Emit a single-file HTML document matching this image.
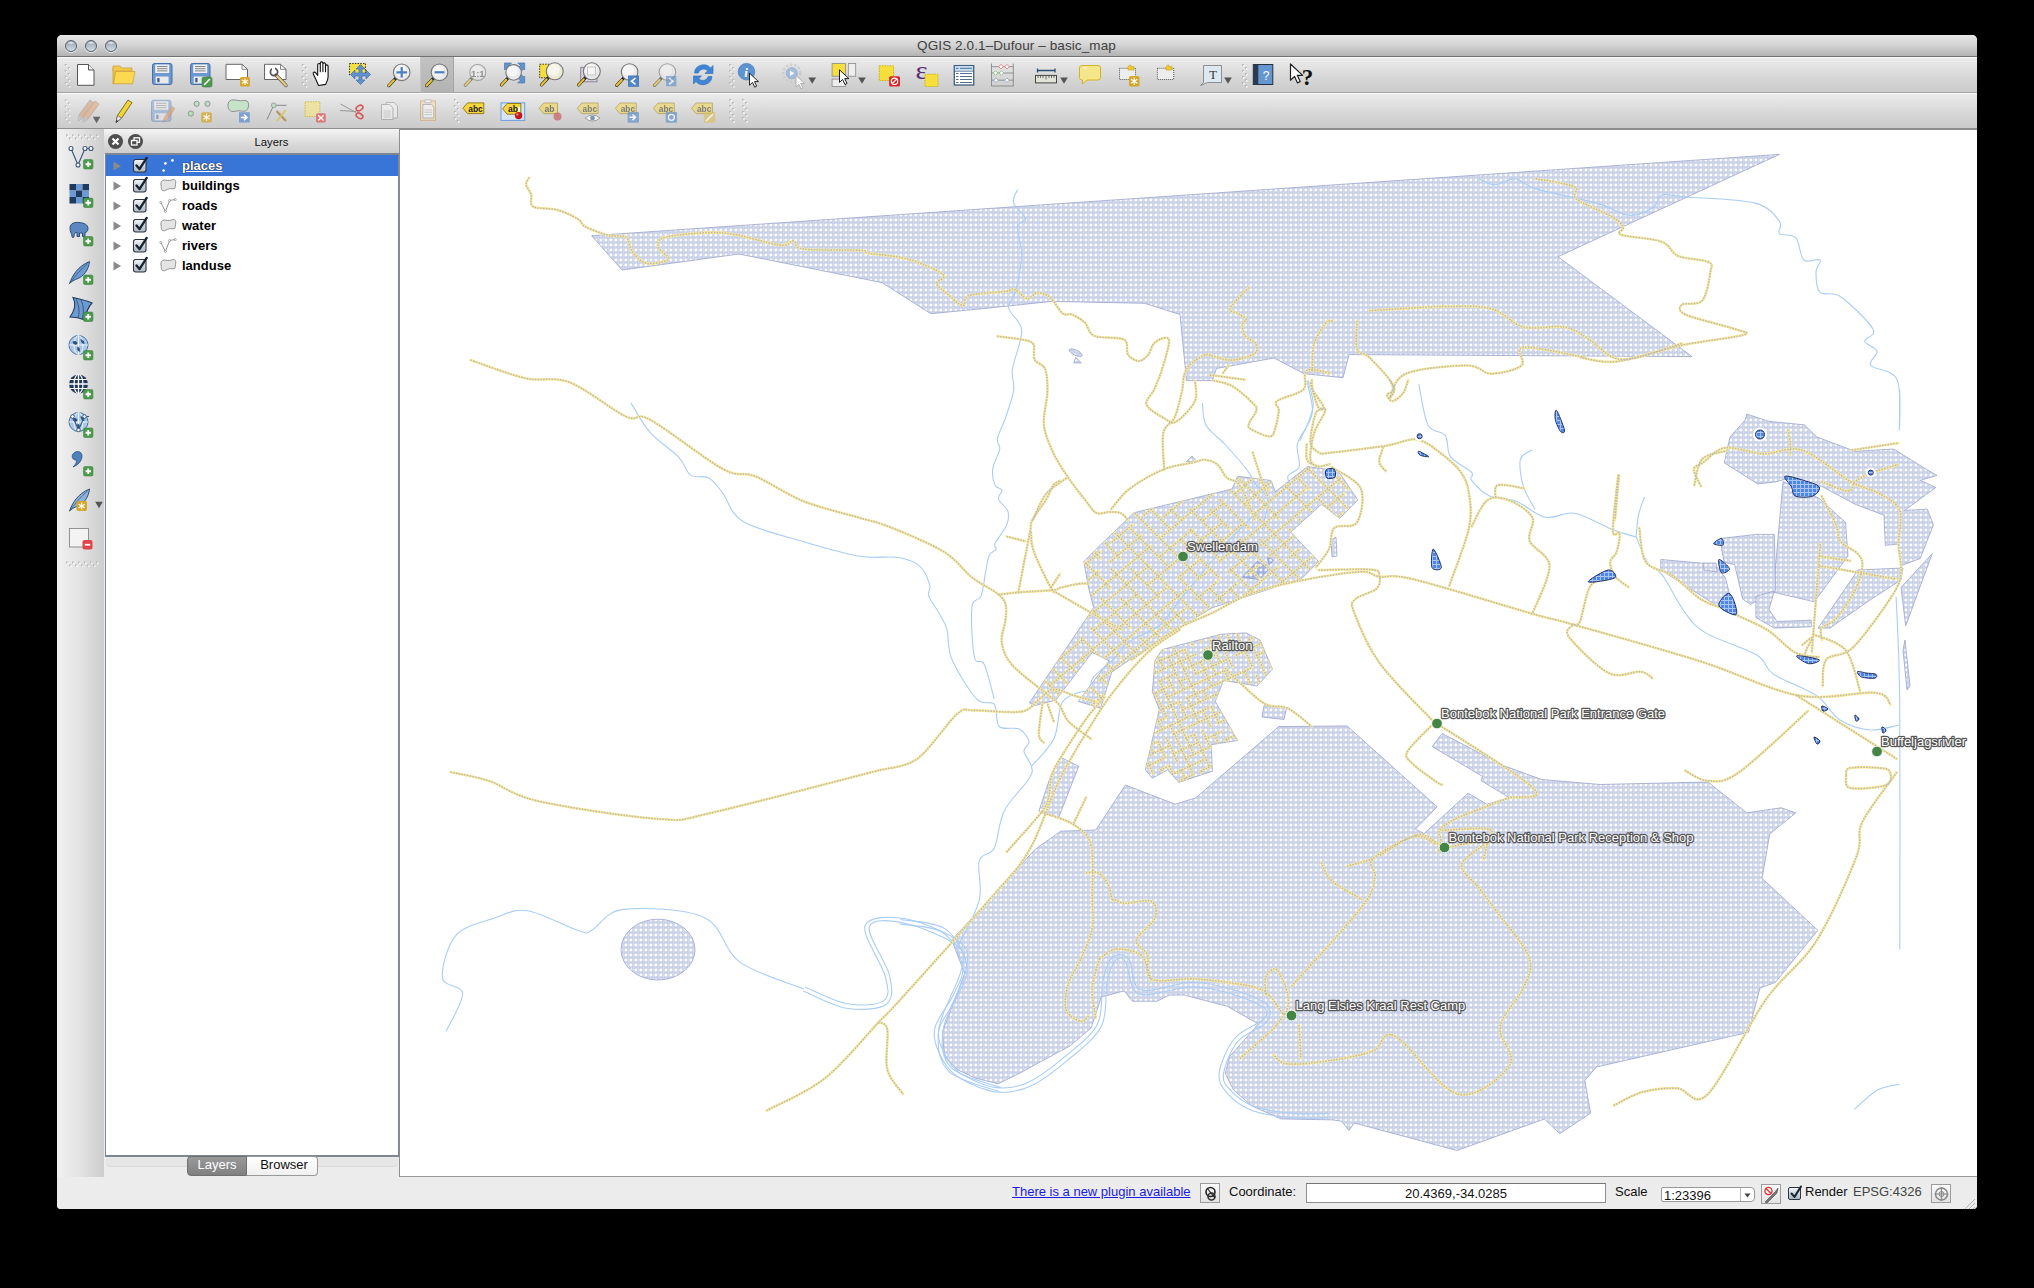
<!DOCTYPE html>
<html><head><meta charset="utf-8">
<style>
*{margin:0;padding:0;box-sizing:border-box}
html,body{width:2034px;height:1288px;background:#000;overflow:hidden;font-family:"Liberation Sans",sans-serif}
.a{position:absolute}
#win{left:57px;top:35px;width:1920px;height:1174px;background:#ececec;border-radius:5px 5px 4px 4px;overflow:hidden}
#title{left:0;top:0;width:1920px;height:22px;background:linear-gradient(#e7e7e7,#d2d2d2 50%,#b3b3b3);border-bottom:1px solid #727272}
#title .t{left:0;width:1919px;top:3px;text-align:center;font-size:13.5px;color:#404040;letter-spacing:0.1px}
.tl{width:12px;height:12px;border-radius:50%;top:5px;background:radial-gradient(ellipse 40% 18% at 50% 18%,#f2f5f8,rgba(255,255,255,0) 100%),linear-gradient(#8f9ba8,#b9c4cf 55%,#d5dde4);border:1.2px solid #56606b;box-shadow:0 1px 1px rgba(255,255,255,0.7)}
#tb1{left:0;top:22px;width:1920px;height:36px;background:linear-gradient(#ececec,#d6d6d6 60%,#cbcbcb);border-top:1px solid #fafafa;border-bottom:1px solid #a3a3a3}
#tb2{left:0;top:58px;width:1920px;height:36px;background:linear-gradient(#ebebeb,#d6d6d6 60%,#cbcbcb);border-top:1px solid #fafafa;border-bottom:1px solid #8f8f8f}
#ltb{left:0;top:94px;width:47px;height:1048px;background:linear-gradient(90deg,#f1f1f1,#e2e2e2 50%,#cdcdcd)}
#dock{left:47px;top:94px;width:296px;height:1048px;background:#ececec}
#dockhdr{left:0;top:0;width:295px;height:25px;background:linear-gradient(#f4f4f4,#d9d9d9 60%,#cccccc)}
#dockhdr .t{left:0;width:335px;top:7px;text-align:center;font-size:11.3px;color:#111}
.cb{width:15px;height:15px;border-radius:50%;background:#4e4e4e;top:4px}
#list{left:1px;top:24px;width:295px;height:1004px;background:#fff;border-left:1.5px solid #7c8793;border-top:2px solid #7c8793;border-right:2px solid #7c8793;border-bottom:2px solid #7c8793}
.row{left:0;width:292px;height:20px}
.row .nm{left:76px;top:1.5px;font-size:13px;font-weight:bold;color:#000}
#map{left:342px;top:94px;width:1578px;height:1048px;background:#fff;border-left:1px solid #8e8e8e;border-top:1px solid #8e8e8e;border-bottom:1px solid #9a9a9a;overflow:hidden}
#status{left:0;top:1142px;width:1920px;height:32px;background:#ececec}
.st{font-size:13px;color:#111;top:7px}
#tabs .tab{top:1121px;height:20px;font-size:13px;text-align:center;padding-top:0px;line-height:15px}
</style></head><body>
<div id="win" class="a">
  <div id="title" class="a">
    <div class="a tl" style="left:8px"></div>
    <div class="a tl" style="left:28px"></div>
    <div class="a tl" style="left:48px"></div>
    <div class="a t">QGIS 2.0.1–Dufour – basic_map</div>
  </div>
  <div id="tb1" class="a"></div>
  <div id="tb2" class="a"></div>
  <div id="ltb" class="a"></div>
  <div id="dock" class="a">
    <div id="dockhdr" class="a"><div class="a t">Layers</div>
      <div class="a cb" style="left:4px;top:5px"><svg width="15" height="15" style="position:absolute;left:0;top:0"><path d="M4.5,4.5l6,6M10.5,4.5l-6,6" stroke="#fff" stroke-width="2.2"/></svg></div>
      <div class="a cb" style="left:24px;top:5px"><svg width="15" height="15" style="position:absolute;left:0;top:0"><rect x="6" y="3.8" width="5.5" height="4.5" fill="none" stroke="#fff" stroke-width="1.3"/><rect x="3.5" y="6.5" width="5.5" height="4.5" fill="#4e4e4e" stroke="#fff" stroke-width="1.3"/></svg></div>
    </div>
    <div id="list" class="a"><div class="a" style="left:0;top:0;width:292px;height:1px;background:#3875d7"></div><div class="a row" style="top:1px;background:#3875d7"><svg class="a" style="left:0;top:0" width="292" height="20"><path d="M7.5,5.5 v9 l7.6,-4.5z" fill="#8a8a8a"/><defs><linearGradient id="cbg0" x1="0" y1="0" x2="0" y2="1"><stop offset="0" stop-color="#f4f6f9"/><stop offset="1" stop-color="#aab6c2"/></linearGradient></defs><rect x="27.5" y="3.5" width="12.5" height="12.5" rx="2.2" fill="url(#cbg0)" stroke="#2d3540" stroke-width="1.1"/><path d="M30.5,9.5 l3,3.6 l7.2,-11.2" fill="none" stroke="#1b2633" stroke-width="2.4" stroke-linecap="round" stroke-linejoin="round"/><circle cx="59.4" cy="7.4" r="1.3" fill="#fff"/><circle cx="66.4" cy="4.4" r="1.3" fill="#fff"/><circle cx="57.6" cy="14.5" r="1.3" fill="#fff"/></svg><div class="a nm" style="color:#fff;text-decoration:underline;text-shadow:0 0 1px #222,0 0 1px #222">places</div></div><div class="a row" style="top:21px;background:transparent"><svg class="a" style="left:0;top:0" width="292" height="20"><path d="M7.5,5.5 v9 l7.6,-4.5z" fill="#8a8a8a"/><defs><linearGradient id="cbg1" x1="0" y1="0" x2="0" y2="1"><stop offset="0" stop-color="#f4f6f9"/><stop offset="1" stop-color="#aab6c2"/></linearGradient></defs><rect x="27.5" y="3.5" width="12.5" height="12.5" rx="2.2" fill="url(#cbg1)" stroke="#2d3540" stroke-width="1.1"/><path d="M30.5,9.5 l3,3.6 l7.2,-11.2" fill="none" stroke="#1b2633" stroke-width="2.4" stroke-linecap="round" stroke-linejoin="round"/><path d="M55.5,5.5 c1.5,-2 4,-1.5 6,-1 c2.5,0.6 4.5,-1.5 7,-0.8 c1.5,0.5 1.5,3 1,4.5 c-0.5,1.5 0,3 -0.5,4 c-1,1.5 -3.5,0.2 -5.5,0.5 c-2.5,0.5 -4.5,2.5 -6.8,2 c-1.5,-0.5 -1.5,-3 -1.5,-4.5 c0,-1.5 -0.8,-3.2 0.3,-4.7z" fill="#e4e4e4" stroke="#8a8a8a" stroke-width="0.9"/></svg><div class="a nm">buildings</div></div><div class="a row" style="top:41px;background:transparent"><svg class="a" style="left:0;top:0" width="292" height="20"><path d="M7.5,5.5 v9 l7.6,-4.5z" fill="#8a8a8a"/><defs><linearGradient id="cbg2" x1="0" y1="0" x2="0" y2="1"><stop offset="0" stop-color="#f4f6f9"/><stop offset="1" stop-color="#aab6c2"/></linearGradient></defs><rect x="27.5" y="3.5" width="12.5" height="12.5" rx="2.2" fill="url(#cbg2)" stroke="#2d3540" stroke-width="1.1"/><path d="M30.5,9.5 l3,3.6 l7.2,-11.2" fill="none" stroke="#1b2633" stroke-width="2.4" stroke-linecap="round" stroke-linejoin="round"/><path d="M54.8,6.5 L59.4,15.5 L63.6,4.5 L69.2,3.5" fill="none" stroke="#777" stroke-width="0.8"/><circle cx="54.8" cy="6.5" r="1" fill="#fff" stroke="#777" stroke-width="0.6"/><circle cx="59.4" cy="15.5" r="1" fill="#fff" stroke="#777" stroke-width="0.6"/><circle cx="63.6" cy="4.5" r="1" fill="#fff" stroke="#777" stroke-width="0.6"/><circle cx="69.2" cy="3.5" r="1" fill="#fff" stroke="#777" stroke-width="0.6"/></svg><div class="a nm">roads</div></div><div class="a row" style="top:61px;background:transparent"><svg class="a" style="left:0;top:0" width="292" height="20"><path d="M7.5,5.5 v9 l7.6,-4.5z" fill="#8a8a8a"/><defs><linearGradient id="cbg3" x1="0" y1="0" x2="0" y2="1"><stop offset="0" stop-color="#f4f6f9"/><stop offset="1" stop-color="#aab6c2"/></linearGradient></defs><rect x="27.5" y="3.5" width="12.5" height="12.5" rx="2.2" fill="url(#cbg3)" stroke="#2d3540" stroke-width="1.1"/><path d="M30.5,9.5 l3,3.6 l7.2,-11.2" fill="none" stroke="#1b2633" stroke-width="2.4" stroke-linecap="round" stroke-linejoin="round"/><path d="M55.5,5.5 c1.5,-2 4,-1.5 6,-1 c2.5,0.6 4.5,-1.5 7,-0.8 c1.5,0.5 1.5,3 1,4.5 c-0.5,1.5 0,3 -0.5,4 c-1,1.5 -3.5,0.2 -5.5,0.5 c-2.5,0.5 -4.5,2.5 -6.8,2 c-1.5,-0.5 -1.5,-3 -1.5,-4.5 c0,-1.5 -0.8,-3.2 0.3,-4.7z" fill="#e4e4e4" stroke="#8a8a8a" stroke-width="0.9"/></svg><div class="a nm">water</div></div><div class="a row" style="top:81px;background:transparent"><svg class="a" style="left:0;top:0" width="292" height="20"><path d="M7.5,5.5 v9 l7.6,-4.5z" fill="#8a8a8a"/><defs><linearGradient id="cbg4" x1="0" y1="0" x2="0" y2="1"><stop offset="0" stop-color="#f4f6f9"/><stop offset="1" stop-color="#aab6c2"/></linearGradient></defs><rect x="27.5" y="3.5" width="12.5" height="12.5" rx="2.2" fill="url(#cbg4)" stroke="#2d3540" stroke-width="1.1"/><path d="M30.5,9.5 l3,3.6 l7.2,-11.2" fill="none" stroke="#1b2633" stroke-width="2.4" stroke-linecap="round" stroke-linejoin="round"/><path d="M54.8,6.5 L59.4,15.5 L63.6,4.5 L69.2,3.5" fill="none" stroke="#777" stroke-width="0.8"/><circle cx="54.8" cy="6.5" r="1" fill="#fff" stroke="#777" stroke-width="0.6"/><circle cx="59.4" cy="15.5" r="1" fill="#fff" stroke="#777" stroke-width="0.6"/><circle cx="63.6" cy="4.5" r="1" fill="#fff" stroke="#777" stroke-width="0.6"/><circle cx="69.2" cy="3.5" r="1" fill="#fff" stroke="#777" stroke-width="0.6"/></svg><div class="a nm">rivers</div></div><div class="a row" style="top:101px;background:transparent"><svg class="a" style="left:0;top:0" width="292" height="20"><path d="M7.5,5.5 v9 l7.6,-4.5z" fill="#8a8a8a"/><defs><linearGradient id="cbg5" x1="0" y1="0" x2="0" y2="1"><stop offset="0" stop-color="#f4f6f9"/><stop offset="1" stop-color="#aab6c2"/></linearGradient></defs><rect x="27.5" y="3.5" width="12.5" height="12.5" rx="2.2" fill="url(#cbg5)" stroke="#2d3540" stroke-width="1.1"/><path d="M30.5,9.5 l3,3.6 l7.2,-11.2" fill="none" stroke="#1b2633" stroke-width="2.4" stroke-linecap="round" stroke-linejoin="round"/><path d="M55.5,5.5 c1.5,-2 4,-1.5 6,-1 c2.5,0.6 4.5,-1.5 7,-0.8 c1.5,0.5 1.5,3 1,4.5 c-0.5,1.5 0,3 -0.5,4 c-1,1.5 -3.5,0.2 -5.5,0.5 c-2.5,0.5 -4.5,2.5 -6.8,2 c-1.5,-0.5 -1.5,-3 -1.5,-4.5 c0,-1.5 -0.8,-3.2 0.3,-4.7z" fill="#e4e4e4" stroke="#8a8a8a" stroke-width="0.9"/></svg><div class="a nm">landuse</div></div></div>
    <div class="a" style="left:2px;top:1029px;width:292px;height:9px;border-bottom:1px solid #dadada;background:#e6e6e6;border-radius:0 0 4px 4px"></div>
  </div>
  <div id="map" class="a"><svg class="a" style="left:0;top:0" width="1576" height="1046" viewBox="400 130 1576 1046">
<defs><pattern id="dp" width="5" height="5" patternUnits="userSpaceOnUse"><rect width="5" height="5" fill="#c7cfe7"/><rect x="2.9" y="0" width="1.2" height="5" fill="#d2d9ec"/><circle cx="0.9" cy="0" r="1.45" fill="#fff"/><circle cx="0.9" cy="5" r="1.45" fill="#fff"/><circle cx="5.9" cy="0" r="1.45" fill="#fff"/><circle cx="5.9" cy="5" r="1.45" fill="#fff"/></pattern><pattern id="dp2" width="5" height="5" patternUnits="userSpaceOnUse"><rect width="5" height="5" fill="#a3b3de"/><circle cx="0.9" cy="0" r="1.45" fill="#fff"/><circle cx="0.9" cy="5" r="1.45" fill="#fff"/><circle cx="5.9" cy="0" r="1.45" fill="#fff"/><circle cx="5.9" cy="5" r="1.45" fill="#fff"/></pattern><pattern id="wp" width="4" height="4" patternUnits="userSpaceOnUse"><rect width="4" height="4" fill="#4f86ee"/><rect x="0" y="0" width="4" height="1" fill="#a9c6f7"/><rect x="0" y="0" width="1" height="4" fill="#a9c6f7"/></pattern>
<clipPath id="cs"><polygon points="1029.4,702.8 1093.6,607.7 1088.0,585.4 1083.9,561.6 1097.8,547.6 1134.0,512.7 1232.0,489.0 1237.6,476.3 1271.0,480.5 1275.3,491.7 1307.5,466.6 1338.0,470.7 1357.8,500.0 1339.6,518.3 1321.5,504.3 1290.7,532.2 1318.7,561.6 1301.9,578.4 1212.4,607.7 1156.5,641.3 1111.8,672.0 1100.6,708.3 1078.3,701.4 1109.0,660.8 1092.2,652.4 1055.9,700.0 1035.0,705.5"/></clipPath>
<clipPath id="cr"><polygon points="1145.4,769.8 1152.3,778.2 1167.7,769.8 1178.9,782.4 1212.4,771.2 1211.0,744.7 1237.6,740.5 1232.0,730.7 1215.2,701.4 1223.6,680.4 1257.0,686.0 1272.5,669.2 1260.0,640.0 1246.0,632.9 1220.8,634.3 1162.0,649.6 1155.0,660.8 1152.3,691.6 1159.3,709.7"/></clipPath>
</defs>
<g fill="url(#dp)" stroke="#9aa3cc" stroke-width="0.8">
<polygon points="591.7,235.7 1779.4,154.4 1558.0,256.7 1692.0,356.6 1349.0,354.6 1343.0,377.7 1304.0,373.7 1274.0,358.0 1216.3,368.5 1212.6,380.6 1186.5,380.6 1180.0,314.5 1144.6,303.3 1051.5,301.4 990.0,307.9 930.8,313.7 882.0,282.6 739.0,254.0 622.0,270.0"/>
<polygon points="1029.4,702.8 1093.6,607.7 1088.0,585.4 1083.9,561.6 1097.8,547.6 1134.0,512.7 1232.0,489.0 1237.6,476.3 1271.0,480.5 1275.3,491.7 1307.5,466.6 1338.0,470.7 1357.8,500.0 1339.6,518.3 1321.5,504.3 1290.7,532.2 1318.7,561.6 1301.9,578.4 1212.4,607.7 1156.5,641.3 1111.8,672.0 1100.6,708.3 1078.3,701.4 1109.0,660.8 1092.2,652.4 1055.9,700.0 1035.0,705.5"/>
<polygon points="1145.4,769.8 1152.3,778.2 1167.7,769.8 1178.9,782.4 1212.4,771.2 1211.0,744.7 1237.6,740.5 1232.0,730.7 1215.2,701.4 1223.6,680.4 1257.0,686.0 1272.5,669.2 1260.0,640.0 1246.0,632.9 1220.8,634.3 1162.0,649.6 1155.0,660.8 1152.3,691.6 1159.3,709.7"/>
<polygon points="1038.9,811.0 1051.4,773.7 1061.3,757.6 1078.7,766.3 1058.8,817.2"/>
<polygon points="1264.0,705.6 1286.5,708.0 1284.0,719.5 1262.0,717.0"/>
<polygon points="1186.5,461.6 1192.1,456.1 1196.8,461.6"/>
<polygon points="1331.0,540.0 1336.0,537.0 1337.0,556.0 1332.0,557.0"/>
<polygon points="1278.7,726.6 1347.0,725.9 1437.1,806.8 1415.4,829.2 1424.1,833.5 1468.2,793.2 1486.8,804.3 1509.2,797.5 1481.2,780.7 1482.5,776.4 1432.2,746.6 1442.1,733.5 1504.2,765.8 1541.5,779.5 1600.0,784.5 1708.0,782.0 1746.6,812.8 1781.2,807.8 1795.8,812.8 1769.7,834.0 1762.0,878.3 1817.8,930.3 1775.4,982.3 1760.0,988.0 1748.5,1032.3 1596.4,1067.0 1584.8,1080.5 1590.6,1113.2 1559.8,1133.6 1544.4,1119.0 1457.0,1150.5 1354.4,1123.0 1348.9,1130.4 1341.5,1121.2 1332.6,1119.9 1281.0,1118.9 1252.0,1106.0 1233.5,1090.0 1225.3,1073.4 1229.4,1056.9 1258.3,1023.9 1227.3,1006.3 1184.0,995.0 1169.5,995.0 1157.1,1001.2 1132.4,1001.2 1124.1,990.9 1101.4,997.0 1091.0,1028.0 1070.0,1046.0 1045.6,1059.0 1020.0,1073.0 998.1,1083.8 975.0,1078.0 956.8,1069.3 944.5,1056.9 942.4,1032.1 964.7,973.4 951.7,940.1 1034.9,849.6 1060.7,831.2 1095.8,830.0 1125.4,785.0 1175.2,804.2 1195.6,797.9"/>
<polygon points="1746.9,414.1 1768.5,421.3 1804.6,424.9 1816.7,436.9 1855.2,451.4 1893.7,449.0 1922.6,467.0 1937.0,475.5 1920.2,480.3 1935.8,487.5 1904.5,510.4 1927.4,509.2 1933.4,524.8 1920.2,558.5 1901.0,565.7 1898.5,544.0 1885.3,545.3 1884.0,515.2 1855.2,504.3 1821.5,486.3 1790.0,478.0 1775.0,482.0 1757.7,483.9 1724.2,462.8 1730.0,437.0 1745.2,420.0"/>
<polygon points="1783.0,481.5 1819.0,498.3 1845.5,522.4 1848.0,556.1 1814.3,601.8 1773.3,592.2"/>
<polygon points="1660.8,559.5 1704.4,563.4 1715.0,564.7 1725.5,577.9 1732.1,604.3 1718.9,607.0 1660.8,570.0"/>
<polygon points="1721.5,538.4 1755.9,534.4 1774.3,534.4 1775.7,591.1 1750.6,604.3 1742.7,599.1 1734.7,564.7 1724.2,562.1 1721.5,548.9"/>
<polygon points="1755.9,596.4 1774.3,591.1 1769.0,609.6 1777.0,621.5 1811.3,620.2 1811.3,626.8 1774.3,628.1 1755.9,617.5"/>
<polygon points="1703.0,563.0 1716.0,563.0 1717.0,572.0 1704.0,570.0"/>
<polygon points="1817.9,628.3 1858.0,570.0 1903.0,568.0 1901.0,580.0 1870.0,600.0 1830.0,628.0"/>
<polygon points="1932.2,553.7 1905.7,625.9 1901.0,587.4"/>
<polygon points="1905.0,640.0 1910.0,686.0 1907.0,690.0 1903.0,650.0"/>
<polygon points="1073.8,362.9 1075.7,357.3 1081.3,362.9"/>
<polygon points="1242.6,577.2 1257.3,561.4 1268.8,568.8 1259.4,579.6" fill="url(#dp2)" stroke="#8d9ccc" stroke-width="0.8"/><polygon points="1267.4,557.9 1269.2,557.2 1273.4,560.4 1269.2,564.6" fill="url(#dp2)" stroke="#8d9ccc" stroke-width="0.8"/>
<ellipse cx="658" cy="949.6" rx="37" ry="30.4" transform="rotate(0 658 949.6)"/>
<ellipse cx="1075.7" cy="352.7" rx="7" ry="2.6" transform="rotate(25 1075.7 352.7)"/>
</g>
<g fill="none" stroke="#a9cdf5" stroke-width="1.1">
<path d="M1017.6,189.7 C1016.9,191.9 1012.2,197.8 1013.5,202.7 C1014.8,207.5 1024.9,214.8 1025.6,218.8 C1026.3,222.8 1018.3,220.9 1017.6,226.9 C1016.9,232.9 1022.0,244.3 1021.6,255.1 C1021.2,265.9 1017.7,282.7 1015.5,291.5 C1013.3,300.3 1007.6,301.5 1008.6,308.0 C1009.6,314.5 1021.1,320.1 1021.7,330.3 C1022.3,340.5 1013.7,359.5 1012.4,369.4 C1011.1,379.3 1014.9,381.7 1013.7,389.8 C1012.6,397.9 1008.2,409.7 1005.5,417.8 C1002.8,425.9 998.4,433.5 997.4,438.7 C996.4,443.9 1000.5,444.1 999.7,449.2 C998.9,454.2 993.5,463.0 992.7,469.0 C991.9,475.0 993.5,481.8 995.0,485.3 C996.5,488.8 1001.4,487.7 1002.0,490.0 C1002.6,492.3 997.5,495.8 998.5,499.3 C999.5,502.8 1006.4,506.6 1007.8,510.9 C1009.2,515.2 1008.8,519.5 1006.7,524.9 C1004.6,530.3 996.8,539.4 995.0,543.5 C993.2,547.6 997.2,547.3 996.2,549.3 C995.2,551.2 991.0,551.5 989.2,555.2 C987.5,558.9 987.1,564.7 985.7,571.5 C984.4,578.3 983.4,589.9 981.1,595.9 C978.8,601.9 973.0,597.1 971.9,607.3 C970.8,617.5 972.3,647.5 974.4,657.0 C976.5,666.5 981.0,657.4 984.3,664.4 C987.6,671.4 992.6,693.4 994.2,699.2"/>
<path d="M630.9,402.9 C634.1,407.9 642.4,423.7 650.3,432.7 C658.2,441.7 671.8,449.8 678.5,456.9 C685.2,464.0 685.6,471.6 690.6,475.1 C695.6,478.6 703.4,474.9 708.8,477.9 C714.2,480.9 717.2,486.0 722.9,493.3 C728.6,500.6 729.6,513.4 743.1,521.5 C756.6,529.6 784.1,535.9 803.6,541.7 C823.1,547.5 844.2,553.7 860.0,556.3 C875.8,558.9 888.3,555.8 898.4,557.5 C908.5,559.2 915.3,562.1 920.5,566.8 C925.7,571.4 928.4,580.5 929.8,585.4 C931.2,590.2 927.1,591.2 928.7,595.9 C930.3,600.6 936.2,607.8 939.2,613.4 C942.2,619.0 944.9,622.0 947.0,629.7 C949.1,637.4 947.0,647.9 952.0,659.5 C957.0,671.1 969.9,691.8 976.9,699.2 C983.9,706.7 990.5,699.7 994.2,704.2 C997.9,708.8 995.1,722.4 999.2,726.5 C1003.4,730.6 1014.1,726.5 1019.1,729.0 C1024.1,731.5 1028.2,737.7 1029.0,741.4 C1029.8,745.1 1023.6,747.2 1024.0,751.4 C1024.4,755.5 1030.7,761.8 1031.5,766.3 C1032.3,770.8 1033.5,771.2 1029.0,778.7 C1024.5,786.2 1010.0,799.4 1004.2,811.0 C998.4,822.6 998.4,839.9 994.2,848.2 C990.1,856.5 981.8,852.0 979.3,860.6 C976.8,869.2 982.7,886.0 979.3,899.9 C975.9,913.8 962.3,936.9 958.9,944.3"/>
<path d="M1478.9,178.7 C1481.6,179.7 1489.1,184.8 1495.2,184.8 C1501.3,184.8 1508.7,178.0 1515.5,178.7 C1522.3,179.4 1522.3,184.8 1535.8,188.9 C1549.3,193.0 1581.1,198.7 1596.7,203.1 C1612.3,207.5 1619.7,214.6 1629.2,215.3 C1638.7,216.0 1648.2,210.6 1653.6,207.2 C1659.0,203.8 1656.3,196.7 1661.7,195.0 C1667.1,193.3 1670.4,195.7 1686.0,197.0 C1701.6,198.3 1739.5,199.0 1755.1,203.1 C1770.7,207.2 1775.4,216.3 1779.4,221.4 C1783.5,226.5 1776.7,230.9 1779.4,233.6 C1782.1,236.3 1791.6,233.2 1795.7,237.6 C1799.8,242.0 1799.8,256.3 1803.8,260.0 C1807.8,263.7 1818.0,258.0 1820.0,260.0 C1822.0,262.0 1816.0,266.7 1816.0,272.1 C1816.0,277.5 1815.9,288.3 1820.0,292.4 C1824.1,296.5 1831.6,290.4 1840.4,296.5 C1849.2,302.6 1868.9,321.6 1872.9,329.0 C1877.0,336.4 1864.0,337.5 1864.7,341.2 C1865.4,344.9 1876.0,347.2 1877.0,351.3 C1878.0,355.4 1867.4,360.8 1870.8,365.5 C1874.2,370.2 1892.5,368.9 1897.2,379.7 C1902.0,390.5 1899.0,422.0 1899.3,430.5"/>
<path d="M446.0,1031.4 C448.8,1025.1 463.2,1002.3 462.6,993.4 C462.0,984.5 443.6,987.5 442.5,977.8 C441.4,968.1 447.3,945.2 455.9,935.3 C464.5,925.4 482.0,922.4 493.9,918.3 C505.8,914.2 513.2,908.6 527.4,910.7 C541.5,912.8 568.0,927.6 578.8,930.8 C589.6,934.0 584.8,933.6 592.2,930.0 C599.7,926.4 604.9,911.5 623.5,909.4 C642.1,907.3 684.6,908.6 704.0,917.4 C723.4,926.2 723.1,950.2 739.8,962.1 C756.5,974.0 793.3,984.5 804.0,989.0"/>
<path d="M803.2,991.0 C810.4,993.9 832.8,1006.0 846.6,1008.2 C860.5,1010.4 879.3,1009.7 886.4,1004.2 C893.6,998.6 892.3,987.9 889.4,975.1 C886.6,962.3 866.7,935.7 869.3,927.1 C871.8,918.4 890.1,920.0 904.8,923.2 C919.5,926.3 948.1,938.1 957.5,946.0 C966.9,953.9 964.3,956.8 961.1,970.6 C958.0,984.5 941.0,1012.2 938.8,1028.9 C936.7,1045.6 938.3,1060.5 948.3,1070.9 C958.4,1081.4 990.7,1088.2 999.2,1091.6"/>
<path d="M804.8,987.0 C811.9,989.8 834.2,1001.5 847.4,1003.8 C860.5,1006.1 877.5,1005.3 883.8,1000.6 C890.1,996.0 888.3,988.6 885.2,976.1 C882.0,963.6 861.7,935.3 865.1,925.7 C868.5,916.2 889.8,916.0 905.6,918.8 C921.5,921.7 950.4,933.8 960.3,942.6 C970.3,951.4 968.3,957.1 965.5,971.6 C962.6,986.0 945.5,1013.4 943.2,1029.5 C940.9,1045.5 941.9,1058.2 951.5,1067.9 C961.1,1077.5 992.6,1084.3 1000.8,1087.6"/>
<path d="M1418.8,384.0 C1420.3,390.8 1423.6,416.3 1428.0,424.9 C1432.4,433.5 1441.5,430.1 1445.2,435.4 C1449.0,440.7 1446.1,450.4 1450.5,456.6 C1454.9,462.8 1468.1,468.4 1471.6,472.4 C1475.1,476.3 1468.5,476.3 1471.6,480.3 C1474.7,484.3 1482.6,492.7 1490.1,496.2 C1497.6,499.7 1507.3,498.0 1516.5,501.5 C1525.7,505.0 1535.8,515.3 1545.5,517.3 C1555.2,519.3 1563.6,511.3 1574.6,513.3 C1585.6,515.3 1601.2,525.2 1611.5,529.2 C1621.8,533.2 1632.4,535.8 1636.6,537.1"/>
<path d="M1532.3,450.0 C1530.3,451.5 1522.0,453.3 1520.5,459.2 C1519.0,465.1 1520.7,477.2 1523.1,485.6 C1525.5,494.0 1533.0,505.4 1535.0,509.4"/>
<path d="M1307.9,380.0 C1308.8,384.0 1313.0,397.2 1313.2,403.8 C1313.4,410.4 1311.4,413.5 1309.2,419.6 C1307.0,425.8 1301.5,437.2 1300.0,440.7"/>
<path d="M1636.1,536.8 C1638.1,541.2 1643.7,556.9 1648.1,563.3 C1652.5,569.7 1656.6,567.4 1662.6,575.4 C1668.6,583.4 1677.1,601.9 1684.3,611.5 C1691.5,621.1 1693.9,625.9 1705.9,633.1 C1717.9,640.3 1745.3,648.0 1756.5,654.8 C1767.7,661.6 1763.3,667.3 1773.3,674.1 C1783.3,680.9 1805.6,688.1 1816.7,695.7 C1827.8,703.4 1831.1,714.3 1840.0,720.0 C1848.9,725.7 1860.2,729.2 1870.0,730.0 C1879.8,730.8 1894.2,725.8 1899.0,725.0"/>
<path d="M1644.5,497.1 C1643.5,500.1 1639.9,508.6 1638.5,515.2 C1637.1,521.8 1636.5,533.2 1636.1,536.8"/>
<path d="M1899.7,390.0 L1899.7,426.1"/>
<path d="M1896.1,597.0 C1896.7,614.2 1899.1,641.2 1899.7,700.0 C1900.3,758.8 1899.8,907.9 1899.8,949.5"/>
<path d="M1854.4,1109.3 C1858.2,1106.1 1869.9,1094.2 1877.5,1090.0 C1885.1,1085.8 1896.1,1085.2 1899.8,1084.3"/>
<path d="M1031.5,766.3 C1035.2,761.7 1048.8,749.2 1053.8,738.9 C1058.8,728.5 1058.0,711.7 1061.3,704.2 C1064.6,696.8 1069.2,696.7 1073.7,694.2 C1078.2,691.7 1085.3,692.2 1088.6,689.3 C1091.9,686.4 1089.5,681.9 1093.6,676.9 C1097.7,671.9 1107.6,665.3 1113.4,659.5 C1119.2,653.7 1120.4,647.9 1128.3,642.1 C1136.2,636.3 1152.0,631.7 1160.6,624.7 C1169.2,617.7 1168.4,614.0 1180.0,599.9 C1191.6,585.8 1215.0,556.6 1230.0,540.0 C1245.0,523.4 1260.3,508.9 1270.0,500.0 C1279.7,491.1 1285.1,490.9 1288.1,486.8 C1291.1,482.7 1286.2,479.0 1288.1,475.6 C1290.0,472.2 1297.8,471.6 1299.3,466.3 C1300.8,461.0 1295.7,451.4 1297.4,444.0 C1299.1,436.6 1307.0,427.8 1309.5,421.6 C1312.0,415.4 1312.8,413.5 1312.3,406.7 C1311.8,399.9 1307.6,385.0 1306.7,380.6"/>
<path d="M1202.4,403.0 C1203.0,406.7 1202.4,418.5 1206.1,425.3 C1209.8,432.1 1217.9,436.6 1224.7,444.0 C1231.5,451.4 1242.1,463.5 1247.1,470.0 C1252.1,476.5 1251.2,478.1 1254.6,483.1 C1258.0,488.1 1266.4,492.0 1267.6,499.8 C1268.8,507.6 1262.9,525.0 1262.0,530.0"/>
<path d="M899.6,923.9 C906.8,925.3 932.6,925.6 943.1,932.7 C953.6,939.8 960.8,956.0 962.5,966.4 C964.3,976.7 958.0,984.4 953.4,994.7 C948.8,1005.0 936.9,1018.2 934.8,1028.3 C932.6,1038.5 936.7,1047.6 940.5,1055.7 C944.4,1063.7 948.7,1070.8 957.9,1076.8 C967.1,1082.9 983.8,1090.4 995.8,1092.0 C1007.9,1093.5 1018.2,1091.5 1030.2,1086.2 C1042.2,1080.9 1055.8,1070.1 1067.7,1060.1 C1079.6,1050.1 1094.9,1039.2 1101.5,1026.1 C1108.0,1012.9 1104.8,992.3 1107.1,981.3 C1109.5,970.3 1112.7,963.5 1115.8,960.2 C1118.8,957.0 1121.5,956.2 1125.5,961.8 C1129.4,967.5 1128.3,989.8 1139.3,994.0 C1150.4,998.1 1176.5,986.7 1191.9,986.7 C1207.3,986.7 1219.8,990.4 1231.9,994.0 C1243.9,997.6 1259.2,1003.9 1264.3,1008.2 C1269.4,1012.5 1267.2,1014.9 1262.3,1019.9 C1257.3,1025.0 1241.7,1029.7 1234.5,1038.5 C1227.3,1047.3 1220.4,1063.8 1219.2,1072.9 C1218.0,1082.0 1221.7,1086.8 1227.2,1093.1 C1232.6,1099.3 1241.3,1106.2 1252.0,1110.4 C1262.7,1114.5 1278.6,1116.5 1291.4,1117.8 C1304.2,1119.0 1322.4,1117.8 1328.6,1117.8"/>
<path d="M900.4,919.5 C908.0,921.1 934.5,921.4 945.5,929.1 C956.6,936.8 964.9,954.4 966.9,965.6 C968.8,976.9 962.0,985.9 957.4,996.5 C952.8,1007.1 941.2,1019.7 939.0,1029.3 C936.9,1038.8 940.9,1046.4 944.5,1053.7 C948.0,1061.1 951.7,1067.5 960.3,1073.2 C969.0,1078.8 985.0,1086.1 996.4,1087.6 C1007.7,1089.1 1017.0,1087.3 1028.4,1082.2 C1039.8,1077.0 1053.4,1066.4 1064.9,1056.7 C1076.4,1047.0 1091.2,1036.9 1097.5,1024.1 C1103.9,1011.4 1100.3,991.5 1102.9,980.3 C1105.4,969.1 1108.5,960.5 1112.8,957.0 C1117.2,953.4 1124.3,953.7 1128.9,959.2 C1133.6,964.6 1130.4,986.0 1140.9,989.8 C1151.4,993.7 1176.5,982.3 1191.9,982.3 C1207.3,982.3 1220.6,986.0 1233.1,989.8 C1245.7,993.6 1261.9,999.5 1267.3,1005.0 C1272.7,1010.5 1270.4,1016.8 1265.5,1022.9 C1260.6,1028.9 1244.9,1032.9 1237.9,1041.3 C1230.9,1049.7 1224.8,1065.4 1223.6,1073.5 C1222.3,1081.7 1225.4,1084.7 1230.4,1090.1 C1235.4,1095.6 1243.4,1102.4 1253.6,1106.2 C1263.8,1110.1 1279.3,1112.2 1291.8,1113.4 C1304.3,1114.6 1322.5,1113.4 1328.6,1113.4"/>
</g>
<g fill="none" stroke-linejoin="round" stroke-linecap="round" stroke="#fae995" stroke-width="2.6" clip-path="url(#cs)">
<path d="M932.3,546.6 L943.0,537.6 L953.8,528.6 L964.5,519.6 L975.2,510.6 L985.9,501.6"/>
<path d="M1007.4,483.6 L1018.1,474.6 L1028.8,465.6 L1039.6,456.6 L1050.3,447.6 L1061.0,438.6 L1071.7,429.6 L1082.5,420.6 L1093.2,411.6"/>
<path d="M1103.9,402.6 L1114.6,393.6 L1125.4,384.6 L1136.1,375.6 L1146.8,366.6 L1157.5,357.6"/>
<path d="M1168.3,348.6 L1179.0,339.6 L1189.7,330.6 L1200.4,321.6"/>
<path d="M1211.2,312.6 L1221.9,303.6 L1232.6,294.6"/>
<path d="M941.3,557.3 L952.0,548.3 L962.8,539.3 L973.5,530.3 L984.2,521.3 L994.9,512.3 L1005.7,503.3 L1016.4,494.3 L1027.1,485.3 L1037.8,476.3"/>
<path d="M1059.3,458.3 L1070.0,449.3 L1080.7,440.3 L1091.5,431.3 L1102.2,422.3 L1112.9,413.3 L1123.6,404.3 L1134.4,395.3 L1145.1,386.3 L1155.8,377.3 L1166.5,368.3 L1177.3,359.3 L1188.0,350.3 L1198.7,341.3 L1209.4,332.3 L1220.2,323.3 L1230.9,314.3"/>
<path d="M950.3,568.0 L961.0,559.0 L971.8,550.0 L982.5,541.0 L993.2,532.0 L1003.9,523.0 L1014.7,514.0 L1025.4,505.0 L1036.1,496.0 L1046.8,487.0"/>
<path d="M1057.6,478.0 L1068.3,469.0 L1079.0,460.0"/>
<path d="M1089.7,451.0 L1100.5,442.0 L1111.2,433.0"/>
<path d="M1121.9,424.0 L1132.6,415.0 L1143.4,406.0 L1154.1,397.0"/>
<path d="M1164.8,388.0 L1175.5,379.1"/>
<path d="M1186.3,370.1 L1197.0,361.1 L1207.7,352.1 L1218.4,343.1 L1229.2,334.1 L1239.9,325.1 L1250.6,316.1"/>
<path d="M959.3,578.8 L970.0,569.8"/>
<path d="M980.8,560.8 L991.5,551.8"/>
<path d="M1012.9,533.8 L1023.7,524.8 L1034.4,515.8"/>
<path d="M1055.8,497.8 L1066.6,488.8 L1077.3,479.8 L1088.0,470.8 L1098.7,461.8 L1109.5,452.8 L1120.2,443.8 L1130.9,434.8 L1141.6,425.8 L1152.4,416.8 L1163.1,407.8 L1173.8,398.8 L1184.5,389.8 L1195.3,380.8 L1206.0,371.8 L1216.7,362.8 L1227.4,353.8 L1238.2,344.8 L1248.9,335.8 L1259.6,326.8"/>
<path d="M968.3,589.5 L979.0,580.5"/>
<path d="M989.8,571.5 L1000.5,562.5 L1011.2,553.5"/>
<path d="M1021.9,544.5 L1032.7,535.5 L1043.4,526.5"/>
<path d="M1054.1,517.5 L1064.8,508.5 L1075.6,499.5 L1086.3,490.5 L1097.0,481.5 L1107.7,472.5 L1118.5,463.5"/>
<path d="M1139.9,445.5 L1150.6,436.5 L1161.4,427.5 L1172.1,418.5 L1182.8,409.5 L1193.5,400.5 L1204.3,391.5 L1215.0,382.5 L1225.7,373.5 L1236.4,364.5 L1247.2,355.5 L1257.9,346.5 L1268.6,337.5"/>
<path d="M977.3,600.2 L988.0,591.2"/>
<path d="M998.8,582.2 L1009.5,573.2 L1020.2,564.2 L1030.9,555.2 L1041.7,546.2 L1052.4,537.2 L1063.1,528.2"/>
<path d="M1073.8,519.2 L1084.6,510.2 L1095.3,501.2"/>
<path d="M1106.0,492.2 L1116.7,483.2 L1127.5,474.2 L1138.2,465.2 L1148.9,456.2 L1159.6,447.2"/>
<path d="M1170.4,438.2 L1181.1,429.2 L1191.8,420.2 L1202.5,411.2 L1213.3,402.2 L1224.0,393.2"/>
<path d="M1234.7,384.2 L1245.4,375.2"/>
<path d="M1256.2,366.2 L1266.9,357.2 L1277.6,348.2"/>
<path d="M997.0,601.9 L1007.8,592.9 L1018.5,583.9 L1029.2,574.9 L1039.9,565.9 L1050.7,556.9"/>
<path d="M1061.4,547.9 L1072.1,538.9 L1082.8,529.9 L1093.6,520.9 L1104.3,511.9 L1115.0,502.9 L1125.7,493.9 L1136.5,484.9 L1147.2,475.9"/>
<path d="M1168.6,457.9 L1179.4,448.9 L1190.1,439.9 L1200.8,430.9 L1211.5,421.9 L1222.3,413.0 L1233.0,404.0 L1243.7,395.0 L1254.4,386.0 L1265.2,377.0 L1275.9,368.0 L1286.6,359.0"/>
<path d="M995.3,621.7 L1006.0,612.7 L1016.8,603.7 L1027.5,594.7"/>
<path d="M1038.2,585.7 L1048.9,576.7 L1059.7,567.7 L1070.4,558.7"/>
<path d="M1081.1,549.7 L1091.8,540.7 L1102.6,531.7 L1113.3,522.7 L1124.0,513.7 L1134.7,504.7 L1145.5,495.7"/>
<path d="M1156.2,486.7 L1166.9,477.7"/>
<path d="M1177.6,468.7 L1188.4,459.7 L1199.1,450.7 L1209.8,441.7 L1220.5,432.7 L1231.3,423.7 L1242.0,414.7 L1252.7,405.7 L1263.4,396.7 L1274.2,387.7 L1284.9,378.7 L1295.6,369.7"/>
<path d="M1004.3,632.4 L1015.0,623.4"/>
<path d="M1025.8,614.4 L1036.5,605.4 L1047.2,596.4"/>
<path d="M1057.9,587.4 L1068.7,578.4 L1079.4,569.4 L1090.1,560.4 L1100.8,551.4"/>
<path d="M1111.6,542.4 L1122.3,533.4 L1133.0,524.4"/>
<path d="M1143.7,515.4 L1154.5,506.4 L1165.2,497.4 L1175.9,488.4 L1186.6,479.4 L1197.4,470.4 L1208.1,461.4"/>
<path d="M1261.7,416.4 L1272.4,407.4 L1283.2,398.4"/>
<path d="M1293.9,389.4 L1304.6,380.4"/>
<path d="M1013.3,643.1 L1024.0,634.1 L1034.8,625.1 L1045.5,616.1 L1056.2,607.1 L1066.9,598.1 L1077.7,589.1"/>
<path d="M1088.4,580.1 L1099.1,571.1"/>
<path d="M1109.8,562.1 L1120.6,553.1 L1131.3,544.1 L1142.0,535.1"/>
<path d="M1163.5,517.1 L1174.2,508.1 L1184.9,499.1 L1195.6,490.1 L1206.4,481.1 L1217.1,472.1 L1227.8,463.1 L1238.5,454.1 L1249.3,445.1 L1260.0,436.1 L1270.7,427.1 L1281.4,418.1 L1292.2,409.1 L1302.9,400.1 L1313.6,391.1"/>
<path d="M1022.3,653.8 L1033.0,644.8 L1043.8,635.8"/>
<path d="M1054.5,626.8 L1065.2,617.8 L1075.9,608.8 L1086.7,599.8 L1097.4,590.8 L1108.1,581.8 L1118.8,572.8 L1129.6,563.8 L1140.3,554.8 L1151.0,545.8"/>
<path d="M1161.7,536.8 L1172.5,527.8 L1183.2,518.8 L1193.9,509.8 L1204.6,500.8 L1215.4,491.8 L1226.1,482.8 L1236.8,473.8"/>
<path d="M1247.5,464.8 L1258.3,455.8"/>
<path d="M1279.7,437.9 L1290.4,428.9"/>
<path d="M1031.3,664.6 L1042.0,655.6"/>
<path d="M1063.5,637.6 L1074.2,628.6"/>
<path d="M1084.9,619.6 L1095.7,610.6 L1106.4,601.6 L1117.1,592.6 L1127.8,583.6 L1138.6,574.6 L1149.3,565.6"/>
<path d="M1160.0,556.6 L1170.7,547.6 L1181.5,538.6 L1192.2,529.6"/>
<path d="M1202.9,520.6 L1213.6,511.6 L1224.4,502.6"/>
<path d="M1235.1,493.6 L1245.8,484.6 L1256.5,475.6 L1267.3,466.6 L1278.0,457.6"/>
<path d="M1288.7,448.6 L1299.4,439.6 L1310.2,430.6 L1320.9,421.6 L1331.6,412.6"/>
<path d="M1040.3,675.3 L1051.0,666.3 L1061.8,657.3 L1072.5,648.3 L1083.2,639.3"/>
<path d="M1093.9,630.3 L1104.7,621.3 L1115.4,612.3 L1126.1,603.3 L1136.8,594.3"/>
<path d="M1147.6,585.3 L1158.3,576.3 L1169.0,567.3 L1179.7,558.3 L1190.5,549.3 L1201.2,540.3 L1211.9,531.3 L1222.6,522.3"/>
<path d="M1244.1,504.3 L1254.8,495.3 L1265.5,486.3 L1276.3,477.3 L1287.0,468.3 L1297.7,459.3"/>
<path d="M1308.4,450.3 L1319.2,441.3"/>
<path d="M1329.9,432.3 L1340.6,423.3"/>
<path d="M1049.3,686.0 L1060.0,677.0 L1070.8,668.0 L1081.5,659.0 L1092.2,650.0 L1102.9,641.0 L1113.7,632.0 L1124.4,623.0 L1135.1,614.0 L1145.8,605.0 L1156.6,596.0 L1167.3,587.0"/>
<path d="M1178.0,578.0 L1188.7,569.0 L1199.5,560.0"/>
<path d="M1210.2,551.0 L1220.9,542.0 L1231.6,533.0 L1242.4,524.0"/>
<path d="M1253.1,515.0 L1263.8,506.0 L1274.5,497.0 L1285.3,488.0 L1296.0,479.0 L1306.7,470.0 L1317.4,461.0 L1328.1,452.0 L1338.9,443.0 L1349.6,434.0"/>
<path d="M1058.3,696.7 L1069.0,687.7 L1079.8,678.7 L1090.5,669.7 L1101.2,660.7 L1111.9,651.7 L1122.7,642.7 L1133.4,633.7 L1144.1,624.7 L1154.8,615.7 L1165.6,606.7 L1176.3,597.7 L1187.0,588.7"/>
<path d="M1197.7,579.7 L1208.5,570.7"/>
<path d="M1219.2,561.7 L1229.9,552.7 L1240.6,543.7 L1251.4,534.7 L1262.1,525.7 L1272.8,516.7 L1283.5,507.7 L1294.2,498.7 L1305.0,489.7"/>
<path d="M1326.4,471.8 L1337.1,462.8 L1347.9,453.8 L1358.6,444.8"/>
<path d="M1067.3,707.5 L1078.0,698.5 L1088.8,689.5"/>
<path d="M1099.5,680.5 L1110.2,671.5 L1120.9,662.5 L1131.7,653.5 L1142.4,644.5 L1153.1,635.5 L1163.8,626.5 L1174.6,617.5 L1185.3,608.5"/>
<path d="M1196.0,599.5 L1206.7,590.5 L1217.5,581.5"/>
<path d="M1228.2,572.5 L1238.9,563.5 L1249.6,554.5"/>
<path d="M1260.4,545.5 L1271.1,536.5 L1281.8,527.5 L1292.5,518.5 L1303.2,509.5 L1314.0,500.5 L1324.7,491.5 L1335.4,482.5 L1346.1,473.5 L1356.9,464.5 L1367.6,455.5"/>
<path d="M1076.3,718.2 L1087.0,709.2 L1097.8,700.2 L1108.5,691.2"/>
<path d="M1119.2,682.2 L1129.9,673.2 L1140.7,664.2 L1151.4,655.2 L1162.1,646.2 L1172.8,637.2"/>
<path d="M1183.6,628.2 L1194.3,619.2 L1205.0,610.2"/>
<path d="M1215.7,601.2 L1226.5,592.2 L1237.2,583.2"/>
<path d="M1247.9,574.2 L1258.6,565.2"/>
<path d="M1269.3,556.2 L1280.1,547.2 L1290.8,538.2 L1301.5,529.2 L1312.2,520.2 L1323.0,511.2 L1333.7,502.2 L1344.4,493.2"/>
<path d="M1365.9,475.2 L1376.6,466.2"/>
<path d="M1085.3,728.9 L1096.0,719.9 L1106.8,710.9 L1117.5,701.9 L1128.2,692.9 L1138.9,683.9 L1149.7,674.9 L1160.4,665.9"/>
<path d="M1171.1,656.9 L1181.8,647.9 L1192.6,638.9 L1203.3,629.9 L1214.0,620.9 L1224.7,611.9 L1235.5,602.9 L1246.2,593.9 L1256.9,584.9 L1267.6,575.9 L1278.3,566.9"/>
<path d="M1289.1,557.9 L1299.8,548.9"/>
<path d="M1321.2,530.9 L1332.0,521.9 L1342.7,512.9"/>
<path d="M1364.1,494.9 L1374.9,485.9 L1385.6,476.9"/>
<path d="M1094.3,739.6 L1105.0,730.6 L1115.8,721.6 L1126.5,712.6"/>
<path d="M1137.2,703.6 L1147.9,694.6"/>
<path d="M1158.7,685.6 L1169.4,676.6 L1180.1,667.6 L1190.8,658.6 L1201.6,649.6 L1212.3,640.6"/>
<path d="M1223.0,631.6 L1233.7,622.6 L1244.4,613.6 L1255.2,604.6 L1265.9,595.6 L1276.6,586.6 L1287.3,577.6 L1298.1,568.6 L1308.8,559.6 L1319.5,550.6 L1330.2,541.6 L1341.0,532.6 L1351.7,523.6 L1362.4,514.6 L1373.1,505.6"/>
<path d="M1383.9,496.7 L1394.6,487.7"/>
<path d="M1103.3,750.3 L1114.0,741.3 L1124.8,732.4 L1135.5,723.4 L1146.2,714.4"/>
<path d="M1156.9,705.4 L1167.7,696.4"/>
<path d="M1178.4,687.4 L1189.1,678.4 L1199.8,669.4 L1210.5,660.4 L1221.3,651.4 L1232.0,642.4 L1242.7,633.4"/>
<path d="M1253.4,624.4 L1264.2,615.4 L1274.9,606.4"/>
<path d="M1285.6,597.4 L1296.3,588.4 L1307.1,579.4"/>
<path d="M1317.8,570.4 L1328.5,561.4 L1339.2,552.4 L1350.0,543.4 L1360.7,534.4 L1371.4,525.4"/>
<path d="M1382.1,516.4 L1392.9,507.4 L1403.6,498.4"/>
<path d="M1112.3,761.1 L1123.0,752.1 L1133.8,743.1 L1144.5,734.1 L1155.2,725.1 L1165.9,716.1 L1176.7,707.1 L1187.4,698.1 L1198.1,689.1 L1208.8,680.1 L1219.5,671.1"/>
<path d="M1251.7,644.1 L1262.4,635.1"/>
<path d="M1273.2,626.1 L1283.9,617.1 L1294.6,608.1 L1305.3,599.1 L1316.1,590.1 L1326.8,581.1 L1337.5,572.1 L1348.2,563.1 L1359.0,554.1 L1369.7,545.1"/>
<path d="M1380.4,536.1 L1391.1,527.1 L1401.9,518.1 L1412.6,509.1"/>
<path d="M1121.3,771.8 L1132.0,762.8 L1142.8,753.8 L1153.5,744.8 L1164.2,735.8"/>
<path d="M1174.9,726.8 L1185.6,717.8 L1196.4,708.8"/>
<path d="M1207.1,699.8 L1217.8,690.8"/>
<path d="M1228.5,681.8 L1239.3,672.8"/>
<path d="M1250.0,663.8 L1260.7,654.8"/>
<path d="M1303.6,618.8 L1314.3,609.8"/>
<path d="M1335.8,591.8 L1346.5,582.8 L1357.2,573.8 L1368.0,564.8"/>
<path d="M1378.7,555.8 L1389.4,546.8 L1400.1,537.8"/>
<path d="M1410.9,528.8 L1421.6,519.8"/>
<path d="M1130.3,782.5 L1141.0,773.5"/>
<path d="M1151.7,764.5 L1162.5,755.5"/>
<path d="M1173.2,746.5 L1183.9,737.5 L1194.6,728.5"/>
<path d="M1216.1,710.5 L1226.8,701.5 L1237.5,692.5 L1248.3,683.5 L1259.0,674.5 L1269.7,665.5 L1280.4,656.5 L1291.2,647.5 L1301.9,638.5 L1312.6,629.5 L1323.3,620.5 L1334.1,611.5"/>
<path d="M1344.8,602.5 L1355.5,593.5 L1366.2,584.5 L1377.0,575.5"/>
<path d="M1150.0,784.2 L1160.7,775.2 L1171.5,766.3 L1182.2,757.3 L1192.9,748.3 L1203.6,739.3 L1214.4,730.3 L1225.1,721.3 L1235.8,712.3"/>
<path d="M1246.5,703.3 L1257.3,694.3 L1268.0,685.3 L1278.7,676.3"/>
<path d="M1289.4,667.3 L1300.2,658.3 L1310.9,649.3"/>
<path d="M1321.6,640.3 L1332.3,631.3 L1343.1,622.3 L1353.8,613.3 L1364.5,604.3"/>
<path d="M1375.2,595.3 L1386.0,586.3 L1396.7,577.3 L1407.4,568.3 L1418.1,559.3 L1428.9,550.3 L1439.6,541.3"/>
<path d="M1148.3,804.0 L1159.0,795.0 L1169.7,786.0 L1180.5,777.0 L1191.2,768.0 L1201.9,759.0"/>
<path d="M1212.6,750.0 L1223.4,741.0 L1234.1,732.0 L1244.8,723.0 L1255.5,714.0 L1266.3,705.0"/>
<path d="M1277.0,696.0 L1287.7,687.0"/>
<path d="M1298.4,678.0 L1309.2,669.0 L1319.9,660.0 L1330.6,651.0"/>
<path d="M1341.3,642.0 L1352.1,633.0 L1362.8,624.0 L1373.5,615.0 L1384.2,606.0 L1395.0,597.0 L1405.7,588.0 L1416.4,579.0 L1427.1,570.0 L1437.9,561.0 L1448.6,552.0"/>
<path d="M1168.0,805.7 L1178.7,796.7 L1189.5,787.7"/>
<path d="M1200.2,778.7 L1210.9,769.7"/>
<path d="M1232.4,751.7 L1243.1,742.7 L1253.8,733.7"/>
<path d="M1275.3,715.7 L1286.0,706.7 L1296.7,697.7"/>
<path d="M1307.4,688.7 L1318.2,679.7 L1328.9,670.7 L1339.6,661.7 L1350.3,652.7 L1361.1,643.7 L1371.8,634.7 L1382.5,625.7 L1393.2,616.7 L1404.0,607.7"/>
<path d="M1436.1,580.7 L1446.9,571.7"/>
<path d="M1177.0,816.4 L1187.7,807.4"/>
<path d="M1198.5,798.4 L1209.2,789.4"/>
<path d="M1219.9,780.4 L1230.6,771.4 L1241.4,762.4 L1252.1,753.4 L1262.8,744.4 L1273.5,735.4 L1284.3,726.4 L1295.0,717.4 L1305.7,708.4 L1316.4,699.4 L1327.2,690.4"/>
<path d="M1337.9,681.4 L1348.6,672.4 L1359.3,663.4 L1370.1,654.4 L1380.8,645.4 L1391.5,636.4 L1402.2,627.4 L1413.0,618.4"/>
<path d="M1423.7,609.4 L1434.4,600.4 L1445.1,591.4"/>
<path d="M1455.9,582.4 L1466.6,573.4"/>
<path d="M1175.3,836.1 L1186.0,827.1 L1196.7,818.1 L1207.5,809.1 L1218.2,800.1 L1228.9,791.2 L1239.6,782.2 L1250.4,773.2 L1261.1,764.2 L1271.8,755.2"/>
<path d="M1282.5,746.2 L1293.3,737.2"/>
<path d="M1304.0,728.2 L1314.7,719.2 L1325.4,710.2 L1336.2,701.2 L1346.9,692.2 L1357.6,683.2 L1368.3,674.2 L1379.1,665.2 L1389.8,656.2 L1400.5,647.2 L1411.2,638.2 L1422.0,629.2 L1432.7,620.2 L1443.4,611.2 L1454.1,602.2 L1464.9,593.2 L1475.6,584.2"/>
<path d="M1200.0,301.3 L1209.9,311.2 L1219.8,321.1"/>
<path d="M1239.6,340.9 L1249.5,350.8 L1259.4,360.7 L1269.3,370.6 L1279.2,380.5"/>
<path d="M1289.1,390.4 L1299.0,400.3 L1308.9,410.2 L1318.8,420.1 L1328.7,430.0 L1338.6,439.9 L1348.5,449.8 L1358.4,459.7"/>
<path d="M1368.3,469.6 L1378.2,479.5 L1388.1,489.4"/>
<path d="M1407.9,509.2 L1417.8,519.1 L1427.7,529.0 L1437.6,538.9 L1447.5,548.8 L1457.4,558.7 L1467.3,568.6"/>
<path d="M1190.1,311.2 L1200.0,321.1 L1209.9,331.0 L1219.8,340.9 L1229.7,350.8 L1239.6,360.7 L1249.5,370.6 L1259.4,380.5 L1269.3,390.4 L1279.2,400.3 L1289.1,410.2 L1299.0,420.1 L1308.9,430.0 L1318.8,439.9"/>
<path d="M1338.6,459.7 L1348.5,469.6 L1358.4,479.5"/>
<path d="M1378.2,499.3 L1388.1,509.2 L1398.0,519.1 L1407.9,529.0 L1417.8,538.9 L1427.7,548.8 L1437.6,558.7"/>
<path d="M1180.2,321.1 L1190.1,331.0 L1200.0,340.9"/>
<path d="M1209.9,350.8 L1219.8,360.7"/>
<path d="M1229.7,370.6 L1239.6,380.5 L1249.5,390.4 L1259.4,400.3 L1269.3,410.2 L1279.2,420.1"/>
<path d="M1289.1,430.0 L1299.0,439.9 L1308.9,449.8 L1318.8,459.7 L1328.7,469.6 L1338.6,479.5 L1348.5,489.4"/>
<path d="M1358.4,499.3 L1368.3,509.2 L1378.2,519.1 L1388.1,529.0 L1398.0,538.9 L1407.9,548.8 L1417.8,558.7"/>
<path d="M1437.6,578.5 L1447.5,588.4 L1457.4,598.3"/>
<path d="M1170.3,331.0 L1180.2,340.9 L1190.1,350.8 L1200.0,360.7 L1209.9,370.6 L1219.8,380.5 L1229.7,390.4 L1239.6,400.3 L1249.5,410.2"/>
<path d="M1269.3,430.0 L1279.2,439.9 L1289.1,449.8 L1299.0,459.7 L1308.9,469.6 L1318.8,479.5 L1328.7,489.4 L1338.6,499.3 L1348.5,509.2 L1358.4,519.1"/>
<path d="M1368.3,529.0 L1378.2,538.9 L1388.1,548.8 L1398.0,558.7 L1407.9,568.6 L1417.8,578.5 L1427.7,588.4 L1437.6,598.3"/>
<path d="M1160.4,340.9 L1170.3,350.8 L1180.2,360.7 L1190.1,370.6 L1200.0,380.5 L1209.9,390.4 L1219.8,400.3"/>
<path d="M1229.7,410.2 L1239.6,420.1 L1249.5,430.0 L1259.4,439.9 L1269.3,449.8 L1279.2,459.7 L1289.1,469.6"/>
<path d="M1299.0,479.5 L1308.9,489.4"/>
<path d="M1318.8,499.3 L1328.7,509.2 L1338.6,519.1 L1348.5,529.0 L1358.4,538.9 L1368.3,548.8 L1378.2,558.7 L1388.1,568.6 L1398.0,578.5 L1407.9,588.4"/>
<path d="M1417.8,598.3 L1427.7,608.2 L1437.6,618.1"/>
<path d="M1160.4,360.7 L1170.3,370.6"/>
<path d="M1190.1,390.4 L1200.0,400.3 L1209.9,410.2 L1219.8,420.1 L1229.7,430.0 L1239.6,439.9"/>
<path d="M1249.5,449.8 L1259.4,459.7 L1269.3,469.6"/>
<path d="M1279.2,479.5 L1289.1,489.4 L1299.0,499.3 L1308.9,509.2 L1318.8,519.1"/>
<path d="M1328.7,529.0 L1338.6,538.9 L1348.5,548.8"/>
<path d="M1358.4,558.7 L1368.3,568.6"/>
<path d="M1378.2,578.5 L1388.1,588.4 L1398.0,598.3 L1407.9,608.2"/>
<path d="M1140.6,360.7 L1150.5,370.6"/>
<path d="M1170.3,390.4 L1180.2,400.3 L1190.1,410.2"/>
<path d="M1200.0,420.1 L1209.9,430.0 L1219.8,439.9 L1229.7,449.8"/>
<path d="M1239.6,459.7 L1249.5,469.6 L1259.4,479.5 L1269.3,489.4"/>
<path d="M1299.0,519.1 L1308.9,529.0 L1318.8,538.9"/>
<path d="M1338.6,558.7 L1348.5,568.6 L1358.4,578.5 L1368.3,588.4 L1378.2,598.3 L1388.1,608.2 L1398.0,618.1 L1407.9,628.0 L1417.8,637.9"/>
<path d="M1130.7,370.6 L1140.6,380.5"/>
<path d="M1150.5,390.4 L1160.4,400.3 L1170.3,410.2 L1180.2,420.1 L1190.1,430.0 L1200.0,439.9 L1209.9,449.8 L1219.8,459.7 L1229.7,469.6 L1239.6,479.5 L1249.5,489.4 L1259.4,499.3 L1269.3,509.2 L1279.2,519.1"/>
<path d="M1289.1,529.0 L1299.0,538.9 L1308.9,548.8"/>
<path d="M1318.8,558.7 L1328.7,568.6 L1338.6,578.5"/>
<path d="M1348.5,588.4 L1358.4,598.3 L1368.3,608.2 L1378.2,618.1"/>
<path d="M1398.0,637.9 L1407.9,647.8"/>
<path d="M1120.8,380.5 L1130.7,390.4 L1140.6,400.3 L1150.5,410.2 L1160.4,420.1 L1170.3,430.0"/>
<path d="M1180.2,439.9 L1190.1,449.8 L1200.0,459.7"/>
<path d="M1209.9,469.6 L1219.8,479.5 L1229.7,489.4 L1239.6,499.3 L1249.5,509.2 L1259.4,519.1 L1269.3,529.0 L1279.2,538.9 L1289.1,548.8 L1299.0,558.7 L1308.9,568.6 L1318.8,578.5 L1328.7,588.4 L1338.6,598.3 L1348.5,608.2"/>
<path d="M1358.4,618.1 L1368.3,628.0 L1378.2,637.9 L1388.1,647.8 L1398.0,657.7"/>
<path d="M1110.9,390.4 L1120.8,400.3 L1130.7,410.2 L1140.6,420.1 L1150.5,430.0 L1160.4,439.9 L1170.3,449.8 L1180.2,459.7 L1190.1,469.6 L1200.0,479.5 L1209.9,489.4"/>
<path d="M1219.8,499.3 L1229.7,509.2 L1239.6,519.1 L1249.5,529.0"/>
<path d="M1259.4,538.9 L1269.3,548.8 L1279.2,558.7 L1289.1,568.6 L1299.0,578.5 L1308.9,588.4 L1318.8,598.3 L1328.7,608.2 L1338.6,618.1 L1348.5,628.0 L1358.4,637.9 L1368.3,647.8 L1378.2,657.7 L1388.1,667.6"/>
<path d="M1101.0,400.3 L1110.9,410.2 L1120.8,420.1 L1130.7,430.0 L1140.6,439.9 L1150.5,449.8"/>
<path d="M1160.4,459.7 L1170.3,469.6 L1180.2,479.5 L1190.1,489.4"/>
<path d="M1209.9,509.2 L1219.8,519.1 L1229.7,529.0"/>
<path d="M1239.6,538.9 L1249.5,548.8 L1259.4,558.7 L1269.3,568.6 L1279.2,578.5 L1289.1,588.4 L1299.0,598.3 L1308.9,608.2 L1318.8,618.1 L1328.7,628.0"/>
<path d="M1338.6,637.9 L1348.5,647.8 L1358.4,657.7 L1368.3,667.6 L1378.2,677.5"/>
<path d="M1091.1,410.2 L1101.0,420.1"/>
<path d="M1110.9,430.0 L1120.8,439.9 L1130.7,449.8"/>
<path d="M1150.5,469.6 L1160.4,479.5"/>
<path d="M1170.3,489.4 L1180.2,499.3"/>
<path d="M1190.1,509.2 L1200.0,519.1 L1209.9,529.0 L1219.8,538.9 L1229.7,548.8 L1239.6,558.7 L1249.5,568.6 L1259.4,578.5"/>
<path d="M1269.3,588.4 L1279.2,598.3 L1289.1,608.2"/>
<path d="M1299.0,618.1 L1308.9,628.0 L1318.8,637.9 L1328.7,647.8"/>
<path d="M1348.5,667.6 L1358.4,677.5 L1368.3,687.4"/>
<path d="M1081.2,420.1 L1091.1,430.0 L1101.0,439.9 L1110.9,449.8 L1120.8,459.7 L1130.7,469.6 L1140.6,479.5 L1150.5,489.4 L1160.4,499.3"/>
<path d="M1170.3,509.2 L1180.2,519.1"/>
<path d="M1190.1,529.0 L1200.0,538.9 L1209.9,548.8 L1219.8,558.7"/>
<path d="M1229.7,568.6 L1239.6,578.5 L1249.5,588.4 L1259.4,598.3 L1269.3,608.2 L1279.2,618.1 L1289.1,628.0 L1299.0,637.9 L1308.9,647.8 L1318.8,657.7 L1328.7,667.6 L1338.6,677.5"/>
<path d="M1348.5,687.4 L1358.4,697.3"/>
<path d="M1071.3,430.0 L1081.2,439.9 L1091.1,449.8 L1101.0,459.7 L1110.9,469.6 L1120.8,479.5 L1130.7,489.4 L1140.6,499.3"/>
<path d="M1150.5,509.2 L1160.4,519.1 L1170.3,529.0"/>
<path d="M1180.2,538.9 L1190.1,548.8 L1200.0,558.7 L1209.9,568.6 L1219.8,578.5"/>
<path d="M1229.7,588.4 L1239.6,598.3 L1249.5,608.2 L1259.4,618.1"/>
<path d="M1279.2,637.9 L1289.1,647.8 L1299.0,657.7 L1308.9,667.6 L1318.8,677.5"/>
<path d="M1328.7,687.4 L1338.6,697.3 L1348.5,707.2"/>
<path d="M1071.3,449.8 L1081.2,459.7 L1091.1,469.6 L1101.0,479.5 L1110.9,489.4"/>
<path d="M1120.8,499.3 L1130.7,509.2 L1140.6,519.1 L1150.5,529.0 L1160.4,538.9 L1170.3,548.8 L1180.2,558.7 L1190.1,568.6 L1200.0,578.5"/>
<path d="M1209.9,588.4 L1219.8,598.3 L1229.7,608.2 L1239.6,618.1 L1249.5,628.0 L1259.4,637.9 L1269.3,647.8"/>
<path d="M1279.2,657.7 L1289.1,667.6 L1299.0,677.5 L1308.9,687.4 L1318.8,697.3 L1328.7,707.2 L1338.6,717.1"/>
<path d="M1051.5,449.8 L1061.4,459.7 L1071.3,469.6 L1081.2,479.5 L1091.1,489.4 L1101.0,499.3 L1110.9,509.2 L1120.8,519.1"/>
<path d="M1130.7,529.0 L1140.6,538.9 L1150.5,548.8 L1160.4,558.7 L1170.3,568.6"/>
<path d="M1180.2,578.5 L1190.1,588.4 L1200.0,598.3 L1209.9,608.2 L1219.8,618.1 L1229.7,628.0 L1239.6,637.9 L1249.5,647.8 L1259.4,657.7 L1269.3,667.6 L1279.2,677.5"/>
<path d="M1289.1,687.4 L1299.0,697.3 L1308.9,707.2 L1318.8,717.1 L1328.7,727.0"/>
<path d="M1041.6,459.7 L1051.5,469.6 L1061.4,479.5 L1071.3,489.4 L1081.2,499.3 L1091.1,509.2 L1101.0,519.1"/>
<path d="M1110.9,529.0 L1120.8,538.9 L1130.7,548.8 L1140.6,558.7 L1150.5,568.6 L1160.4,578.5 L1170.3,588.4 L1180.2,598.3 L1190.1,608.2 L1200.0,618.1"/>
<path d="M1209.9,628.0 L1219.8,637.9 L1229.7,647.8 L1239.6,657.7"/>
<path d="M1249.5,667.6 L1259.4,677.5"/>
<path d="M1269.3,687.4 L1279.2,697.3 L1289.1,707.2"/>
<path d="M1308.9,727.0 L1318.8,736.9"/>
<path d="M1031.7,469.6 L1041.6,479.5 L1051.5,489.4"/>
<path d="M1071.3,509.2 L1081.2,519.1 L1091.1,529.0 L1101.0,538.9 L1110.9,548.8 L1120.8,558.7"/>
<path d="M1130.7,568.6 L1140.6,578.5 L1150.5,588.4 L1160.4,598.3"/>
<path d="M1170.3,608.2 L1180.2,618.1 L1190.1,628.0 L1200.0,637.9 L1209.9,647.8 L1219.8,657.7"/>
<path d="M1229.7,667.6 L1239.6,677.5 L1249.5,687.4"/>
<path d="M1259.4,697.3 L1269.3,707.2 L1279.2,717.1 L1289.1,727.0 L1299.0,736.9 L1308.9,746.8"/>
<path d="M1031.7,489.4 L1041.6,499.3 L1051.5,509.2 L1061.4,519.1 L1071.3,529.0 L1081.2,538.9 L1091.1,548.8 L1101.0,558.7"/>
<path d="M1110.9,568.6 L1120.8,578.5 L1130.7,588.4 L1140.6,598.3 L1150.5,608.2 L1160.4,618.1 L1170.3,628.0 L1180.2,637.9 L1190.1,647.8 L1200.0,657.7 L1209.9,667.6 L1219.8,677.5 L1229.7,687.4 L1239.6,697.3 L1249.5,707.2"/>
<path d="M1269.3,727.0 L1279.2,736.9 L1289.1,746.8 L1299.0,756.7"/>
<path d="M1011.9,489.4 L1021.8,499.3 L1031.7,509.2 L1041.6,519.1 L1051.5,529.0 L1061.4,538.9"/>
<path d="M1071.3,548.8 L1081.2,558.7 L1091.1,568.6 L1101.0,578.5 L1110.9,588.4"/>
<path d="M1120.8,598.3 L1130.7,608.2 L1140.6,618.1 L1150.5,628.0 L1160.4,637.9"/>
<path d="M1170.3,647.8 L1180.2,657.7 L1190.1,667.6 L1200.0,677.5"/>
<path d="M1219.8,697.3 L1229.7,707.2 L1239.6,717.1"/>
<path d="M1269.3,746.8 L1279.2,756.7 L1289.1,766.6"/>
<path d="M1002.0,499.3 L1011.9,509.2 L1021.8,519.1 L1031.7,529.0 L1041.6,538.9 L1051.5,548.8"/>
<path d="M1061.4,558.7 L1071.3,568.6 L1081.2,578.5"/>
<path d="M1101.0,598.3 L1110.9,608.2 L1120.8,618.1 L1130.7,628.0"/>
<path d="M1140.6,637.9 L1150.5,647.8 L1160.4,657.7 L1170.3,667.6 L1180.2,677.5 L1190.1,687.4 L1200.0,697.3 L1209.9,707.2 L1219.8,717.1 L1229.7,727.0 L1239.6,736.9 L1249.5,746.8 L1259.4,756.7"/>
<path d="M1269.3,766.6 L1279.2,776.5"/>
<path d="M992.1,509.2 L1002.0,519.1 L1011.9,529.0 L1021.8,538.9 L1031.7,548.8"/>
<path d="M1051.5,568.6 L1061.4,578.5"/>
<path d="M1071.3,588.4 L1081.2,598.3 L1091.1,608.2 L1101.0,618.1 L1110.9,628.0 L1120.8,637.9 L1130.7,647.8 L1140.6,657.7 L1150.5,667.6 L1160.4,677.5"/>
<path d="M1170.3,687.4 L1180.2,697.3 L1190.1,707.2"/>
<path d="M1200.0,717.1 L1209.9,727.0 L1219.8,736.9 L1229.7,746.8 L1239.6,756.7"/>
<path d="M1249.5,766.6 L1259.4,776.5"/>
<path d="M982.2,519.1 L992.1,529.0 L1002.0,538.9"/>
<path d="M1011.9,548.8 L1021.8,558.7 L1031.7,568.6 L1041.6,578.5 L1051.5,588.4 L1061.4,598.3"/>
<path d="M1071.3,608.2 L1081.2,618.1"/>
<path d="M1091.1,628.0 L1101.0,637.9 L1110.9,647.8 L1120.8,657.7"/>
<path d="M1130.7,667.6 L1140.6,677.5 L1150.5,687.4 L1160.4,697.3 L1170.3,707.2 L1180.2,717.1"/>
<path d="M1190.1,727.0 L1200.0,736.9"/>
<path d="M1209.9,746.8 L1219.8,756.7"/>
<path d="M1229.7,766.6 L1239.6,776.5"/>
<path d="M972.3,529.0 L982.2,538.9 L992.1,548.8 L1002.0,558.7 L1011.9,568.6 L1021.8,578.5"/>
<path d="M1031.7,588.4 L1041.6,598.3 L1051.5,608.2 L1061.4,618.1"/>
<path d="M1081.2,637.9 L1091.1,647.8 L1101.0,657.7 L1110.9,667.6 L1120.8,677.5 L1130.7,687.4 L1140.6,697.3 L1150.5,707.2 L1160.4,717.1"/>
<path d="M1170.3,727.0 L1180.2,736.9 L1190.1,746.8 L1200.0,756.7 L1209.9,766.6 L1219.8,776.5 L1229.7,786.4 L1239.6,796.3 L1249.5,806.2"/>
<path d="M962.4,538.9 L972.3,548.8 L982.2,558.7 L992.1,568.6 L1002.0,578.5"/>
<path d="M1011.9,588.4 L1021.8,598.3 L1031.7,608.2 L1041.6,618.1 L1051.5,628.0"/>
<path d="M1081.2,657.7 L1091.1,667.6 L1101.0,677.5 L1110.9,687.4 L1120.8,697.3 L1130.7,707.2 L1140.6,717.1"/>
<path d="M1150.5,727.0 L1160.4,736.9 L1170.3,746.8 L1180.2,756.7 L1190.1,766.6 L1200.0,776.5 L1209.9,786.4 L1219.8,796.3"/>
<path d="M1229.7,806.2 L1239.6,816.1"/>
<path d="M952.5,548.8 L962.4,558.7 L972.3,568.6"/>
<path d="M982.2,578.5 L992.1,588.4 L1002.0,598.3 L1011.9,608.2 L1021.8,618.1 L1031.7,628.0 L1041.6,637.9 L1051.5,647.8 L1061.4,657.7 L1071.3,667.6 L1081.2,677.5"/>
<path d="M1091.1,687.4 L1101.0,697.3 L1110.9,707.2 L1120.8,717.1 L1130.7,727.0"/>
<path d="M1140.6,736.9 L1150.5,746.8 L1160.4,756.7"/>
<path d="M1170.3,766.6 L1180.2,776.5 L1190.1,786.4 L1200.0,796.3 L1209.9,806.2 L1219.8,816.1 L1229.7,826.0"/>
<path d="M952.5,568.6 L962.4,578.5 L972.3,588.4 L982.2,598.3 L992.1,608.2 L1002.0,618.1 L1011.9,628.0 L1021.8,637.9"/>
<path d="M1031.7,647.8 L1041.6,657.7 L1051.5,667.6 L1061.4,677.5 L1071.3,687.4 L1081.2,697.3"/>
<path d="M1091.1,707.2 L1101.0,717.1 L1110.9,727.0 L1120.8,736.9 L1130.7,746.8 L1140.6,756.7 L1150.5,766.6 L1160.4,776.5 L1170.3,786.4 L1180.2,796.3 L1190.1,806.2 L1200.0,816.1 L1209.9,826.0 L1219.8,835.9"/>
<path d="M932.7,568.6 L942.6,578.5 L952.5,588.4 L962.4,598.3 L972.3,608.2 L982.2,618.1"/>
<path d="M992.1,628.0 L1002.0,637.9 L1011.9,647.8"/>
<path d="M1021.8,657.7 L1031.7,667.6 L1041.6,677.5 L1051.5,687.4 L1061.4,697.3"/>
<path d="M1071.3,707.2 L1081.2,717.1"/>
<path d="M1091.1,727.0 L1101.0,736.9 L1110.9,746.8 L1120.8,756.7 L1130.7,766.6 L1140.6,776.5 L1150.5,786.4 L1160.4,796.3 L1170.3,806.2"/>
<path d="M1180.2,816.1 L1190.1,826.0 L1200.0,835.9 L1209.9,845.8"/>
</g>
<g fill="none" stroke="#b8b8bc" stroke-width="1.5" stroke-dasharray="1.5 1.3" clip-path="url(#cs)">
<path d="M932.3,546.6 L943.0,537.6 L953.8,528.6 L964.5,519.6 L975.2,510.6 L985.9,501.6"/>
<path d="M1007.4,483.6 L1018.1,474.6 L1028.8,465.6 L1039.6,456.6 L1050.3,447.6 L1061.0,438.6 L1071.7,429.6 L1082.5,420.6 L1093.2,411.6"/>
<path d="M1103.9,402.6 L1114.6,393.6 L1125.4,384.6 L1136.1,375.6 L1146.8,366.6 L1157.5,357.6"/>
<path d="M1168.3,348.6 L1179.0,339.6 L1189.7,330.6 L1200.4,321.6"/>
<path d="M1211.2,312.6 L1221.9,303.6 L1232.6,294.6"/>
<path d="M941.3,557.3 L952.0,548.3 L962.8,539.3 L973.5,530.3 L984.2,521.3 L994.9,512.3 L1005.7,503.3 L1016.4,494.3 L1027.1,485.3 L1037.8,476.3"/>
<path d="M1059.3,458.3 L1070.0,449.3 L1080.7,440.3 L1091.5,431.3 L1102.2,422.3 L1112.9,413.3 L1123.6,404.3 L1134.4,395.3 L1145.1,386.3 L1155.8,377.3 L1166.5,368.3 L1177.3,359.3 L1188.0,350.3 L1198.7,341.3 L1209.4,332.3 L1220.2,323.3 L1230.9,314.3"/>
<path d="M950.3,568.0 L961.0,559.0 L971.8,550.0 L982.5,541.0 L993.2,532.0 L1003.9,523.0 L1014.7,514.0 L1025.4,505.0 L1036.1,496.0 L1046.8,487.0"/>
<path d="M1057.6,478.0 L1068.3,469.0 L1079.0,460.0"/>
<path d="M1089.7,451.0 L1100.5,442.0 L1111.2,433.0"/>
<path d="M1121.9,424.0 L1132.6,415.0 L1143.4,406.0 L1154.1,397.0"/>
<path d="M1164.8,388.0 L1175.5,379.1"/>
<path d="M1186.3,370.1 L1197.0,361.1 L1207.7,352.1 L1218.4,343.1 L1229.2,334.1 L1239.9,325.1 L1250.6,316.1"/>
<path d="M959.3,578.8 L970.0,569.8"/>
<path d="M980.8,560.8 L991.5,551.8"/>
<path d="M1012.9,533.8 L1023.7,524.8 L1034.4,515.8"/>
<path d="M1055.8,497.8 L1066.6,488.8 L1077.3,479.8 L1088.0,470.8 L1098.7,461.8 L1109.5,452.8 L1120.2,443.8 L1130.9,434.8 L1141.6,425.8 L1152.4,416.8 L1163.1,407.8 L1173.8,398.8 L1184.5,389.8 L1195.3,380.8 L1206.0,371.8 L1216.7,362.8 L1227.4,353.8 L1238.2,344.8 L1248.9,335.8 L1259.6,326.8"/>
<path d="M968.3,589.5 L979.0,580.5"/>
<path d="M989.8,571.5 L1000.5,562.5 L1011.2,553.5"/>
<path d="M1021.9,544.5 L1032.7,535.5 L1043.4,526.5"/>
<path d="M1054.1,517.5 L1064.8,508.5 L1075.6,499.5 L1086.3,490.5 L1097.0,481.5 L1107.7,472.5 L1118.5,463.5"/>
<path d="M1139.9,445.5 L1150.6,436.5 L1161.4,427.5 L1172.1,418.5 L1182.8,409.5 L1193.5,400.5 L1204.3,391.5 L1215.0,382.5 L1225.7,373.5 L1236.4,364.5 L1247.2,355.5 L1257.9,346.5 L1268.6,337.5"/>
<path d="M977.3,600.2 L988.0,591.2"/>
<path d="M998.8,582.2 L1009.5,573.2 L1020.2,564.2 L1030.9,555.2 L1041.7,546.2 L1052.4,537.2 L1063.1,528.2"/>
<path d="M1073.8,519.2 L1084.6,510.2 L1095.3,501.2"/>
<path d="M1106.0,492.2 L1116.7,483.2 L1127.5,474.2 L1138.2,465.2 L1148.9,456.2 L1159.6,447.2"/>
<path d="M1170.4,438.2 L1181.1,429.2 L1191.8,420.2 L1202.5,411.2 L1213.3,402.2 L1224.0,393.2"/>
<path d="M1234.7,384.2 L1245.4,375.2"/>
<path d="M1256.2,366.2 L1266.9,357.2 L1277.6,348.2"/>
<path d="M997.0,601.9 L1007.8,592.9 L1018.5,583.9 L1029.2,574.9 L1039.9,565.9 L1050.7,556.9"/>
<path d="M1061.4,547.9 L1072.1,538.9 L1082.8,529.9 L1093.6,520.9 L1104.3,511.9 L1115.0,502.9 L1125.7,493.9 L1136.5,484.9 L1147.2,475.9"/>
<path d="M1168.6,457.9 L1179.4,448.9 L1190.1,439.9 L1200.8,430.9 L1211.5,421.9 L1222.3,413.0 L1233.0,404.0 L1243.7,395.0 L1254.4,386.0 L1265.2,377.0 L1275.9,368.0 L1286.6,359.0"/>
<path d="M995.3,621.7 L1006.0,612.7 L1016.8,603.7 L1027.5,594.7"/>
<path d="M1038.2,585.7 L1048.9,576.7 L1059.7,567.7 L1070.4,558.7"/>
<path d="M1081.1,549.7 L1091.8,540.7 L1102.6,531.7 L1113.3,522.7 L1124.0,513.7 L1134.7,504.7 L1145.5,495.7"/>
<path d="M1156.2,486.7 L1166.9,477.7"/>
<path d="M1177.6,468.7 L1188.4,459.7 L1199.1,450.7 L1209.8,441.7 L1220.5,432.7 L1231.3,423.7 L1242.0,414.7 L1252.7,405.7 L1263.4,396.7 L1274.2,387.7 L1284.9,378.7 L1295.6,369.7"/>
<path d="M1004.3,632.4 L1015.0,623.4"/>
<path d="M1025.8,614.4 L1036.5,605.4 L1047.2,596.4"/>
<path d="M1057.9,587.4 L1068.7,578.4 L1079.4,569.4 L1090.1,560.4 L1100.8,551.4"/>
<path d="M1111.6,542.4 L1122.3,533.4 L1133.0,524.4"/>
<path d="M1143.7,515.4 L1154.5,506.4 L1165.2,497.4 L1175.9,488.4 L1186.6,479.4 L1197.4,470.4 L1208.1,461.4"/>
<path d="M1261.7,416.4 L1272.4,407.4 L1283.2,398.4"/>
<path d="M1293.9,389.4 L1304.6,380.4"/>
<path d="M1013.3,643.1 L1024.0,634.1 L1034.8,625.1 L1045.5,616.1 L1056.2,607.1 L1066.9,598.1 L1077.7,589.1"/>
<path d="M1088.4,580.1 L1099.1,571.1"/>
<path d="M1109.8,562.1 L1120.6,553.1 L1131.3,544.1 L1142.0,535.1"/>
<path d="M1163.5,517.1 L1174.2,508.1 L1184.9,499.1 L1195.6,490.1 L1206.4,481.1 L1217.1,472.1 L1227.8,463.1 L1238.5,454.1 L1249.3,445.1 L1260.0,436.1 L1270.7,427.1 L1281.4,418.1 L1292.2,409.1 L1302.9,400.1 L1313.6,391.1"/>
<path d="M1022.3,653.8 L1033.0,644.8 L1043.8,635.8"/>
<path d="M1054.5,626.8 L1065.2,617.8 L1075.9,608.8 L1086.7,599.8 L1097.4,590.8 L1108.1,581.8 L1118.8,572.8 L1129.6,563.8 L1140.3,554.8 L1151.0,545.8"/>
<path d="M1161.7,536.8 L1172.5,527.8 L1183.2,518.8 L1193.9,509.8 L1204.6,500.8 L1215.4,491.8 L1226.1,482.8 L1236.8,473.8"/>
<path d="M1247.5,464.8 L1258.3,455.8"/>
<path d="M1279.7,437.9 L1290.4,428.9"/>
<path d="M1031.3,664.6 L1042.0,655.6"/>
<path d="M1063.5,637.6 L1074.2,628.6"/>
<path d="M1084.9,619.6 L1095.7,610.6 L1106.4,601.6 L1117.1,592.6 L1127.8,583.6 L1138.6,574.6 L1149.3,565.6"/>
<path d="M1160.0,556.6 L1170.7,547.6 L1181.5,538.6 L1192.2,529.6"/>
<path d="M1202.9,520.6 L1213.6,511.6 L1224.4,502.6"/>
<path d="M1235.1,493.6 L1245.8,484.6 L1256.5,475.6 L1267.3,466.6 L1278.0,457.6"/>
<path d="M1288.7,448.6 L1299.4,439.6 L1310.2,430.6 L1320.9,421.6 L1331.6,412.6"/>
<path d="M1040.3,675.3 L1051.0,666.3 L1061.8,657.3 L1072.5,648.3 L1083.2,639.3"/>
<path d="M1093.9,630.3 L1104.7,621.3 L1115.4,612.3 L1126.1,603.3 L1136.8,594.3"/>
<path d="M1147.6,585.3 L1158.3,576.3 L1169.0,567.3 L1179.7,558.3 L1190.5,549.3 L1201.2,540.3 L1211.9,531.3 L1222.6,522.3"/>
<path d="M1244.1,504.3 L1254.8,495.3 L1265.5,486.3 L1276.3,477.3 L1287.0,468.3 L1297.7,459.3"/>
<path d="M1308.4,450.3 L1319.2,441.3"/>
<path d="M1329.9,432.3 L1340.6,423.3"/>
<path d="M1049.3,686.0 L1060.0,677.0 L1070.8,668.0 L1081.5,659.0 L1092.2,650.0 L1102.9,641.0 L1113.7,632.0 L1124.4,623.0 L1135.1,614.0 L1145.8,605.0 L1156.6,596.0 L1167.3,587.0"/>
<path d="M1178.0,578.0 L1188.7,569.0 L1199.5,560.0"/>
<path d="M1210.2,551.0 L1220.9,542.0 L1231.6,533.0 L1242.4,524.0"/>
<path d="M1253.1,515.0 L1263.8,506.0 L1274.5,497.0 L1285.3,488.0 L1296.0,479.0 L1306.7,470.0 L1317.4,461.0 L1328.1,452.0 L1338.9,443.0 L1349.6,434.0"/>
<path d="M1058.3,696.7 L1069.0,687.7 L1079.8,678.7 L1090.5,669.7 L1101.2,660.7 L1111.9,651.7 L1122.7,642.7 L1133.4,633.7 L1144.1,624.7 L1154.8,615.7 L1165.6,606.7 L1176.3,597.7 L1187.0,588.7"/>
<path d="M1197.7,579.7 L1208.5,570.7"/>
<path d="M1219.2,561.7 L1229.9,552.7 L1240.6,543.7 L1251.4,534.7 L1262.1,525.7 L1272.8,516.7 L1283.5,507.7 L1294.2,498.7 L1305.0,489.7"/>
<path d="M1326.4,471.8 L1337.1,462.8 L1347.9,453.8 L1358.6,444.8"/>
<path d="M1067.3,707.5 L1078.0,698.5 L1088.8,689.5"/>
<path d="M1099.5,680.5 L1110.2,671.5 L1120.9,662.5 L1131.7,653.5 L1142.4,644.5 L1153.1,635.5 L1163.8,626.5 L1174.6,617.5 L1185.3,608.5"/>
<path d="M1196.0,599.5 L1206.7,590.5 L1217.5,581.5"/>
<path d="M1228.2,572.5 L1238.9,563.5 L1249.6,554.5"/>
<path d="M1260.4,545.5 L1271.1,536.5 L1281.8,527.5 L1292.5,518.5 L1303.2,509.5 L1314.0,500.5 L1324.7,491.5 L1335.4,482.5 L1346.1,473.5 L1356.9,464.5 L1367.6,455.5"/>
<path d="M1076.3,718.2 L1087.0,709.2 L1097.8,700.2 L1108.5,691.2"/>
<path d="M1119.2,682.2 L1129.9,673.2 L1140.7,664.2 L1151.4,655.2 L1162.1,646.2 L1172.8,637.2"/>
<path d="M1183.6,628.2 L1194.3,619.2 L1205.0,610.2"/>
<path d="M1215.7,601.2 L1226.5,592.2 L1237.2,583.2"/>
<path d="M1247.9,574.2 L1258.6,565.2"/>
<path d="M1269.3,556.2 L1280.1,547.2 L1290.8,538.2 L1301.5,529.2 L1312.2,520.2 L1323.0,511.2 L1333.7,502.2 L1344.4,493.2"/>
<path d="M1365.9,475.2 L1376.6,466.2"/>
<path d="M1085.3,728.9 L1096.0,719.9 L1106.8,710.9 L1117.5,701.9 L1128.2,692.9 L1138.9,683.9 L1149.7,674.9 L1160.4,665.9"/>
<path d="M1171.1,656.9 L1181.8,647.9 L1192.6,638.9 L1203.3,629.9 L1214.0,620.9 L1224.7,611.9 L1235.5,602.9 L1246.2,593.9 L1256.9,584.9 L1267.6,575.9 L1278.3,566.9"/>
<path d="M1289.1,557.9 L1299.8,548.9"/>
<path d="M1321.2,530.9 L1332.0,521.9 L1342.7,512.9"/>
<path d="M1364.1,494.9 L1374.9,485.9 L1385.6,476.9"/>
<path d="M1094.3,739.6 L1105.0,730.6 L1115.8,721.6 L1126.5,712.6"/>
<path d="M1137.2,703.6 L1147.9,694.6"/>
<path d="M1158.7,685.6 L1169.4,676.6 L1180.1,667.6 L1190.8,658.6 L1201.6,649.6 L1212.3,640.6"/>
<path d="M1223.0,631.6 L1233.7,622.6 L1244.4,613.6 L1255.2,604.6 L1265.9,595.6 L1276.6,586.6 L1287.3,577.6 L1298.1,568.6 L1308.8,559.6 L1319.5,550.6 L1330.2,541.6 L1341.0,532.6 L1351.7,523.6 L1362.4,514.6 L1373.1,505.6"/>
<path d="M1383.9,496.7 L1394.6,487.7"/>
<path d="M1103.3,750.3 L1114.0,741.3 L1124.8,732.4 L1135.5,723.4 L1146.2,714.4"/>
<path d="M1156.9,705.4 L1167.7,696.4"/>
<path d="M1178.4,687.4 L1189.1,678.4 L1199.8,669.4 L1210.5,660.4 L1221.3,651.4 L1232.0,642.4 L1242.7,633.4"/>
<path d="M1253.4,624.4 L1264.2,615.4 L1274.9,606.4"/>
<path d="M1285.6,597.4 L1296.3,588.4 L1307.1,579.4"/>
<path d="M1317.8,570.4 L1328.5,561.4 L1339.2,552.4 L1350.0,543.4 L1360.7,534.4 L1371.4,525.4"/>
<path d="M1382.1,516.4 L1392.9,507.4 L1403.6,498.4"/>
<path d="M1112.3,761.1 L1123.0,752.1 L1133.8,743.1 L1144.5,734.1 L1155.2,725.1 L1165.9,716.1 L1176.7,707.1 L1187.4,698.1 L1198.1,689.1 L1208.8,680.1 L1219.5,671.1"/>
<path d="M1251.7,644.1 L1262.4,635.1"/>
<path d="M1273.2,626.1 L1283.9,617.1 L1294.6,608.1 L1305.3,599.1 L1316.1,590.1 L1326.8,581.1 L1337.5,572.1 L1348.2,563.1 L1359.0,554.1 L1369.7,545.1"/>
<path d="M1380.4,536.1 L1391.1,527.1 L1401.9,518.1 L1412.6,509.1"/>
<path d="M1121.3,771.8 L1132.0,762.8 L1142.8,753.8 L1153.5,744.8 L1164.2,735.8"/>
<path d="M1174.9,726.8 L1185.6,717.8 L1196.4,708.8"/>
<path d="M1207.1,699.8 L1217.8,690.8"/>
<path d="M1228.5,681.8 L1239.3,672.8"/>
<path d="M1250.0,663.8 L1260.7,654.8"/>
<path d="M1303.6,618.8 L1314.3,609.8"/>
<path d="M1335.8,591.8 L1346.5,582.8 L1357.2,573.8 L1368.0,564.8"/>
<path d="M1378.7,555.8 L1389.4,546.8 L1400.1,537.8"/>
<path d="M1410.9,528.8 L1421.6,519.8"/>
<path d="M1130.3,782.5 L1141.0,773.5"/>
<path d="M1151.7,764.5 L1162.5,755.5"/>
<path d="M1173.2,746.5 L1183.9,737.5 L1194.6,728.5"/>
<path d="M1216.1,710.5 L1226.8,701.5 L1237.5,692.5 L1248.3,683.5 L1259.0,674.5 L1269.7,665.5 L1280.4,656.5 L1291.2,647.5 L1301.9,638.5 L1312.6,629.5 L1323.3,620.5 L1334.1,611.5"/>
<path d="M1344.8,602.5 L1355.5,593.5 L1366.2,584.5 L1377.0,575.5"/>
<path d="M1150.0,784.2 L1160.7,775.2 L1171.5,766.3 L1182.2,757.3 L1192.9,748.3 L1203.6,739.3 L1214.4,730.3 L1225.1,721.3 L1235.8,712.3"/>
<path d="M1246.5,703.3 L1257.3,694.3 L1268.0,685.3 L1278.7,676.3"/>
<path d="M1289.4,667.3 L1300.2,658.3 L1310.9,649.3"/>
<path d="M1321.6,640.3 L1332.3,631.3 L1343.1,622.3 L1353.8,613.3 L1364.5,604.3"/>
<path d="M1375.2,595.3 L1386.0,586.3 L1396.7,577.3 L1407.4,568.3 L1418.1,559.3 L1428.9,550.3 L1439.6,541.3"/>
<path d="M1148.3,804.0 L1159.0,795.0 L1169.7,786.0 L1180.5,777.0 L1191.2,768.0 L1201.9,759.0"/>
<path d="M1212.6,750.0 L1223.4,741.0 L1234.1,732.0 L1244.8,723.0 L1255.5,714.0 L1266.3,705.0"/>
<path d="M1277.0,696.0 L1287.7,687.0"/>
<path d="M1298.4,678.0 L1309.2,669.0 L1319.9,660.0 L1330.6,651.0"/>
<path d="M1341.3,642.0 L1352.1,633.0 L1362.8,624.0 L1373.5,615.0 L1384.2,606.0 L1395.0,597.0 L1405.7,588.0 L1416.4,579.0 L1427.1,570.0 L1437.9,561.0 L1448.6,552.0"/>
<path d="M1168.0,805.7 L1178.7,796.7 L1189.5,787.7"/>
<path d="M1200.2,778.7 L1210.9,769.7"/>
<path d="M1232.4,751.7 L1243.1,742.7 L1253.8,733.7"/>
<path d="M1275.3,715.7 L1286.0,706.7 L1296.7,697.7"/>
<path d="M1307.4,688.7 L1318.2,679.7 L1328.9,670.7 L1339.6,661.7 L1350.3,652.7 L1361.1,643.7 L1371.8,634.7 L1382.5,625.7 L1393.2,616.7 L1404.0,607.7"/>
<path d="M1436.1,580.7 L1446.9,571.7"/>
<path d="M1177.0,816.4 L1187.7,807.4"/>
<path d="M1198.5,798.4 L1209.2,789.4"/>
<path d="M1219.9,780.4 L1230.6,771.4 L1241.4,762.4 L1252.1,753.4 L1262.8,744.4 L1273.5,735.4 L1284.3,726.4 L1295.0,717.4 L1305.7,708.4 L1316.4,699.4 L1327.2,690.4"/>
<path d="M1337.9,681.4 L1348.6,672.4 L1359.3,663.4 L1370.1,654.4 L1380.8,645.4 L1391.5,636.4 L1402.2,627.4 L1413.0,618.4"/>
<path d="M1423.7,609.4 L1434.4,600.4 L1445.1,591.4"/>
<path d="M1455.9,582.4 L1466.6,573.4"/>
<path d="M1175.3,836.1 L1186.0,827.1 L1196.7,818.1 L1207.5,809.1 L1218.2,800.1 L1228.9,791.2 L1239.6,782.2 L1250.4,773.2 L1261.1,764.2 L1271.8,755.2"/>
<path d="M1282.5,746.2 L1293.3,737.2"/>
<path d="M1304.0,728.2 L1314.7,719.2 L1325.4,710.2 L1336.2,701.2 L1346.9,692.2 L1357.6,683.2 L1368.3,674.2 L1379.1,665.2 L1389.8,656.2 L1400.5,647.2 L1411.2,638.2 L1422.0,629.2 L1432.7,620.2 L1443.4,611.2 L1454.1,602.2 L1464.9,593.2 L1475.6,584.2"/>
<path d="M1200.0,301.3 L1209.9,311.2 L1219.8,321.1"/>
<path d="M1239.6,340.9 L1249.5,350.8 L1259.4,360.7 L1269.3,370.6 L1279.2,380.5"/>
<path d="M1289.1,390.4 L1299.0,400.3 L1308.9,410.2 L1318.8,420.1 L1328.7,430.0 L1338.6,439.9 L1348.5,449.8 L1358.4,459.7"/>
<path d="M1368.3,469.6 L1378.2,479.5 L1388.1,489.4"/>
<path d="M1407.9,509.2 L1417.8,519.1 L1427.7,529.0 L1437.6,538.9 L1447.5,548.8 L1457.4,558.7 L1467.3,568.6"/>
<path d="M1190.1,311.2 L1200.0,321.1 L1209.9,331.0 L1219.8,340.9 L1229.7,350.8 L1239.6,360.7 L1249.5,370.6 L1259.4,380.5 L1269.3,390.4 L1279.2,400.3 L1289.1,410.2 L1299.0,420.1 L1308.9,430.0 L1318.8,439.9"/>
<path d="M1338.6,459.7 L1348.5,469.6 L1358.4,479.5"/>
<path d="M1378.2,499.3 L1388.1,509.2 L1398.0,519.1 L1407.9,529.0 L1417.8,538.9 L1427.7,548.8 L1437.6,558.7"/>
<path d="M1180.2,321.1 L1190.1,331.0 L1200.0,340.9"/>
<path d="M1209.9,350.8 L1219.8,360.7"/>
<path d="M1229.7,370.6 L1239.6,380.5 L1249.5,390.4 L1259.4,400.3 L1269.3,410.2 L1279.2,420.1"/>
<path d="M1289.1,430.0 L1299.0,439.9 L1308.9,449.8 L1318.8,459.7 L1328.7,469.6 L1338.6,479.5 L1348.5,489.4"/>
<path d="M1358.4,499.3 L1368.3,509.2 L1378.2,519.1 L1388.1,529.0 L1398.0,538.9 L1407.9,548.8 L1417.8,558.7"/>
<path d="M1437.6,578.5 L1447.5,588.4 L1457.4,598.3"/>
<path d="M1170.3,331.0 L1180.2,340.9 L1190.1,350.8 L1200.0,360.7 L1209.9,370.6 L1219.8,380.5 L1229.7,390.4 L1239.6,400.3 L1249.5,410.2"/>
<path d="M1269.3,430.0 L1279.2,439.9 L1289.1,449.8 L1299.0,459.7 L1308.9,469.6 L1318.8,479.5 L1328.7,489.4 L1338.6,499.3 L1348.5,509.2 L1358.4,519.1"/>
<path d="M1368.3,529.0 L1378.2,538.9 L1388.1,548.8 L1398.0,558.7 L1407.9,568.6 L1417.8,578.5 L1427.7,588.4 L1437.6,598.3"/>
<path d="M1160.4,340.9 L1170.3,350.8 L1180.2,360.7 L1190.1,370.6 L1200.0,380.5 L1209.9,390.4 L1219.8,400.3"/>
<path d="M1229.7,410.2 L1239.6,420.1 L1249.5,430.0 L1259.4,439.9 L1269.3,449.8 L1279.2,459.7 L1289.1,469.6"/>
<path d="M1299.0,479.5 L1308.9,489.4"/>
<path d="M1318.8,499.3 L1328.7,509.2 L1338.6,519.1 L1348.5,529.0 L1358.4,538.9 L1368.3,548.8 L1378.2,558.7 L1388.1,568.6 L1398.0,578.5 L1407.9,588.4"/>
<path d="M1417.8,598.3 L1427.7,608.2 L1437.6,618.1"/>
<path d="M1160.4,360.7 L1170.3,370.6"/>
<path d="M1190.1,390.4 L1200.0,400.3 L1209.9,410.2 L1219.8,420.1 L1229.7,430.0 L1239.6,439.9"/>
<path d="M1249.5,449.8 L1259.4,459.7 L1269.3,469.6"/>
<path d="M1279.2,479.5 L1289.1,489.4 L1299.0,499.3 L1308.9,509.2 L1318.8,519.1"/>
<path d="M1328.7,529.0 L1338.6,538.9 L1348.5,548.8"/>
<path d="M1358.4,558.7 L1368.3,568.6"/>
<path d="M1378.2,578.5 L1388.1,588.4 L1398.0,598.3 L1407.9,608.2"/>
<path d="M1140.6,360.7 L1150.5,370.6"/>
<path d="M1170.3,390.4 L1180.2,400.3 L1190.1,410.2"/>
<path d="M1200.0,420.1 L1209.9,430.0 L1219.8,439.9 L1229.7,449.8"/>
<path d="M1239.6,459.7 L1249.5,469.6 L1259.4,479.5 L1269.3,489.4"/>
<path d="M1299.0,519.1 L1308.9,529.0 L1318.8,538.9"/>
<path d="M1338.6,558.7 L1348.5,568.6 L1358.4,578.5 L1368.3,588.4 L1378.2,598.3 L1388.1,608.2 L1398.0,618.1 L1407.9,628.0 L1417.8,637.9"/>
<path d="M1130.7,370.6 L1140.6,380.5"/>
<path d="M1150.5,390.4 L1160.4,400.3 L1170.3,410.2 L1180.2,420.1 L1190.1,430.0 L1200.0,439.9 L1209.9,449.8 L1219.8,459.7 L1229.7,469.6 L1239.6,479.5 L1249.5,489.4 L1259.4,499.3 L1269.3,509.2 L1279.2,519.1"/>
<path d="M1289.1,529.0 L1299.0,538.9 L1308.9,548.8"/>
<path d="M1318.8,558.7 L1328.7,568.6 L1338.6,578.5"/>
<path d="M1348.5,588.4 L1358.4,598.3 L1368.3,608.2 L1378.2,618.1"/>
<path d="M1398.0,637.9 L1407.9,647.8"/>
<path d="M1120.8,380.5 L1130.7,390.4 L1140.6,400.3 L1150.5,410.2 L1160.4,420.1 L1170.3,430.0"/>
<path d="M1180.2,439.9 L1190.1,449.8 L1200.0,459.7"/>
<path d="M1209.9,469.6 L1219.8,479.5 L1229.7,489.4 L1239.6,499.3 L1249.5,509.2 L1259.4,519.1 L1269.3,529.0 L1279.2,538.9 L1289.1,548.8 L1299.0,558.7 L1308.9,568.6 L1318.8,578.5 L1328.7,588.4 L1338.6,598.3 L1348.5,608.2"/>
<path d="M1358.4,618.1 L1368.3,628.0 L1378.2,637.9 L1388.1,647.8 L1398.0,657.7"/>
<path d="M1110.9,390.4 L1120.8,400.3 L1130.7,410.2 L1140.6,420.1 L1150.5,430.0 L1160.4,439.9 L1170.3,449.8 L1180.2,459.7 L1190.1,469.6 L1200.0,479.5 L1209.9,489.4"/>
<path d="M1219.8,499.3 L1229.7,509.2 L1239.6,519.1 L1249.5,529.0"/>
<path d="M1259.4,538.9 L1269.3,548.8 L1279.2,558.7 L1289.1,568.6 L1299.0,578.5 L1308.9,588.4 L1318.8,598.3 L1328.7,608.2 L1338.6,618.1 L1348.5,628.0 L1358.4,637.9 L1368.3,647.8 L1378.2,657.7 L1388.1,667.6"/>
<path d="M1101.0,400.3 L1110.9,410.2 L1120.8,420.1 L1130.7,430.0 L1140.6,439.9 L1150.5,449.8"/>
<path d="M1160.4,459.7 L1170.3,469.6 L1180.2,479.5 L1190.1,489.4"/>
<path d="M1209.9,509.2 L1219.8,519.1 L1229.7,529.0"/>
<path d="M1239.6,538.9 L1249.5,548.8 L1259.4,558.7 L1269.3,568.6 L1279.2,578.5 L1289.1,588.4 L1299.0,598.3 L1308.9,608.2 L1318.8,618.1 L1328.7,628.0"/>
<path d="M1338.6,637.9 L1348.5,647.8 L1358.4,657.7 L1368.3,667.6 L1378.2,677.5"/>
<path d="M1091.1,410.2 L1101.0,420.1"/>
<path d="M1110.9,430.0 L1120.8,439.9 L1130.7,449.8"/>
<path d="M1150.5,469.6 L1160.4,479.5"/>
<path d="M1170.3,489.4 L1180.2,499.3"/>
<path d="M1190.1,509.2 L1200.0,519.1 L1209.9,529.0 L1219.8,538.9 L1229.7,548.8 L1239.6,558.7 L1249.5,568.6 L1259.4,578.5"/>
<path d="M1269.3,588.4 L1279.2,598.3 L1289.1,608.2"/>
<path d="M1299.0,618.1 L1308.9,628.0 L1318.8,637.9 L1328.7,647.8"/>
<path d="M1348.5,667.6 L1358.4,677.5 L1368.3,687.4"/>
<path d="M1081.2,420.1 L1091.1,430.0 L1101.0,439.9 L1110.9,449.8 L1120.8,459.7 L1130.7,469.6 L1140.6,479.5 L1150.5,489.4 L1160.4,499.3"/>
<path d="M1170.3,509.2 L1180.2,519.1"/>
<path d="M1190.1,529.0 L1200.0,538.9 L1209.9,548.8 L1219.8,558.7"/>
<path d="M1229.7,568.6 L1239.6,578.5 L1249.5,588.4 L1259.4,598.3 L1269.3,608.2 L1279.2,618.1 L1289.1,628.0 L1299.0,637.9 L1308.9,647.8 L1318.8,657.7 L1328.7,667.6 L1338.6,677.5"/>
<path d="M1348.5,687.4 L1358.4,697.3"/>
<path d="M1071.3,430.0 L1081.2,439.9 L1091.1,449.8 L1101.0,459.7 L1110.9,469.6 L1120.8,479.5 L1130.7,489.4 L1140.6,499.3"/>
<path d="M1150.5,509.2 L1160.4,519.1 L1170.3,529.0"/>
<path d="M1180.2,538.9 L1190.1,548.8 L1200.0,558.7 L1209.9,568.6 L1219.8,578.5"/>
<path d="M1229.7,588.4 L1239.6,598.3 L1249.5,608.2 L1259.4,618.1"/>
<path d="M1279.2,637.9 L1289.1,647.8 L1299.0,657.7 L1308.9,667.6 L1318.8,677.5"/>
<path d="M1328.7,687.4 L1338.6,697.3 L1348.5,707.2"/>
<path d="M1071.3,449.8 L1081.2,459.7 L1091.1,469.6 L1101.0,479.5 L1110.9,489.4"/>
<path d="M1120.8,499.3 L1130.7,509.2 L1140.6,519.1 L1150.5,529.0 L1160.4,538.9 L1170.3,548.8 L1180.2,558.7 L1190.1,568.6 L1200.0,578.5"/>
<path d="M1209.9,588.4 L1219.8,598.3 L1229.7,608.2 L1239.6,618.1 L1249.5,628.0 L1259.4,637.9 L1269.3,647.8"/>
<path d="M1279.2,657.7 L1289.1,667.6 L1299.0,677.5 L1308.9,687.4 L1318.8,697.3 L1328.7,707.2 L1338.6,717.1"/>
<path d="M1051.5,449.8 L1061.4,459.7 L1071.3,469.6 L1081.2,479.5 L1091.1,489.4 L1101.0,499.3 L1110.9,509.2 L1120.8,519.1"/>
<path d="M1130.7,529.0 L1140.6,538.9 L1150.5,548.8 L1160.4,558.7 L1170.3,568.6"/>
<path d="M1180.2,578.5 L1190.1,588.4 L1200.0,598.3 L1209.9,608.2 L1219.8,618.1 L1229.7,628.0 L1239.6,637.9 L1249.5,647.8 L1259.4,657.7 L1269.3,667.6 L1279.2,677.5"/>
<path d="M1289.1,687.4 L1299.0,697.3 L1308.9,707.2 L1318.8,717.1 L1328.7,727.0"/>
<path d="M1041.6,459.7 L1051.5,469.6 L1061.4,479.5 L1071.3,489.4 L1081.2,499.3 L1091.1,509.2 L1101.0,519.1"/>
<path d="M1110.9,529.0 L1120.8,538.9 L1130.7,548.8 L1140.6,558.7 L1150.5,568.6 L1160.4,578.5 L1170.3,588.4 L1180.2,598.3 L1190.1,608.2 L1200.0,618.1"/>
<path d="M1209.9,628.0 L1219.8,637.9 L1229.7,647.8 L1239.6,657.7"/>
<path d="M1249.5,667.6 L1259.4,677.5"/>
<path d="M1269.3,687.4 L1279.2,697.3 L1289.1,707.2"/>
<path d="M1308.9,727.0 L1318.8,736.9"/>
<path d="M1031.7,469.6 L1041.6,479.5 L1051.5,489.4"/>
<path d="M1071.3,509.2 L1081.2,519.1 L1091.1,529.0 L1101.0,538.9 L1110.9,548.8 L1120.8,558.7"/>
<path d="M1130.7,568.6 L1140.6,578.5 L1150.5,588.4 L1160.4,598.3"/>
<path d="M1170.3,608.2 L1180.2,618.1 L1190.1,628.0 L1200.0,637.9 L1209.9,647.8 L1219.8,657.7"/>
<path d="M1229.7,667.6 L1239.6,677.5 L1249.5,687.4"/>
<path d="M1259.4,697.3 L1269.3,707.2 L1279.2,717.1 L1289.1,727.0 L1299.0,736.9 L1308.9,746.8"/>
<path d="M1031.7,489.4 L1041.6,499.3 L1051.5,509.2 L1061.4,519.1 L1071.3,529.0 L1081.2,538.9 L1091.1,548.8 L1101.0,558.7"/>
<path d="M1110.9,568.6 L1120.8,578.5 L1130.7,588.4 L1140.6,598.3 L1150.5,608.2 L1160.4,618.1 L1170.3,628.0 L1180.2,637.9 L1190.1,647.8 L1200.0,657.7 L1209.9,667.6 L1219.8,677.5 L1229.7,687.4 L1239.6,697.3 L1249.5,707.2"/>
<path d="M1269.3,727.0 L1279.2,736.9 L1289.1,746.8 L1299.0,756.7"/>
<path d="M1011.9,489.4 L1021.8,499.3 L1031.7,509.2 L1041.6,519.1 L1051.5,529.0 L1061.4,538.9"/>
<path d="M1071.3,548.8 L1081.2,558.7 L1091.1,568.6 L1101.0,578.5 L1110.9,588.4"/>
<path d="M1120.8,598.3 L1130.7,608.2 L1140.6,618.1 L1150.5,628.0 L1160.4,637.9"/>
<path d="M1170.3,647.8 L1180.2,657.7 L1190.1,667.6 L1200.0,677.5"/>
<path d="M1219.8,697.3 L1229.7,707.2 L1239.6,717.1"/>
<path d="M1269.3,746.8 L1279.2,756.7 L1289.1,766.6"/>
<path d="M1002.0,499.3 L1011.9,509.2 L1021.8,519.1 L1031.7,529.0 L1041.6,538.9 L1051.5,548.8"/>
<path d="M1061.4,558.7 L1071.3,568.6 L1081.2,578.5"/>
<path d="M1101.0,598.3 L1110.9,608.2 L1120.8,618.1 L1130.7,628.0"/>
<path d="M1140.6,637.9 L1150.5,647.8 L1160.4,657.7 L1170.3,667.6 L1180.2,677.5 L1190.1,687.4 L1200.0,697.3 L1209.9,707.2 L1219.8,717.1 L1229.7,727.0 L1239.6,736.9 L1249.5,746.8 L1259.4,756.7"/>
<path d="M1269.3,766.6 L1279.2,776.5"/>
<path d="M992.1,509.2 L1002.0,519.1 L1011.9,529.0 L1021.8,538.9 L1031.7,548.8"/>
<path d="M1051.5,568.6 L1061.4,578.5"/>
<path d="M1071.3,588.4 L1081.2,598.3 L1091.1,608.2 L1101.0,618.1 L1110.9,628.0 L1120.8,637.9 L1130.7,647.8 L1140.6,657.7 L1150.5,667.6 L1160.4,677.5"/>
<path d="M1170.3,687.4 L1180.2,697.3 L1190.1,707.2"/>
<path d="M1200.0,717.1 L1209.9,727.0 L1219.8,736.9 L1229.7,746.8 L1239.6,756.7"/>
<path d="M1249.5,766.6 L1259.4,776.5"/>
<path d="M982.2,519.1 L992.1,529.0 L1002.0,538.9"/>
<path d="M1011.9,548.8 L1021.8,558.7 L1031.7,568.6 L1041.6,578.5 L1051.5,588.4 L1061.4,598.3"/>
<path d="M1071.3,608.2 L1081.2,618.1"/>
<path d="M1091.1,628.0 L1101.0,637.9 L1110.9,647.8 L1120.8,657.7"/>
<path d="M1130.7,667.6 L1140.6,677.5 L1150.5,687.4 L1160.4,697.3 L1170.3,707.2 L1180.2,717.1"/>
<path d="M1190.1,727.0 L1200.0,736.9"/>
<path d="M1209.9,746.8 L1219.8,756.7"/>
<path d="M1229.7,766.6 L1239.6,776.5"/>
<path d="M972.3,529.0 L982.2,538.9 L992.1,548.8 L1002.0,558.7 L1011.9,568.6 L1021.8,578.5"/>
<path d="M1031.7,588.4 L1041.6,598.3 L1051.5,608.2 L1061.4,618.1"/>
<path d="M1081.2,637.9 L1091.1,647.8 L1101.0,657.7 L1110.9,667.6 L1120.8,677.5 L1130.7,687.4 L1140.6,697.3 L1150.5,707.2 L1160.4,717.1"/>
<path d="M1170.3,727.0 L1180.2,736.9 L1190.1,746.8 L1200.0,756.7 L1209.9,766.6 L1219.8,776.5 L1229.7,786.4 L1239.6,796.3 L1249.5,806.2"/>
<path d="M962.4,538.9 L972.3,548.8 L982.2,558.7 L992.1,568.6 L1002.0,578.5"/>
<path d="M1011.9,588.4 L1021.8,598.3 L1031.7,608.2 L1041.6,618.1 L1051.5,628.0"/>
<path d="M1081.2,657.7 L1091.1,667.6 L1101.0,677.5 L1110.9,687.4 L1120.8,697.3 L1130.7,707.2 L1140.6,717.1"/>
<path d="M1150.5,727.0 L1160.4,736.9 L1170.3,746.8 L1180.2,756.7 L1190.1,766.6 L1200.0,776.5 L1209.9,786.4 L1219.8,796.3"/>
<path d="M1229.7,806.2 L1239.6,816.1"/>
<path d="M952.5,548.8 L962.4,558.7 L972.3,568.6"/>
<path d="M982.2,578.5 L992.1,588.4 L1002.0,598.3 L1011.9,608.2 L1021.8,618.1 L1031.7,628.0 L1041.6,637.9 L1051.5,647.8 L1061.4,657.7 L1071.3,667.6 L1081.2,677.5"/>
<path d="M1091.1,687.4 L1101.0,697.3 L1110.9,707.2 L1120.8,717.1 L1130.7,727.0"/>
<path d="M1140.6,736.9 L1150.5,746.8 L1160.4,756.7"/>
<path d="M1170.3,766.6 L1180.2,776.5 L1190.1,786.4 L1200.0,796.3 L1209.9,806.2 L1219.8,816.1 L1229.7,826.0"/>
<path d="M952.5,568.6 L962.4,578.5 L972.3,588.4 L982.2,598.3 L992.1,608.2 L1002.0,618.1 L1011.9,628.0 L1021.8,637.9"/>
<path d="M1031.7,647.8 L1041.6,657.7 L1051.5,667.6 L1061.4,677.5 L1071.3,687.4 L1081.2,697.3"/>
<path d="M1091.1,707.2 L1101.0,717.1 L1110.9,727.0 L1120.8,736.9 L1130.7,746.8 L1140.6,756.7 L1150.5,766.6 L1160.4,776.5 L1170.3,786.4 L1180.2,796.3 L1190.1,806.2 L1200.0,816.1 L1209.9,826.0 L1219.8,835.9"/>
<path d="M932.7,568.6 L942.6,578.5 L952.5,588.4 L962.4,598.3 L972.3,608.2 L982.2,618.1"/>
<path d="M992.1,628.0 L1002.0,637.9 L1011.9,647.8"/>
<path d="M1021.8,657.7 L1031.7,667.6 L1041.6,677.5 L1051.5,687.4 L1061.4,697.3"/>
<path d="M1071.3,707.2 L1081.2,717.1"/>
<path d="M1091.1,727.0 L1101.0,736.9 L1110.9,746.8 L1120.8,756.7 L1130.7,766.6 L1140.6,776.5 L1150.5,786.4 L1160.4,796.3 L1170.3,806.2"/>
<path d="M1180.2,816.1 L1190.1,826.0 L1200.0,835.9 L1209.9,845.8"/>
</g>
<g fill="none" stroke-linejoin="round" stroke-linecap="round" stroke="#fae995" stroke-width="2.6" clip-path="url(#cr)">
<path d="M1078.8,659.0 L1086.9,655.2"/>
<path d="M1095.1,651.4 L1103.2,647.6"/>
<path d="M1111.4,643.8 L1119.5,640.0 L1127.7,636.2"/>
<path d="M1135.8,632.4 L1144.0,628.6"/>
<path d="M1152.2,624.8 L1160.3,621.0"/>
<path d="M1176.6,613.4 L1184.8,609.6 L1192.9,605.8"/>
<path d="M1209.3,598.2 L1217.4,594.4 L1225.6,590.6 L1233.7,586.8 L1241.9,583.0 L1250.0,579.2"/>
<path d="M1082.6,667.2 L1090.7,663.4"/>
<path d="M1115.2,652.0 L1123.3,648.2 L1131.5,644.4"/>
<path d="M1139.7,640.6 L1147.8,636.8 L1156.0,633.0 L1164.1,629.2 L1172.3,625.4"/>
<path d="M1196.8,614.0 L1204.9,610.2 L1213.1,606.3 L1221.2,602.5 L1229.4,598.7 L1237.5,594.9"/>
<path d="M1245.7,591.1 L1253.8,587.3 L1262.0,583.5"/>
<path d="M1094.5,671.6 L1102.7,667.8 L1110.8,664.0 L1119.0,660.1 L1127.1,656.3"/>
<path d="M1135.3,652.5 L1143.5,648.7"/>
<path d="M1151.6,644.9 L1159.8,641.1 L1167.9,637.3"/>
<path d="M1176.1,633.5 L1184.2,629.7"/>
<path d="M1192.4,625.9 L1200.6,622.1 L1208.7,618.3 L1216.9,614.5 L1225.0,610.7 L1233.2,606.9 L1241.3,603.1 L1249.5,599.3 L1257.7,595.5 L1265.8,591.7"/>
<path d="M1090.2,683.5 L1098.3,679.7 L1106.5,675.9 L1114.6,672.1 L1122.8,668.3"/>
<path d="M1130.9,664.5 L1139.1,660.7 L1147.3,656.9 L1155.4,653.1 L1163.6,649.3"/>
<path d="M1171.7,645.5 L1179.9,641.7 L1188.0,637.9"/>
<path d="M1196.2,634.1 L1204.4,630.3"/>
<path d="M1228.8,618.9 L1237.0,615.1"/>
<path d="M1253.3,607.4 L1261.5,603.6 L1269.6,599.8"/>
<path d="M1102.1,687.9 L1110.3,684.1 L1118.4,680.3 L1126.6,676.5 L1134.8,672.7 L1142.9,668.9"/>
<path d="M1151.1,665.1 L1159.2,661.2 L1167.4,657.4 L1175.5,653.6 L1183.7,649.8"/>
<path d="M1216.3,634.6 L1224.5,630.8 L1232.6,627.0"/>
<path d="M1248.9,619.4 L1257.1,615.6 L1265.3,611.8 L1273.4,608.0"/>
<path d="M1097.8,699.8 L1105.9,696.0 L1114.1,692.2 L1122.2,688.4 L1130.4,684.6 L1138.6,680.8"/>
<path d="M1146.7,677.0 L1154.9,673.2 L1163.0,669.4 L1171.2,665.6 L1179.3,661.8 L1187.5,658.0 L1195.7,654.2"/>
<path d="M1203.8,650.4 L1212.0,646.6"/>
<path d="M1244.6,631.4 L1252.7,627.6"/>
<path d="M1109.7,704.2 L1117.9,700.4"/>
<path d="M1126.0,696.6 L1134.2,692.8 L1142.4,689.0"/>
<path d="M1158.7,681.4 L1166.8,677.6 L1175.0,673.8"/>
<path d="M1183.1,670.0 L1191.3,666.2 L1199.5,662.3 L1207.6,658.5 L1215.8,654.7"/>
<path d="M1232.1,647.1 L1240.2,643.3"/>
<path d="M1248.4,639.5 L1256.6,635.7"/>
<path d="M1272.9,628.1 L1281.0,624.3"/>
<path d="M1105.4,716.1 L1113.5,712.3"/>
<path d="M1121.7,708.5 L1129.8,704.7"/>
<path d="M1138.0,700.9 L1146.2,697.1 L1154.3,693.3 L1162.5,689.5 L1170.6,685.7"/>
<path d="M1178.8,681.9 L1186.9,678.1"/>
<path d="M1195.1,674.3 L1203.3,670.5 L1211.4,666.7 L1219.6,662.9 L1227.7,659.1"/>
<path d="M1235.9,655.3 L1244.0,651.5 L1252.2,647.7 L1260.4,643.9 L1268.5,640.1 L1276.7,636.3 L1284.8,632.5"/>
<path d="M1117.3,720.5 L1125.5,716.7 L1133.7,712.9"/>
<path d="M1166.3,697.7 L1174.4,693.9 L1182.6,690.1 L1190.7,686.3 L1198.9,682.5 L1207.1,678.7 L1215.2,674.9 L1223.4,671.1"/>
<path d="M1256.0,655.8 L1264.2,652.0 L1272.3,648.2 L1280.5,644.4 L1288.6,640.6"/>
<path d="M1113.0,732.5 L1121.1,728.7 L1129.3,724.9"/>
<path d="M1137.5,721.0 L1145.6,717.2 L1153.8,713.4 L1161.9,709.6 L1170.1,705.8 L1178.2,702.0"/>
<path d="M1186.4,698.2 L1194.6,694.4 L1202.7,690.6 L1210.9,686.8 L1219.0,683.0 L1227.2,679.2 L1235.3,675.4 L1243.5,671.6 L1251.6,667.8"/>
<path d="M1276.1,656.4 L1284.3,652.6 L1292.4,648.8"/>
<path d="M1124.9,736.8 L1133.1,733.0 L1141.3,729.2 L1149.4,725.4 L1157.6,721.6 L1165.7,717.8"/>
<path d="M1182.0,710.2 L1190.2,706.4 L1198.4,702.6 L1206.5,698.8 L1214.7,695.0 L1222.8,691.2 L1231.0,687.4 L1239.1,683.6"/>
<path d="M1271.8,668.3 L1279.9,664.5"/>
<path d="M1288.1,660.7 L1296.2,656.9"/>
<path d="M1128.7,745.0 L1136.9,741.2 L1145.1,737.4 L1153.2,733.6 L1161.4,729.8 L1169.5,726.0 L1177.7,722.1 L1185.8,718.3 L1194.0,714.5 L1202.2,710.7 L1210.3,706.9"/>
<path d="M1218.5,703.1 L1226.6,699.3"/>
<path d="M1242.9,691.7 L1251.1,687.9"/>
<path d="M1259.3,684.1 L1267.4,680.3 L1275.6,676.5 L1283.7,672.7 L1291.9,668.9 L1300.0,665.1"/>
<path d="M1124.4,756.9 L1132.6,753.1 L1140.7,749.3"/>
<path d="M1148.9,745.5 L1157.0,741.7"/>
<path d="M1173.3,734.1 L1181.5,730.3 L1189.6,726.5 L1197.8,722.7 L1206.0,718.9 L1214.1,715.1 L1222.3,711.3 L1230.4,707.5 L1238.6,703.7 L1246.7,699.9 L1254.9,696.1 L1263.1,692.3 L1271.2,688.5 L1279.4,684.7 L1287.5,680.9 L1295.7,677.1 L1303.8,673.3"/>
<path d="M1128.2,765.1 L1136.4,761.3"/>
<path d="M1144.5,757.5 L1152.7,753.7 L1160.8,749.9 L1169.0,746.1"/>
<path d="M1185.3,738.5 L1193.5,734.7"/>
<path d="M1217.9,723.2 L1226.1,719.4 L1234.2,715.6 L1242.4,711.8"/>
<path d="M1250.5,708.0 L1258.7,704.2 L1266.9,700.4"/>
<path d="M1275.0,696.6 L1283.2,692.8 L1291.3,689.0"/>
<path d="M1299.5,685.2 L1307.6,681.4"/>
<path d="M1132.0,773.2 L1140.2,769.4 L1148.3,765.6 L1156.5,761.8 L1164.6,758.0"/>
<path d="M1172.8,754.2 L1180.9,750.4 L1189.1,746.6 L1197.3,742.8"/>
<path d="M1205.4,739.0 L1213.6,735.2 L1221.7,731.4"/>
<path d="M1229.9,727.6 L1238.0,723.8 L1246.2,720.0"/>
<path d="M1254.4,716.2 L1262.5,712.4 L1270.7,708.6 L1278.8,704.8"/>
<path d="M1287.0,701.0 L1295.1,697.2 L1303.3,693.4 L1311.5,689.6"/>
<path d="M1160.3,770.0 L1168.4,766.2"/>
<path d="M1184.7,758.6 L1192.9,754.8 L1201.1,751.0 L1209.2,747.2"/>
<path d="M1225.5,739.6 L1233.7,735.8 L1241.8,732.0 L1250.0,728.2"/>
<path d="M1266.3,720.5 L1274.5,716.7 L1282.6,712.9"/>
<path d="M1290.8,709.1 L1298.9,705.3 L1307.1,701.5 L1315.3,697.7"/>
<path d="M1147.8,785.8 L1155.9,782.0"/>
<path d="M1164.1,778.1 L1172.2,774.3 L1180.4,770.5 L1188.5,766.7 L1196.7,762.9 L1204.9,759.1"/>
<path d="M1221.2,751.5 L1229.3,747.7"/>
<path d="M1270.1,728.7 L1278.3,724.9 L1286.4,721.1 L1294.6,717.3"/>
<path d="M1302.7,713.5 L1310.9,709.7"/>
<path d="M1143.4,797.7 L1151.6,793.9"/>
<path d="M1176.0,782.5 L1184.2,778.7 L1192.4,774.9"/>
<path d="M1200.5,771.1 L1208.7,767.3 L1216.8,763.5"/>
<path d="M1225.0,759.7 L1233.1,755.9 L1241.3,752.1 L1249.5,748.3 L1257.6,744.5 L1265.8,740.7 L1273.9,736.9 L1282.1,733.1 L1290.2,729.3 L1298.4,725.4 L1306.5,721.6 L1314.7,717.8 L1322.9,714.0"/>
<path d="M1147.2,805.9 L1155.4,802.1 L1163.5,798.3"/>
<path d="M1188.0,786.9 L1196.2,783.0"/>
<path d="M1220.6,771.6 L1228.8,767.8 L1236.9,764.0 L1245.1,760.2"/>
<path d="M1269.6,748.8 L1277.7,745.0"/>
<path d="M1285.9,741.2 L1294.0,737.4"/>
<path d="M1302.2,733.6 L1310.4,729.8 L1318.5,726.0 L1326.7,722.2"/>
<path d="M1159.2,810.2 L1167.3,806.4 L1175.5,802.6 L1183.6,798.8"/>
<path d="M1191.8,795.0 L1200.0,791.2 L1208.1,787.4 L1216.3,783.6"/>
<path d="M1224.4,779.8 L1232.6,776.0"/>
<path d="M1257.1,764.6 L1265.2,760.8"/>
<path d="M1281.5,753.2 L1289.7,749.4"/>
<path d="M1297.8,745.6 L1306.0,741.8 L1314.2,738.0 L1322.3,734.2 L1330.5,730.3"/>
<path d="M1154.8,822.2 L1163.0,818.4 L1171.1,814.6 L1179.3,810.8 L1187.5,807.0 L1195.6,803.2"/>
<path d="M1203.8,799.4 L1211.9,795.6 L1220.1,791.8"/>
<path d="M1228.2,788.0 L1236.4,784.1 L1244.5,780.3 L1252.7,776.5 L1260.9,772.7 L1269.0,768.9"/>
<path d="M1277.2,765.1 L1285.3,761.3 L1293.5,757.5 L1301.6,753.7 L1309.8,749.9 L1318.0,746.1 L1326.1,742.3 L1334.3,738.5"/>
<path d="M1158.6,830.3 L1166.8,826.5 L1174.9,822.7"/>
<path d="M1199.4,811.3 L1207.6,807.5"/>
<path d="M1215.7,803.7 L1223.9,799.9 L1232.0,796.1 L1240.2,792.3 L1248.4,788.5 L1256.5,784.7 L1264.7,780.9"/>
<path d="M1272.8,777.1 L1281.0,773.3 L1289.1,769.5 L1297.3,765.7 L1305.4,761.9 L1313.6,758.1"/>
<path d="M1321.8,754.3 L1329.9,750.5"/>
<path d="M1258.6,595.1 L1262.4,603.2"/>
<path d="M1266.2,611.4 L1270.0,619.5 L1273.8,627.7 L1277.6,635.8 L1281.4,644.0 L1285.2,652.2 L1289.0,660.3 L1292.8,668.5 L1296.6,676.6 L1300.4,684.8"/>
<path d="M1311.8,709.3 L1315.6,717.4 L1319.4,725.6 L1323.2,733.7"/>
<path d="M1242.8,582.6 L1246.6,590.7 L1250.4,598.9 L1254.2,607.0"/>
<path d="M1258.0,615.2 L1261.8,623.3 L1265.6,631.5 L1269.4,639.7"/>
<path d="M1273.2,647.8 L1277.0,656.0"/>
<path d="M1280.8,664.1 L1284.6,672.3 L1288.4,680.4"/>
<path d="M1292.2,688.6 L1296.0,696.8 L1299.8,704.9 L1303.7,713.1 L1307.5,721.2"/>
<path d="M1315.1,737.5 L1318.9,745.7"/>
<path d="M1322.7,753.8 L1326.5,762.0"/>
<path d="M1238.4,594.5 L1242.2,602.7 L1246.0,610.8"/>
<path d="M1249.9,619.0 L1253.7,627.1 L1257.5,635.3 L1261.3,643.5 L1265.1,651.6"/>
<path d="M1268.9,659.8 L1272.7,667.9 L1276.5,676.1"/>
<path d="M1284.1,692.4 L1287.9,700.6 L1291.7,708.7 L1295.5,716.9"/>
<path d="M1299.3,725.0 L1303.1,733.2 L1306.9,741.3 L1310.7,749.5"/>
<path d="M1314.5,757.7 L1318.3,765.8"/>
<path d="M1226.5,590.2 L1230.3,598.3"/>
<path d="M1234.1,606.5 L1237.9,614.6 L1241.7,622.8 L1245.5,630.9"/>
<path d="M1249.3,639.1 L1253.1,647.3 L1256.9,655.4 L1260.7,663.6 L1264.5,671.7 L1268.3,679.9 L1272.1,688.0"/>
<path d="M1283.5,712.5 L1287.3,720.7"/>
<path d="M1291.1,728.8 L1294.9,737.0"/>
<path d="M1302.6,753.3 L1306.4,761.5"/>
<path d="M1218.3,594.0 L1222.1,602.1 L1225.9,610.3 L1229.7,618.4 L1233.5,626.6 L1237.3,634.8 L1241.1,642.9 L1244.9,651.1 L1248.8,659.2 L1252.6,667.4"/>
<path d="M1256.4,675.5 L1260.2,683.7 L1264.0,691.8 L1267.8,700.0 L1271.6,708.2"/>
<path d="M1279.2,724.5 L1283.0,732.6"/>
<path d="M1286.8,740.8 L1290.6,748.9 L1294.4,757.1"/>
<path d="M1298.2,765.3 L1302.0,773.4"/>
<path d="M1210.2,597.8 L1214.0,605.9"/>
<path d="M1217.8,614.1 L1221.6,622.2 L1225.4,630.4 L1229.2,638.6 L1233.0,646.7"/>
<path d="M1244.4,671.2 L1248.2,679.3 L1252.0,687.5"/>
<path d="M1255.8,695.7 L1259.6,703.8 L1263.4,712.0 L1267.2,720.1"/>
<path d="M1278.6,744.6 L1282.4,752.7"/>
<path d="M1202.0,601.6 L1205.8,609.7 L1209.6,617.9 L1213.4,626.0 L1217.2,634.2 L1221.0,642.4 L1224.8,650.5 L1228.6,658.7 L1232.4,666.8"/>
<path d="M1240.0,683.1 L1243.8,691.3"/>
<path d="M1247.7,699.5 L1251.5,707.6 L1255.3,715.8 L1259.1,723.9"/>
<path d="M1270.5,748.4 L1274.3,756.6 L1278.1,764.7 L1281.9,772.9 L1285.7,781.0"/>
<path d="M1193.9,605.4 L1197.7,613.5"/>
<path d="M1205.3,629.8 L1209.1,638.0 L1212.9,646.2 L1216.7,654.3 L1220.5,662.5"/>
<path d="M1224.3,670.6 L1228.1,678.8 L1231.9,686.9 L1235.7,695.1 L1239.5,703.3 L1243.3,711.4"/>
<path d="M1254.7,735.9 L1258.5,744.0 L1262.3,752.2 L1266.1,760.4 L1269.9,768.5 L1273.7,776.7 L1277.5,784.8"/>
<path d="M1185.7,609.2 L1189.5,617.3 L1193.3,625.5"/>
<path d="M1197.1,633.7 L1200.9,641.8"/>
<path d="M1204.7,650.0 L1208.5,658.1 L1212.3,666.3 L1216.1,674.4"/>
<path d="M1223.7,690.7 L1227.5,698.9 L1231.3,707.1"/>
<path d="M1238.9,723.4 L1242.7,731.5 L1246.6,739.7 L1250.4,747.8"/>
<path d="M1254.2,756.0 L1258.0,764.2"/>
<path d="M1261.8,772.3 L1265.6,780.5 L1269.4,788.6"/>
<path d="M1177.5,613.0 L1181.3,621.1 L1185.1,629.3 L1189.0,637.5 L1192.8,645.6"/>
<path d="M1200.4,661.9 L1204.2,670.1 L1208.0,678.2 L1211.8,686.4"/>
<path d="M1215.6,694.6 L1219.4,702.7 L1223.2,710.9 L1227.0,719.0"/>
<path d="M1230.8,727.2 L1234.6,735.3 L1238.4,743.5"/>
<path d="M1246.0,759.8 L1249.8,768.0 L1253.6,776.1 L1257.4,784.3"/>
<path d="M1169.4,616.8 L1173.2,624.9 L1177.0,633.1 L1180.8,641.3"/>
<path d="M1184.6,649.4 L1188.4,657.6 L1192.2,665.7 L1196.0,673.9"/>
<path d="M1203.6,690.2 L1207.4,698.4"/>
<path d="M1211.2,706.5 L1215.0,714.7 L1218.8,722.8"/>
<path d="M1226.4,739.1 L1230.2,747.3 L1234.0,755.5 L1237.8,763.6"/>
<path d="M1241.7,771.8 L1245.5,779.9"/>
<path d="M1249.3,788.1 L1253.1,796.2"/>
<path d="M1172.6,645.1 L1176.4,653.2 L1180.2,661.4 L1184.0,669.5 L1187.9,677.7 L1191.7,685.8 L1195.5,694.0 L1199.3,702.2"/>
<path d="M1203.1,710.3 L1206.9,718.5 L1210.7,726.6"/>
<path d="M1214.5,734.8 L1218.3,742.9 L1222.1,751.1 L1225.9,759.3 L1229.7,767.4"/>
<path d="M1241.1,791.9 L1244.9,800.0"/>
<path d="M1153.1,624.4 L1156.9,632.6"/>
<path d="M1160.7,640.7 L1164.5,648.9"/>
<path d="M1168.3,657.0 L1172.1,665.2 L1175.9,673.3 L1179.7,681.5 L1183.5,689.6"/>
<path d="M1187.3,697.8 L1191.1,706.0 L1194.9,714.1 L1198.7,722.3"/>
<path d="M1202.5,730.4 L1206.3,738.6 L1210.1,746.7"/>
<path d="M1213.9,754.9 L1217.7,763.1 L1221.5,771.2 L1225.3,779.4"/>
<path d="M1144.9,628.2 L1148.7,636.4"/>
<path d="M1152.5,644.5 L1156.3,652.7 L1160.1,660.8 L1163.9,669.0"/>
<path d="M1167.7,677.1 L1171.5,685.3 L1175.3,693.5"/>
<path d="M1179.1,701.6 L1182.9,709.8 L1186.8,717.9"/>
<path d="M1194.4,734.2 L1198.2,742.4 L1202.0,750.5 L1205.8,758.7 L1209.6,766.9"/>
<path d="M1217.2,783.2 L1221.0,791.3 L1224.8,799.5 L1228.6,807.6"/>
<path d="M1136.8,632.0 L1140.6,640.2"/>
<path d="M1144.4,648.3 L1148.2,656.5 L1152.0,664.6 L1155.8,672.8"/>
<path d="M1159.6,680.9 L1163.4,689.1 L1167.2,697.3 L1171.0,705.4 L1174.8,713.6 L1178.6,721.7 L1182.4,729.9 L1186.2,738.0 L1190.0,746.2 L1193.8,754.4"/>
<path d="M1201.4,770.7 L1205.2,778.8"/>
<path d="M1216.6,803.3 L1220.4,811.5"/>
<path d="M1128.6,635.8 L1132.4,644.0 L1136.2,652.1 L1140.0,660.3 L1143.8,668.4"/>
<path d="M1155.2,692.9 L1159.0,701.1 L1162.8,709.2 L1166.6,717.4"/>
<path d="M1170.4,725.5 L1174.2,733.7 L1178.0,741.8 L1181.8,750.0 L1185.7,758.2 L1189.5,766.3 L1193.3,774.5"/>
<path d="M1197.1,782.6 L1200.9,790.8"/>
<path d="M1204.7,798.9 L1208.5,807.1 L1212.3,815.3"/>
<path d="M1120.4,639.6 L1124.2,647.8"/>
<path d="M1139.5,680.4 L1143.3,688.5 L1147.1,696.7 L1150.9,704.9 L1154.7,713.0 L1158.5,721.2 L1162.3,729.3"/>
<path d="M1166.1,737.5 L1169.9,745.6 L1173.7,753.8 L1177.5,762.0"/>
<path d="M1181.3,770.1 L1185.1,778.3 L1188.9,786.4 L1192.7,794.6 L1196.5,802.7"/>
<path d="M1119.9,659.7 L1123.7,667.9 L1127.5,676.0 L1131.3,684.2 L1135.1,692.4 L1138.9,700.5 L1142.7,708.7"/>
<path d="M1146.5,716.8 L1150.3,725.0 L1154.1,733.1"/>
<path d="M1157.9,741.3 L1161.7,749.5 L1165.5,757.6"/>
<path d="M1169.3,765.8 L1173.1,773.9"/>
<path d="M1184.6,798.4 L1188.4,806.5 L1192.2,814.7"/>
<path d="M1107.9,655.4 L1111.7,663.5 L1115.5,671.7"/>
<path d="M1119.3,679.8 L1123.1,688.0"/>
<path d="M1127.0,696.2 L1130.8,704.3 L1134.6,712.5"/>
<path d="M1142.2,728.8 L1146.0,736.9 L1149.8,745.1 L1153.6,753.3"/>
<path d="M1161.2,769.6 L1165.0,777.7 L1168.8,785.9"/>
<path d="M1172.6,794.0 L1176.4,802.2 L1180.2,810.4 L1184.0,818.5 L1187.8,826.7"/>
<path d="M1096.0,651.0 L1099.8,659.2 L1103.6,667.3 L1107.4,675.5 L1111.2,683.6 L1115.0,691.8"/>
<path d="M1118.8,700.0 L1122.6,708.1"/>
<path d="M1130.2,724.4 L1134.0,732.6 L1137.8,740.7 L1141.6,748.9 L1145.4,757.1 L1149.2,765.2 L1153.0,773.4"/>
<path d="M1160.6,789.7 L1164.4,797.8 L1168.2,806.0 L1172.0,814.2"/>
<path d="M1175.8,822.3 L1179.7,830.5"/>
<path d="M1087.8,654.8 L1091.6,663.0 L1095.4,671.1"/>
<path d="M1103.0,687.5 L1106.8,695.6 L1110.6,703.8"/>
<path d="M1114.4,711.9 L1118.2,720.1 L1122.0,728.2 L1125.9,736.4"/>
<path d="M1133.5,752.7 L1137.3,760.9 L1141.1,769.0 L1144.9,777.2"/>
<path d="M1148.7,785.3 L1152.5,793.5 L1156.3,801.6 L1160.1,809.8 L1163.9,818.0 L1167.7,826.1"/>
<path d="M1079.7,658.6 L1083.5,666.8"/>
<path d="M1087.3,674.9 L1091.1,683.1 L1094.9,691.3 L1098.7,699.4"/>
<path d="M1106.3,715.7 L1110.1,723.9 L1113.9,732.0 L1117.7,740.2"/>
<path d="M1125.3,756.5 L1129.1,764.7 L1132.9,772.8"/>
<path d="M1136.7,781.0 L1140.5,789.1 L1144.3,797.3"/>
<path d="M1148.1,805.4 L1151.9,813.6"/>
<path d="M1155.7,821.8 L1159.5,829.9 L1163.3,838.1"/>
</g>
<g fill="none" stroke="#b8b8bc" stroke-width="1.5" stroke-dasharray="1.5 1.3" clip-path="url(#cr)">
<path d="M1078.8,659.0 L1086.9,655.2"/>
<path d="M1095.1,651.4 L1103.2,647.6"/>
<path d="M1111.4,643.8 L1119.5,640.0 L1127.7,636.2"/>
<path d="M1135.8,632.4 L1144.0,628.6"/>
<path d="M1152.2,624.8 L1160.3,621.0"/>
<path d="M1176.6,613.4 L1184.8,609.6 L1192.9,605.8"/>
<path d="M1209.3,598.2 L1217.4,594.4 L1225.6,590.6 L1233.7,586.8 L1241.9,583.0 L1250.0,579.2"/>
<path d="M1082.6,667.2 L1090.7,663.4"/>
<path d="M1115.2,652.0 L1123.3,648.2 L1131.5,644.4"/>
<path d="M1139.7,640.6 L1147.8,636.8 L1156.0,633.0 L1164.1,629.2 L1172.3,625.4"/>
<path d="M1196.8,614.0 L1204.9,610.2 L1213.1,606.3 L1221.2,602.5 L1229.4,598.7 L1237.5,594.9"/>
<path d="M1245.7,591.1 L1253.8,587.3 L1262.0,583.5"/>
<path d="M1094.5,671.6 L1102.7,667.8 L1110.8,664.0 L1119.0,660.1 L1127.1,656.3"/>
<path d="M1135.3,652.5 L1143.5,648.7"/>
<path d="M1151.6,644.9 L1159.8,641.1 L1167.9,637.3"/>
<path d="M1176.1,633.5 L1184.2,629.7"/>
<path d="M1192.4,625.9 L1200.6,622.1 L1208.7,618.3 L1216.9,614.5 L1225.0,610.7 L1233.2,606.9 L1241.3,603.1 L1249.5,599.3 L1257.7,595.5 L1265.8,591.7"/>
<path d="M1090.2,683.5 L1098.3,679.7 L1106.5,675.9 L1114.6,672.1 L1122.8,668.3"/>
<path d="M1130.9,664.5 L1139.1,660.7 L1147.3,656.9 L1155.4,653.1 L1163.6,649.3"/>
<path d="M1171.7,645.5 L1179.9,641.7 L1188.0,637.9"/>
<path d="M1196.2,634.1 L1204.4,630.3"/>
<path d="M1228.8,618.9 L1237.0,615.1"/>
<path d="M1253.3,607.4 L1261.5,603.6 L1269.6,599.8"/>
<path d="M1102.1,687.9 L1110.3,684.1 L1118.4,680.3 L1126.6,676.5 L1134.8,672.7 L1142.9,668.9"/>
<path d="M1151.1,665.1 L1159.2,661.2 L1167.4,657.4 L1175.5,653.6 L1183.7,649.8"/>
<path d="M1216.3,634.6 L1224.5,630.8 L1232.6,627.0"/>
<path d="M1248.9,619.4 L1257.1,615.6 L1265.3,611.8 L1273.4,608.0"/>
<path d="M1097.8,699.8 L1105.9,696.0 L1114.1,692.2 L1122.2,688.4 L1130.4,684.6 L1138.6,680.8"/>
<path d="M1146.7,677.0 L1154.9,673.2 L1163.0,669.4 L1171.2,665.6 L1179.3,661.8 L1187.5,658.0 L1195.7,654.2"/>
<path d="M1203.8,650.4 L1212.0,646.6"/>
<path d="M1244.6,631.4 L1252.7,627.6"/>
<path d="M1109.7,704.2 L1117.9,700.4"/>
<path d="M1126.0,696.6 L1134.2,692.8 L1142.4,689.0"/>
<path d="M1158.7,681.4 L1166.8,677.6 L1175.0,673.8"/>
<path d="M1183.1,670.0 L1191.3,666.2 L1199.5,662.3 L1207.6,658.5 L1215.8,654.7"/>
<path d="M1232.1,647.1 L1240.2,643.3"/>
<path d="M1248.4,639.5 L1256.6,635.7"/>
<path d="M1272.9,628.1 L1281.0,624.3"/>
<path d="M1105.4,716.1 L1113.5,712.3"/>
<path d="M1121.7,708.5 L1129.8,704.7"/>
<path d="M1138.0,700.9 L1146.2,697.1 L1154.3,693.3 L1162.5,689.5 L1170.6,685.7"/>
<path d="M1178.8,681.9 L1186.9,678.1"/>
<path d="M1195.1,674.3 L1203.3,670.5 L1211.4,666.7 L1219.6,662.9 L1227.7,659.1"/>
<path d="M1235.9,655.3 L1244.0,651.5 L1252.2,647.7 L1260.4,643.9 L1268.5,640.1 L1276.7,636.3 L1284.8,632.5"/>
<path d="M1117.3,720.5 L1125.5,716.7 L1133.7,712.9"/>
<path d="M1166.3,697.7 L1174.4,693.9 L1182.6,690.1 L1190.7,686.3 L1198.9,682.5 L1207.1,678.7 L1215.2,674.9 L1223.4,671.1"/>
<path d="M1256.0,655.8 L1264.2,652.0 L1272.3,648.2 L1280.5,644.4 L1288.6,640.6"/>
<path d="M1113.0,732.5 L1121.1,728.7 L1129.3,724.9"/>
<path d="M1137.5,721.0 L1145.6,717.2 L1153.8,713.4 L1161.9,709.6 L1170.1,705.8 L1178.2,702.0"/>
<path d="M1186.4,698.2 L1194.6,694.4 L1202.7,690.6 L1210.9,686.8 L1219.0,683.0 L1227.2,679.2 L1235.3,675.4 L1243.5,671.6 L1251.6,667.8"/>
<path d="M1276.1,656.4 L1284.3,652.6 L1292.4,648.8"/>
<path d="M1124.9,736.8 L1133.1,733.0 L1141.3,729.2 L1149.4,725.4 L1157.6,721.6 L1165.7,717.8"/>
<path d="M1182.0,710.2 L1190.2,706.4 L1198.4,702.6 L1206.5,698.8 L1214.7,695.0 L1222.8,691.2 L1231.0,687.4 L1239.1,683.6"/>
<path d="M1271.8,668.3 L1279.9,664.5"/>
<path d="M1288.1,660.7 L1296.2,656.9"/>
<path d="M1128.7,745.0 L1136.9,741.2 L1145.1,737.4 L1153.2,733.6 L1161.4,729.8 L1169.5,726.0 L1177.7,722.1 L1185.8,718.3 L1194.0,714.5 L1202.2,710.7 L1210.3,706.9"/>
<path d="M1218.5,703.1 L1226.6,699.3"/>
<path d="M1242.9,691.7 L1251.1,687.9"/>
<path d="M1259.3,684.1 L1267.4,680.3 L1275.6,676.5 L1283.7,672.7 L1291.9,668.9 L1300.0,665.1"/>
<path d="M1124.4,756.9 L1132.6,753.1 L1140.7,749.3"/>
<path d="M1148.9,745.5 L1157.0,741.7"/>
<path d="M1173.3,734.1 L1181.5,730.3 L1189.6,726.5 L1197.8,722.7 L1206.0,718.9 L1214.1,715.1 L1222.3,711.3 L1230.4,707.5 L1238.6,703.7 L1246.7,699.9 L1254.9,696.1 L1263.1,692.3 L1271.2,688.5 L1279.4,684.7 L1287.5,680.9 L1295.7,677.1 L1303.8,673.3"/>
<path d="M1128.2,765.1 L1136.4,761.3"/>
<path d="M1144.5,757.5 L1152.7,753.7 L1160.8,749.9 L1169.0,746.1"/>
<path d="M1185.3,738.5 L1193.5,734.7"/>
<path d="M1217.9,723.2 L1226.1,719.4 L1234.2,715.6 L1242.4,711.8"/>
<path d="M1250.5,708.0 L1258.7,704.2 L1266.9,700.4"/>
<path d="M1275.0,696.6 L1283.2,692.8 L1291.3,689.0"/>
<path d="M1299.5,685.2 L1307.6,681.4"/>
<path d="M1132.0,773.2 L1140.2,769.4 L1148.3,765.6 L1156.5,761.8 L1164.6,758.0"/>
<path d="M1172.8,754.2 L1180.9,750.4 L1189.1,746.6 L1197.3,742.8"/>
<path d="M1205.4,739.0 L1213.6,735.2 L1221.7,731.4"/>
<path d="M1229.9,727.6 L1238.0,723.8 L1246.2,720.0"/>
<path d="M1254.4,716.2 L1262.5,712.4 L1270.7,708.6 L1278.8,704.8"/>
<path d="M1287.0,701.0 L1295.1,697.2 L1303.3,693.4 L1311.5,689.6"/>
<path d="M1160.3,770.0 L1168.4,766.2"/>
<path d="M1184.7,758.6 L1192.9,754.8 L1201.1,751.0 L1209.2,747.2"/>
<path d="M1225.5,739.6 L1233.7,735.8 L1241.8,732.0 L1250.0,728.2"/>
<path d="M1266.3,720.5 L1274.5,716.7 L1282.6,712.9"/>
<path d="M1290.8,709.1 L1298.9,705.3 L1307.1,701.5 L1315.3,697.7"/>
<path d="M1147.8,785.8 L1155.9,782.0"/>
<path d="M1164.1,778.1 L1172.2,774.3 L1180.4,770.5 L1188.5,766.7 L1196.7,762.9 L1204.9,759.1"/>
<path d="M1221.2,751.5 L1229.3,747.7"/>
<path d="M1270.1,728.7 L1278.3,724.9 L1286.4,721.1 L1294.6,717.3"/>
<path d="M1302.7,713.5 L1310.9,709.7"/>
<path d="M1143.4,797.7 L1151.6,793.9"/>
<path d="M1176.0,782.5 L1184.2,778.7 L1192.4,774.9"/>
<path d="M1200.5,771.1 L1208.7,767.3 L1216.8,763.5"/>
<path d="M1225.0,759.7 L1233.1,755.9 L1241.3,752.1 L1249.5,748.3 L1257.6,744.5 L1265.8,740.7 L1273.9,736.9 L1282.1,733.1 L1290.2,729.3 L1298.4,725.4 L1306.5,721.6 L1314.7,717.8 L1322.9,714.0"/>
<path d="M1147.2,805.9 L1155.4,802.1 L1163.5,798.3"/>
<path d="M1188.0,786.9 L1196.2,783.0"/>
<path d="M1220.6,771.6 L1228.8,767.8 L1236.9,764.0 L1245.1,760.2"/>
<path d="M1269.6,748.8 L1277.7,745.0"/>
<path d="M1285.9,741.2 L1294.0,737.4"/>
<path d="M1302.2,733.6 L1310.4,729.8 L1318.5,726.0 L1326.7,722.2"/>
<path d="M1159.2,810.2 L1167.3,806.4 L1175.5,802.6 L1183.6,798.8"/>
<path d="M1191.8,795.0 L1200.0,791.2 L1208.1,787.4 L1216.3,783.6"/>
<path d="M1224.4,779.8 L1232.6,776.0"/>
<path d="M1257.1,764.6 L1265.2,760.8"/>
<path d="M1281.5,753.2 L1289.7,749.4"/>
<path d="M1297.8,745.6 L1306.0,741.8 L1314.2,738.0 L1322.3,734.2 L1330.5,730.3"/>
<path d="M1154.8,822.2 L1163.0,818.4 L1171.1,814.6 L1179.3,810.8 L1187.5,807.0 L1195.6,803.2"/>
<path d="M1203.8,799.4 L1211.9,795.6 L1220.1,791.8"/>
<path d="M1228.2,788.0 L1236.4,784.1 L1244.5,780.3 L1252.7,776.5 L1260.9,772.7 L1269.0,768.9"/>
<path d="M1277.2,765.1 L1285.3,761.3 L1293.5,757.5 L1301.6,753.7 L1309.8,749.9 L1318.0,746.1 L1326.1,742.3 L1334.3,738.5"/>
<path d="M1158.6,830.3 L1166.8,826.5 L1174.9,822.7"/>
<path d="M1199.4,811.3 L1207.6,807.5"/>
<path d="M1215.7,803.7 L1223.9,799.9 L1232.0,796.1 L1240.2,792.3 L1248.4,788.5 L1256.5,784.7 L1264.7,780.9"/>
<path d="M1272.8,777.1 L1281.0,773.3 L1289.1,769.5 L1297.3,765.7 L1305.4,761.9 L1313.6,758.1"/>
<path d="M1321.8,754.3 L1329.9,750.5"/>
<path d="M1258.6,595.1 L1262.4,603.2"/>
<path d="M1266.2,611.4 L1270.0,619.5 L1273.8,627.7 L1277.6,635.8 L1281.4,644.0 L1285.2,652.2 L1289.0,660.3 L1292.8,668.5 L1296.6,676.6 L1300.4,684.8"/>
<path d="M1311.8,709.3 L1315.6,717.4 L1319.4,725.6 L1323.2,733.7"/>
<path d="M1242.8,582.6 L1246.6,590.7 L1250.4,598.9 L1254.2,607.0"/>
<path d="M1258.0,615.2 L1261.8,623.3 L1265.6,631.5 L1269.4,639.7"/>
<path d="M1273.2,647.8 L1277.0,656.0"/>
<path d="M1280.8,664.1 L1284.6,672.3 L1288.4,680.4"/>
<path d="M1292.2,688.6 L1296.0,696.8 L1299.8,704.9 L1303.7,713.1 L1307.5,721.2"/>
<path d="M1315.1,737.5 L1318.9,745.7"/>
<path d="M1322.7,753.8 L1326.5,762.0"/>
<path d="M1238.4,594.5 L1242.2,602.7 L1246.0,610.8"/>
<path d="M1249.9,619.0 L1253.7,627.1 L1257.5,635.3 L1261.3,643.5 L1265.1,651.6"/>
<path d="M1268.9,659.8 L1272.7,667.9 L1276.5,676.1"/>
<path d="M1284.1,692.4 L1287.9,700.6 L1291.7,708.7 L1295.5,716.9"/>
<path d="M1299.3,725.0 L1303.1,733.2 L1306.9,741.3 L1310.7,749.5"/>
<path d="M1314.5,757.7 L1318.3,765.8"/>
<path d="M1226.5,590.2 L1230.3,598.3"/>
<path d="M1234.1,606.5 L1237.9,614.6 L1241.7,622.8 L1245.5,630.9"/>
<path d="M1249.3,639.1 L1253.1,647.3 L1256.9,655.4 L1260.7,663.6 L1264.5,671.7 L1268.3,679.9 L1272.1,688.0"/>
<path d="M1283.5,712.5 L1287.3,720.7"/>
<path d="M1291.1,728.8 L1294.9,737.0"/>
<path d="M1302.6,753.3 L1306.4,761.5"/>
<path d="M1218.3,594.0 L1222.1,602.1 L1225.9,610.3 L1229.7,618.4 L1233.5,626.6 L1237.3,634.8 L1241.1,642.9 L1244.9,651.1 L1248.8,659.2 L1252.6,667.4"/>
<path d="M1256.4,675.5 L1260.2,683.7 L1264.0,691.8 L1267.8,700.0 L1271.6,708.2"/>
<path d="M1279.2,724.5 L1283.0,732.6"/>
<path d="M1286.8,740.8 L1290.6,748.9 L1294.4,757.1"/>
<path d="M1298.2,765.3 L1302.0,773.4"/>
<path d="M1210.2,597.8 L1214.0,605.9"/>
<path d="M1217.8,614.1 L1221.6,622.2 L1225.4,630.4 L1229.2,638.6 L1233.0,646.7"/>
<path d="M1244.4,671.2 L1248.2,679.3 L1252.0,687.5"/>
<path d="M1255.8,695.7 L1259.6,703.8 L1263.4,712.0 L1267.2,720.1"/>
<path d="M1278.6,744.6 L1282.4,752.7"/>
<path d="M1202.0,601.6 L1205.8,609.7 L1209.6,617.9 L1213.4,626.0 L1217.2,634.2 L1221.0,642.4 L1224.8,650.5 L1228.6,658.7 L1232.4,666.8"/>
<path d="M1240.0,683.1 L1243.8,691.3"/>
<path d="M1247.7,699.5 L1251.5,707.6 L1255.3,715.8 L1259.1,723.9"/>
<path d="M1270.5,748.4 L1274.3,756.6 L1278.1,764.7 L1281.9,772.9 L1285.7,781.0"/>
<path d="M1193.9,605.4 L1197.7,613.5"/>
<path d="M1205.3,629.8 L1209.1,638.0 L1212.9,646.2 L1216.7,654.3 L1220.5,662.5"/>
<path d="M1224.3,670.6 L1228.1,678.8 L1231.9,686.9 L1235.7,695.1 L1239.5,703.3 L1243.3,711.4"/>
<path d="M1254.7,735.9 L1258.5,744.0 L1262.3,752.2 L1266.1,760.4 L1269.9,768.5 L1273.7,776.7 L1277.5,784.8"/>
<path d="M1185.7,609.2 L1189.5,617.3 L1193.3,625.5"/>
<path d="M1197.1,633.7 L1200.9,641.8"/>
<path d="M1204.7,650.0 L1208.5,658.1 L1212.3,666.3 L1216.1,674.4"/>
<path d="M1223.7,690.7 L1227.5,698.9 L1231.3,707.1"/>
<path d="M1238.9,723.4 L1242.7,731.5 L1246.6,739.7 L1250.4,747.8"/>
<path d="M1254.2,756.0 L1258.0,764.2"/>
<path d="M1261.8,772.3 L1265.6,780.5 L1269.4,788.6"/>
<path d="M1177.5,613.0 L1181.3,621.1 L1185.1,629.3 L1189.0,637.5 L1192.8,645.6"/>
<path d="M1200.4,661.9 L1204.2,670.1 L1208.0,678.2 L1211.8,686.4"/>
<path d="M1215.6,694.6 L1219.4,702.7 L1223.2,710.9 L1227.0,719.0"/>
<path d="M1230.8,727.2 L1234.6,735.3 L1238.4,743.5"/>
<path d="M1246.0,759.8 L1249.8,768.0 L1253.6,776.1 L1257.4,784.3"/>
<path d="M1169.4,616.8 L1173.2,624.9 L1177.0,633.1 L1180.8,641.3"/>
<path d="M1184.6,649.4 L1188.4,657.6 L1192.2,665.7 L1196.0,673.9"/>
<path d="M1203.6,690.2 L1207.4,698.4"/>
<path d="M1211.2,706.5 L1215.0,714.7 L1218.8,722.8"/>
<path d="M1226.4,739.1 L1230.2,747.3 L1234.0,755.5 L1237.8,763.6"/>
<path d="M1241.7,771.8 L1245.5,779.9"/>
<path d="M1249.3,788.1 L1253.1,796.2"/>
<path d="M1172.6,645.1 L1176.4,653.2 L1180.2,661.4 L1184.0,669.5 L1187.9,677.7 L1191.7,685.8 L1195.5,694.0 L1199.3,702.2"/>
<path d="M1203.1,710.3 L1206.9,718.5 L1210.7,726.6"/>
<path d="M1214.5,734.8 L1218.3,742.9 L1222.1,751.1 L1225.9,759.3 L1229.7,767.4"/>
<path d="M1241.1,791.9 L1244.9,800.0"/>
<path d="M1153.1,624.4 L1156.9,632.6"/>
<path d="M1160.7,640.7 L1164.5,648.9"/>
<path d="M1168.3,657.0 L1172.1,665.2 L1175.9,673.3 L1179.7,681.5 L1183.5,689.6"/>
<path d="M1187.3,697.8 L1191.1,706.0 L1194.9,714.1 L1198.7,722.3"/>
<path d="M1202.5,730.4 L1206.3,738.6 L1210.1,746.7"/>
<path d="M1213.9,754.9 L1217.7,763.1 L1221.5,771.2 L1225.3,779.4"/>
<path d="M1144.9,628.2 L1148.7,636.4"/>
<path d="M1152.5,644.5 L1156.3,652.7 L1160.1,660.8 L1163.9,669.0"/>
<path d="M1167.7,677.1 L1171.5,685.3 L1175.3,693.5"/>
<path d="M1179.1,701.6 L1182.9,709.8 L1186.8,717.9"/>
<path d="M1194.4,734.2 L1198.2,742.4 L1202.0,750.5 L1205.8,758.7 L1209.6,766.9"/>
<path d="M1217.2,783.2 L1221.0,791.3 L1224.8,799.5 L1228.6,807.6"/>
<path d="M1136.8,632.0 L1140.6,640.2"/>
<path d="M1144.4,648.3 L1148.2,656.5 L1152.0,664.6 L1155.8,672.8"/>
<path d="M1159.6,680.9 L1163.4,689.1 L1167.2,697.3 L1171.0,705.4 L1174.8,713.6 L1178.6,721.7 L1182.4,729.9 L1186.2,738.0 L1190.0,746.2 L1193.8,754.4"/>
<path d="M1201.4,770.7 L1205.2,778.8"/>
<path d="M1216.6,803.3 L1220.4,811.5"/>
<path d="M1128.6,635.8 L1132.4,644.0 L1136.2,652.1 L1140.0,660.3 L1143.8,668.4"/>
<path d="M1155.2,692.9 L1159.0,701.1 L1162.8,709.2 L1166.6,717.4"/>
<path d="M1170.4,725.5 L1174.2,733.7 L1178.0,741.8 L1181.8,750.0 L1185.7,758.2 L1189.5,766.3 L1193.3,774.5"/>
<path d="M1197.1,782.6 L1200.9,790.8"/>
<path d="M1204.7,798.9 L1208.5,807.1 L1212.3,815.3"/>
<path d="M1120.4,639.6 L1124.2,647.8"/>
<path d="M1139.5,680.4 L1143.3,688.5 L1147.1,696.7 L1150.9,704.9 L1154.7,713.0 L1158.5,721.2 L1162.3,729.3"/>
<path d="M1166.1,737.5 L1169.9,745.6 L1173.7,753.8 L1177.5,762.0"/>
<path d="M1181.3,770.1 L1185.1,778.3 L1188.9,786.4 L1192.7,794.6 L1196.5,802.7"/>
<path d="M1119.9,659.7 L1123.7,667.9 L1127.5,676.0 L1131.3,684.2 L1135.1,692.4 L1138.9,700.5 L1142.7,708.7"/>
<path d="M1146.5,716.8 L1150.3,725.0 L1154.1,733.1"/>
<path d="M1157.9,741.3 L1161.7,749.5 L1165.5,757.6"/>
<path d="M1169.3,765.8 L1173.1,773.9"/>
<path d="M1184.6,798.4 L1188.4,806.5 L1192.2,814.7"/>
<path d="M1107.9,655.4 L1111.7,663.5 L1115.5,671.7"/>
<path d="M1119.3,679.8 L1123.1,688.0"/>
<path d="M1127.0,696.2 L1130.8,704.3 L1134.6,712.5"/>
<path d="M1142.2,728.8 L1146.0,736.9 L1149.8,745.1 L1153.6,753.3"/>
<path d="M1161.2,769.6 L1165.0,777.7 L1168.8,785.9"/>
<path d="M1172.6,794.0 L1176.4,802.2 L1180.2,810.4 L1184.0,818.5 L1187.8,826.7"/>
<path d="M1096.0,651.0 L1099.8,659.2 L1103.6,667.3 L1107.4,675.5 L1111.2,683.6 L1115.0,691.8"/>
<path d="M1118.8,700.0 L1122.6,708.1"/>
<path d="M1130.2,724.4 L1134.0,732.6 L1137.8,740.7 L1141.6,748.9 L1145.4,757.1 L1149.2,765.2 L1153.0,773.4"/>
<path d="M1160.6,789.7 L1164.4,797.8 L1168.2,806.0 L1172.0,814.2"/>
<path d="M1175.8,822.3 L1179.7,830.5"/>
<path d="M1087.8,654.8 L1091.6,663.0 L1095.4,671.1"/>
<path d="M1103.0,687.5 L1106.8,695.6 L1110.6,703.8"/>
<path d="M1114.4,711.9 L1118.2,720.1 L1122.0,728.2 L1125.9,736.4"/>
<path d="M1133.5,752.7 L1137.3,760.9 L1141.1,769.0 L1144.9,777.2"/>
<path d="M1148.7,785.3 L1152.5,793.5 L1156.3,801.6 L1160.1,809.8 L1163.9,818.0 L1167.7,826.1"/>
<path d="M1079.7,658.6 L1083.5,666.8"/>
<path d="M1087.3,674.9 L1091.1,683.1 L1094.9,691.3 L1098.7,699.4"/>
<path d="M1106.3,715.7 L1110.1,723.9 L1113.9,732.0 L1117.7,740.2"/>
<path d="M1125.3,756.5 L1129.1,764.7 L1132.9,772.8"/>
<path d="M1136.7,781.0 L1140.5,789.1 L1144.3,797.3"/>
<path d="M1148.1,805.4 L1151.9,813.6"/>
<path d="M1155.7,821.8 L1159.5,829.9 L1163.3,838.1"/>
</g>
<g fill="none" stroke-linejoin="round" stroke-linecap="round" stroke="#fae995" stroke-width="2.6">
<path d="M529.2,177.6 C528.7,178.8 525.7,181.7 526.0,184.5 C526.3,187.3 530.0,190.9 531.2,194.6 C532.4,198.3 528.8,204.1 533.2,206.7 C537.6,209.2 550.0,207.9 557.4,209.9 C564.8,211.9 572.9,216.0 577.6,218.8 C582.3,221.6 580.3,224.1 585.7,226.9 C591.1,229.7 603.3,234.0 610.0,235.7 C616.7,237.4 622.3,234.4 626.0,237.0 C629.7,239.6 628.6,246.6 632.0,251.0 C635.4,255.4 640.1,261.8 646.2,263.2 C652.3,264.6 666.4,261.9 668.4,259.2 C670.4,256.5 658.6,250.7 658.3,247.0 C658.0,243.3 655.6,239.3 666.4,237.0 C677.2,234.7 704.1,231.6 722.9,232.9 C741.7,234.2 767.6,243.7 779.4,245.0 C791.2,246.3 789.5,240.3 793.5,241.0 C797.5,241.7 792.5,247.4 803.6,249.0 C814.7,250.6 849.3,249.6 860.1,250.3 C870.9,251.0 860.1,251.6 868.2,253.1 C876.3,254.6 896.2,255.6 908.6,259.2 C921.0,262.8 938.2,270.5 942.9,274.5 C947.6,278.5 936.1,280.2 936.8,283.4 C937.5,286.6 942.5,289.8 946.9,293.5 C951.3,297.2 959.3,305.3 963.0,305.6 C966.7,305.9 962.0,297.9 969.1,295.5 C976.2,293.1 997.9,292.5 1005.4,291.5 C1012.9,290.5 1010.6,288.1 1014.2,289.3 C1017.9,290.5 1023.6,298.0 1027.3,298.6 C1031.0,299.2 1032.9,293.3 1036.6,293.0 C1040.3,292.7 1045.2,293.4 1049.6,296.8 C1053.9,300.2 1059.0,310.6 1062.7,313.5 C1066.4,316.4 1068.3,312.9 1072.0,314.5 C1075.7,316.1 1081.3,319.2 1085.0,322.8 C1088.7,326.4 1087.8,333.1 1094.3,335.9 C1100.8,338.7 1118.5,336.5 1124.1,339.6 C1129.7,342.7 1125.4,350.9 1127.9,354.5 C1130.4,358.1 1135.6,361.0 1139.0,361.0 C1142.4,361.0 1145.9,357.4 1148.4,354.5 C1150.9,351.6 1151.2,346.1 1154.0,343.3 C1156.8,340.5 1162.6,337.8 1165.1,337.8 C1167.6,337.8 1169.5,337.7 1168.9,343.3 C1168.3,348.9 1163.9,363.5 1161.4,371.3 C1158.9,379.1 1156.5,384.3 1154.0,389.9 C1151.5,395.5 1144.7,400.0 1146.5,404.8 C1148.3,409.6 1160.1,416.0 1165.1,418.8 C1170.1,421.6 1171.3,424.6 1176.3,421.6 C1181.3,418.7 1191.8,407.9 1194.9,401.1 C1198.0,394.3 1194.9,384.0 1194.9,380.6"/>
<path d="M470.6,360.1 C479.7,363.1 508.6,374.5 525.1,378.2 C541.6,381.9 552.7,375.9 569.5,382.3 C586.3,388.7 612.5,410.4 626.0,416.6 C639.5,422.9 634.1,411.1 650.3,419.8 C666.4,428.5 705.4,459.6 722.9,469.0 C740.4,478.4 741.8,470.9 755.2,476.3 C768.7,481.7 786.1,494.4 803.6,501.3 C821.1,508.2 845.5,513.6 860.0,517.9 C874.5,522.2 876.3,521.6 890.3,527.2 C904.3,532.8 930.2,543.4 943.8,551.7 C957.4,560.1 962.9,570.3 971.8,577.3 C980.7,584.3 991.8,589.1 997.4,593.6 C1003.0,598.1 1004.1,599.6 1005.5,604.0 C1006.9,608.4 1006.1,613.6 1005.5,620.0 C1004.9,626.4 1000.7,634.7 1001.7,642.1 C1002.7,649.5 1004.6,656.1 1011.6,664.4 C1018.6,672.7 1036.0,685.2 1043.9,691.8 C1051.8,698.4 1054.7,699.2 1058.8,704.2 C1062.9,709.2 1063.3,715.8 1068.7,721.6 C1074.1,727.4 1087.4,736.0 1091.1,738.9"/>
<path d="M997.4,336.3 C1001.7,336.9 1017.0,338.5 1023.0,339.8 C1029.0,341.1 1031.6,341.1 1033.5,344.4 C1035.4,347.7 1032.7,355.5 1034.6,359.6 C1036.5,363.7 1043.0,363.5 1045.1,368.9 C1047.2,374.3 1047.6,382.9 1047.4,392.2 C1047.2,401.5 1042.9,414.7 1043.9,424.8 C1044.9,434.9 1049.2,443.9 1053.2,452.7 C1057.2,461.5 1062.9,469.6 1068.2,477.5 C1073.5,485.4 1080.3,493.9 1085.0,499.8 C1089.7,505.7 1092.2,510.9 1096.2,512.9 C1100.2,514.9 1105.2,512.0 1109.2,512.0 C1113.2,512.0 1117.3,511.6 1120.4,512.9 C1123.5,514.2 1126.7,518.8 1127.9,520.0"/>
<path d="M1032.8,520.0 C1035.0,515.7 1040.2,501.3 1045.9,494.2 C1051.7,487.1 1063.7,480.3 1067.3,477.5"/>
<path d="M1111.1,509.2 C1114.2,505.8 1120.8,495.4 1129.7,488.7 C1138.6,482.0 1153.6,473.5 1164.2,469.1 C1174.8,464.8 1186.4,464.2 1193.1,462.6 C1199.8,461.1 1200.2,459.5 1204.2,459.8 C1208.2,460.1 1213.6,461.4 1217.3,464.4 C1221.0,467.3 1223.2,474.4 1226.6,477.5 C1230.0,480.6 1234.4,479.4 1237.8,483.1 C1241.2,486.8 1244.3,493.7 1247.1,499.8 C1249.9,505.9 1253.3,516.6 1254.6,520.0"/>
<path d="M1164.2,470.0 C1164.0,463.8 1161.6,441.5 1163.3,432.8 C1165.0,424.1 1171.3,424.7 1174.4,417.9 C1177.5,411.1 1180.2,399.2 1181.9,391.8 C1183.6,384.4 1182.8,378.2 1184.7,373.2 C1186.6,368.2 1189.5,365.1 1193.1,362.0 C1196.7,358.9 1202.7,355.4 1206.1,354.5 C1209.5,353.6 1209.2,355.5 1213.6,356.4 C1217.9,357.3 1225.4,360.6 1232.2,360.1 C1239.0,359.6 1250.7,356.4 1254.6,353.6 C1258.5,350.8 1257.1,346.2 1255.5,343.3 C1253.9,340.4 1247.4,339.0 1245.2,335.9 C1243.0,332.8 1242.2,327.5 1242.4,324.7 C1242.6,321.9 1247.0,321.0 1246.2,319.1 C1245.4,317.2 1240.5,315.4 1237.8,313.5 C1235.1,311.6 1228.4,312.2 1230.3,307.9 C1232.2,303.6 1245.9,290.9 1249.0,287.5"/>
<path d="M1209.8,375.0 L1245.2,379.7"/>
<path d="M1222.9,373.2 L1228.5,365.7"/>
<path d="M1213.6,380.6 C1216.7,381.5 1225.7,382.5 1232.2,386.2 C1238.7,389.9 1248.7,399.0 1252.7,403.0 C1256.7,407.0 1257.0,407.0 1256.4,410.4 C1255.8,413.8 1249.9,420.4 1249.0,423.5 C1248.1,426.6 1247.4,426.8 1250.8,429.0 C1254.2,431.2 1265.5,436.5 1269.5,436.5 C1273.5,436.5 1273.5,433.4 1275.0,429.0 C1276.5,424.6 1278.5,415.0 1278.8,410.4 C1279.1,405.8 1272.9,404.5 1276.9,401.1 C1280.9,397.7 1298.3,394.2 1303.0,389.9 C1307.7,385.5 1303.7,378.4 1304.9,375.0 C1306.1,371.6 1306.2,369.7 1310.4,369.4 C1314.6,369.1 1326.7,372.6 1330.0,373.2"/>
<path d="M1312.3,371.3 C1312.6,366.6 1311.7,351.7 1314.2,343.3 C1316.7,334.9 1325.0,324.7 1327.2,321.0"/>
<path d="M1252.7,452.3 C1254.2,457.1 1259.5,473.9 1262.0,481.2 C1264.5,488.5 1266.7,493.6 1267.6,496.1"/>
<path d="M1310.4,382.5 C1311.7,386.5 1315.4,402.1 1317.9,406.7 C1320.4,411.3 1325.9,406.0 1325.3,410.4 C1324.7,414.8 1316.7,424.7 1314.2,432.8 C1311.7,440.9 1309.8,453.3 1310.4,458.9 C1311.0,464.5 1314.6,465.4 1317.9,466.3 C1321.2,467.2 1328.0,464.4 1330.0,464.0"/>
<path d="M1306.7,444.0 C1306.7,446.5 1305.8,455.5 1306.7,458.9 C1307.6,462.3 1311.4,463.5 1312.3,464.4"/>
<path d="M998.5,594.7 C1001.8,594.3 1009.2,593.2 1018.3,592.4 C1027.4,591.6 1046.2,590.9 1053.2,590.1 C1060.2,589.3 1055.8,588.9 1060.0,587.8 C1064.2,586.7 1073.9,584.4 1078.7,583.7 C1083.5,583.0 1086.9,583.7 1088.6,583.7"/>
<path d="M1018.3,592.4 C1020.2,582.3 1027.7,543.9 1030.0,531.9 C1032.3,519.9 1029.6,525.6 1032.3,520.2 C1035.0,514.8 1042.8,505.1 1046.3,499.3 C1049.8,493.5 1050.9,488.4 1053.2,485.3 C1055.5,482.2 1058.9,481.5 1060.0,480.7"/>
<path d="M1031.1,531.9 C1031.5,535.0 1030.2,541.2 1033.5,550.5 C1036.8,559.8 1046.5,580.4 1050.9,587.8 C1055.3,595.2 1051.2,589.4 1060.0,594.7 C1068.8,600.0 1093.2,613.9 1103.5,619.7 C1113.8,625.5 1119.0,628.0 1122.1,629.7"/>
<path d="M1050.9,587.8 L1060.0,573.8"/>
<path d="M1006.7,536.5 L1025.3,541.2"/>
<path d="M880.0,770.0 C886.2,768.1 904.5,768.1 917.3,758.8 C930.1,749.5 947.5,722.2 957.0,714.1 C966.5,706.0 963.6,710.8 974.4,710.4 C985.2,710.0 1010.8,713.5 1021.6,711.6 C1032.4,709.7 1033.6,702.9 1039.0,699.2 C1044.4,695.5 1048.0,689.9 1053.8,689.3 C1059.6,688.7 1066.7,693.4 1073.7,695.5 C1080.7,697.6 1092.3,700.7 1096.0,701.7"/>
<path d="M1180.0,629.7 C1174.7,633.4 1159.3,641.6 1148.2,652.0 C1137.1,662.4 1123.3,679.0 1113.4,691.8 C1103.5,704.6 1097.7,714.1 1088.6,729.0 C1079.5,743.9 1068.7,760.9 1058.8,781.2 C1048.9,801.5 1040.6,830.9 1029.0,850.7 C1017.4,870.5 1010.8,875.0 989.3,899.9 C967.8,924.8 918.5,979.6 900.0,1000.0 C881.5,1020.4 890.9,1009.4 878.4,1022.5 C865.9,1035.6 843.3,1063.7 824.7,1078.4 C806.1,1093.1 776.3,1105.2 766.6,1110.6"/>
<path d="M878.4,1022.5 C879.9,1023.6 885.8,1021.4 887.3,1029.2 C888.8,1037.0 884.7,1058.7 887.3,1069.5 C889.9,1080.3 900.4,1089.9 903.0,1094.0"/>
<path d="M1006.7,851.9 C1012.5,845.3 1034.4,821.5 1041.4,812.2 C1048.4,802.9 1047.2,802.0 1048.9,796.0 C1050.6,790.0 1049.6,782.4 1051.4,776.2 C1053.2,770.0 1054.2,768.3 1060.0,758.8 C1065.8,749.3 1078.5,729.4 1086.0,719.0 C1093.5,708.6 1101.6,700.4 1104.7,696.7"/>
<path d="M1073.7,823.4 L1086.1,797.3"/>
<path d="M1041.4,812.2 C1046.8,814.3 1065.4,819.0 1073.7,824.6 C1082.0,830.2 1088.0,833.2 1091.1,845.7 C1094.2,858.2 1092.1,886.0 1092.3,899.9 C1092.5,913.8 1094.0,919.3 1092.1,929.1 C1090.2,938.9 1085.0,949.4 1081.0,958.6 C1077.0,967.8 1070.5,975.9 1068.1,984.5 C1065.6,993.1 1064.1,1004.1 1066.3,1010.3 C1068.5,1016.4 1077.3,1020.5 1081.0,1021.4 C1084.7,1022.3 1087.2,1016.8 1088.4,1015.9"/>
<path d="M1086.1,873.0 C1088.2,873.0 1094.8,870.9 1098.5,873.0 C1102.2,875.1 1106.2,881.0 1108.5,885.5 C1110.8,890.0 1111.2,897.6 1112.2,899.9 C1113.2,902.2 1112.1,899.0 1114.3,899.5 C1116.5,900.0 1119.2,902.9 1125.4,903.2 C1131.6,903.5 1146.3,898.9 1151.2,901.4 C1156.1,903.9 1157.4,911.5 1154.9,918.0 C1152.5,924.5 1137.7,934.0 1136.5,940.1 C1135.3,946.2 1145.7,949.4 1147.5,954.9 C1149.3,960.4 1145.7,969.1 1147.5,973.4 C1149.3,977.7 1150.6,979.9 1158.6,980.8 C1166.6,981.7 1180.2,978.0 1195.6,978.9 C1211.0,979.8 1238.7,983.5 1251.0,986.3 C1263.3,989.1 1264.0,991.0 1269.5,995.6 C1275.0,1000.2 1281.1,1014.0 1284.2,1014.0 C1287.3,1014.0 1289.1,1003.0 1287.9,995.6 C1286.7,988.2 1280.5,972.8 1276.8,969.7 C1273.1,966.6 1267.6,972.9 1265.8,977.1 C1264.0,981.3 1265.8,992.0 1265.8,995.0"/>
<path d="M1042.7,701.7 C1042.1,707.1 1038.7,727.2 1038.9,734.0 C1039.1,740.8 1043.1,741.2 1043.9,742.7"/>
<path d="M1225.0,668.0 C1227.6,670.5 1233.7,677.2 1240.4,683.2 C1247.2,689.2 1257.6,700.0 1265.5,704.2 C1273.4,708.4 1280.2,704.6 1287.9,708.3 C1295.6,712.0 1307.7,723.5 1311.7,726.5"/>
<path d="M1047.6,704.2 L1053.8,721.6"/>
<path d="M450.5,772.1 C457.0,773.6 474.7,776.2 489.4,781.1 C504.1,786.0 510.3,794.9 538.6,801.2 C566.9,807.5 630.2,817.1 659.3,819.0 C688.4,820.9 676.2,820.6 713.0,812.4 C749.8,804.2 852.2,777.1 880.0,770.0"/>
<path d="M1131.3,660.0 C1138.8,654.9 1163.1,637.0 1176.3,629.3 C1189.5,621.6 1198.1,619.7 1210.5,613.7 C1222.9,607.8 1236.3,599.0 1250.8,593.6 C1265.3,588.2 1279.2,584.7 1297.4,581.1 C1315.6,577.5 1346.4,572.5 1360.0,571.8 C1373.6,571.1 1370.3,575.5 1379.2,576.7 C1388.1,578.0 1388.0,573.1 1413.5,579.3 C1439.0,585.5 1505.9,606.2 1532.3,613.7 C1558.7,621.2 1544.0,616.3 1571.9,624.2 C1599.9,632.1 1662.3,649.3 1700.0,661.2 C1737.7,673.1 1768.9,690.1 1798.0,695.4 C1827.1,700.6 1859.2,691.2 1874.6,692.7 C1890.0,694.2 1887.8,702.6 1890.5,704.6"/>
<path d="M1318.5,570.1 C1327.3,570.0 1361.2,568.7 1371.3,569.6 C1381.4,570.5 1378.3,572.2 1379.2,575.4 C1380.1,578.6 1380.6,584.6 1376.6,588.6 C1372.6,592.6 1359.2,595.2 1355.4,599.1 C1351.7,603.0 1350.1,601.7 1354.1,612.3 C1358.1,622.9 1366.2,644.5 1379.2,662.5 C1392.2,680.5 1422.3,709.8 1432.0,720.0 C1441.7,730.2 1436.2,723.0 1437.1,723.6"/>
<path d="M1449.2,585.9 C1452.5,576.2 1465.7,543.3 1469.0,527.9 C1472.3,512.5 1470.3,502.8 1469.0,493.5 C1467.7,484.2 1465.8,479.2 1461.0,472.4 C1456.2,465.6 1447.5,458.1 1440.0,452.6 C1432.5,447.1 1425.5,440.5 1416.2,439.4 C1407.0,438.3 1400.3,443.6 1384.5,446.0 C1368.7,448.4 1331.7,452.6 1321.1,453.9"/>
<path d="M1383.2,447.3 C1382.5,449.7 1378.8,457.8 1379.2,461.8 C1379.6,465.8 1384.7,469.6 1385.8,471.1"/>
<path d="M1471.6,526.5 C1474.2,522.1 1481.3,504.5 1487.5,500.1 C1493.7,495.7 1501.1,497.2 1508.6,500.1 C1516.1,503.0 1528.8,510.5 1532.3,517.3 C1535.8,524.1 1526.8,532.9 1529.7,541.0 C1532.6,549.1 1549.1,554.0 1549.5,566.1 C1549.9,578.2 1535.2,605.8 1532.3,613.7"/>
<path d="M1495.4,497.5 C1495.8,495.4 1493.2,486.6 1498.0,485.1 C1502.8,483.6 1520.0,487.8 1524.4,488.3"/>
<path d="M1618.2,475.0 C1617.3,484.2 1612.7,520.8 1612.9,530.5 C1613.1,540.2 1618.8,529.6 1619.5,533.1 C1620.2,536.6 1618.3,546.8 1616.8,551.6 C1615.2,556.5 1610.4,558.0 1610.2,562.2 C1610.0,566.4 1612.4,572.5 1615.5,576.7 C1618.6,580.9 1626.5,585.5 1628.7,587.3"/>
<path d="M1610.2,578.0 C1606.9,579.3 1595.5,578.6 1590.4,585.9 C1585.4,593.2 1583.0,615.2 1579.9,621.6 C1576.8,628.0 1573.2,623.8 1571.9,624.2"/>
<path d="M1571.9,625.5 C1571.5,627.5 1563.1,629.5 1569.3,637.4 C1575.5,645.3 1597.0,667.4 1608.9,673.1 C1620.8,678.8 1633.3,670.8 1640.6,671.7 C1647.9,672.6 1650.5,677.2 1652.5,678.3"/>
<path d="M1639.3,527.9 C1640.4,533.6 1640.4,554.3 1645.9,562.2 C1651.4,570.1 1663.0,569.2 1672.2,575.4 C1681.4,581.6 1692.3,593.8 1701.1,599.4 C1709.9,605.0 1718.8,606.3 1725.2,609.1 C1731.6,611.9 1732.4,612.7 1739.6,616.3 C1746.8,619.9 1759.3,624.7 1768.5,630.7 C1777.7,636.7 1786.6,648.0 1795.0,652.4 C1803.4,656.8 1815.0,656.4 1819.0,657.2"/>
<path d="M1321.1,453.9 C1319.3,452.1 1311.5,450.2 1310.6,443.4 C1309.7,436.6 1313.6,418.9 1315.8,413.0 C1318.0,407.1 1324.2,411.4 1323.8,407.7 C1323.4,404.0 1315.2,395.2 1313.2,390.6 C1311.2,386.0 1312.1,381.8 1311.9,380.0"/>
<path d="M1331.7,467.1 C1336.5,470.6 1356.5,479.1 1360.7,488.3 C1364.9,497.6 1361.2,516.0 1356.8,522.6 C1352.4,529.2 1338.9,523.5 1334.3,527.9 C1329.7,532.3 1332.1,542.4 1329.0,549.0 C1325.9,555.6 1318.0,564.4 1315.8,567.5"/>
<path d="M1389.8,380.0 C1390.5,381.8 1394.2,388.2 1393.7,390.6 C1393.2,393.0 1387.3,392.8 1387.1,394.5 C1386.9,396.2 1389.8,401.3 1392.4,401.1 C1395.1,400.9 1400.4,396.7 1403.0,393.2 C1405.6,389.7 1407.3,382.2 1408.2,380.0"/>
<path d="M1535.8,178.7 C1542.2,180.1 1567.6,183.5 1574.4,186.9 C1581.2,190.3 1570.0,193.9 1576.4,199.0 C1582.8,204.1 1605.1,212.6 1612.9,217.3 C1620.7,222.1 1621.7,224.6 1623.1,227.5 C1624.5,230.4 1614.7,232.4 1621.1,234.8 C1627.5,237.2 1652.2,238.2 1661.7,241.7 C1671.2,245.2 1670.1,252.5 1677.9,255.9 C1685.7,259.3 1703.0,259.3 1708.4,262.0 C1713.8,264.7 1711.4,265.7 1710.4,272.1 C1709.4,278.5 1707.0,295.2 1702.3,300.6 C1697.6,306.0 1684.7,302.2 1682.0,304.6 C1679.3,307.0 1677.2,310.7 1686.0,314.8 C1694.8,318.9 1725.3,325.6 1734.8,329.0 C1744.3,332.4 1751.7,332.4 1742.9,335.1 C1734.1,337.8 1703.0,340.8 1682.0,345.2 C1661.0,349.6 1633.9,359.5 1617.0,361.5 C1600.1,363.5 1586.6,358.1 1580.5,357.4"/>
<path d="M1369.3,310.7 C1381.5,310.0 1422.1,306.9 1442.4,306.6 C1462.7,306.3 1477.6,305.3 1491.1,308.7 C1504.6,312.1 1511.4,323.9 1523.6,327.0 C1535.8,330.1 1553.4,325.0 1564.2,327.0 C1575.0,329.0 1580.5,334.0 1588.6,339.1 C1596.7,344.2 1604.9,354.3 1613.0,357.4 C1621.1,360.4 1625.8,359.8 1637.3,357.4 C1648.8,355.0 1674.5,345.6 1682.0,343.2"/>
<path d="M1357.1,320.9 C1357.1,325.6 1355.1,343.2 1357.1,349.3 C1359.1,355.4 1363.2,351.3 1369.3,357.4 C1375.4,363.5 1390.3,379.0 1393.7,385.8 C1397.1,392.6 1387.6,400.0 1389.6,398.0 C1391.6,396.0 1392.9,379.1 1405.8,373.7 C1418.7,368.3 1452.6,365.5 1466.8,365.5 C1481.0,365.5 1482.0,373.7 1491.1,373.7 C1500.2,373.7 1516.2,369.9 1521.6,365.5 C1527.0,361.1 1513.1,348.7 1523.6,347.3 C1534.1,345.9 1574.3,355.7 1584.5,357.4"/>
<path d="M1332.7,320.9 L1327.2,321.0"/>
<path d="M1694.2,485.3 C1695.5,480.9 1696.9,464.8 1702.3,459.0 C1707.7,453.2 1722.5,452.2 1726.6,450.8"/>
<path d="M1619.0,475.2 L1615.0,519.8"/>
<path d="M1701.1,486.3 C1699.9,483.5 1693.5,473.4 1693.9,469.4 C1694.3,465.4 1698.3,465.8 1703.5,462.2 C1708.7,458.6 1715.2,449.2 1725.2,447.8 C1735.2,446.4 1750.9,453.4 1763.7,453.8 C1776.5,454.2 1787.8,445.6 1802.2,450.2 C1816.7,454.8 1837.6,474.3 1850.4,481.5 C1863.2,488.7 1871.0,488.7 1879.2,493.5 C1887.4,498.3 1896.5,502.0 1899.7,510.4 C1902.9,518.8 1898.3,533.7 1898.5,544.1 C1898.7,554.5 1902.2,564.2 1901.0,573.0 C1899.8,581.8 1899.3,584.6 1891.3,597.0 C1883.3,609.4 1863.6,637.2 1852.8,647.6 C1842.0,658.0 1831.3,653.2 1826.3,659.6 C1821.3,666.0 1823.3,681.7 1822.7,686.1"/>
<path d="M1851.6,450.2 L1898.5,443.0"/>
<path d="M1787.8,429.7 C1788.2,431.9 1789.8,438.8 1790.2,443.0 C1790.6,447.2 1790.0,453.0 1790.0,455.0"/>
<path d="M1821.5,481.5 C1825.9,483.1 1842.4,491.1 1848.0,491.1 C1853.6,491.1 1851.4,484.5 1855.2,481.5 C1859.0,478.5 1863.6,475.9 1870.8,473.1 C1878.0,470.3 1893.9,466.0 1898.5,464.6"/>
<path d="M1821.5,495.9 C1823.9,500.7 1832.7,517.2 1835.9,524.8 C1839.1,532.4 1837.1,536.9 1840.7,541.7 C1844.3,546.5 1854.0,549.7 1857.6,553.7 C1861.2,557.7 1862.8,559.7 1862.4,565.7 C1862.0,571.7 1859.6,581.0 1855.2,589.8 C1850.8,598.6 1841.5,612.3 1835.9,618.7 C1830.3,625.1 1823.8,624.8 1821.5,628.3 C1819.2,631.8 1821.9,638.0 1822.0,640.0"/>
<path d="M1820.3,544.1 L1811.8,652.4"/>
<path d="M1819.0,556.1 L1850.4,560.9"/>
<path d="M1819.0,565.7 L1896.1,579.0"/>
<path d="M1813.0,634.3 C1818.4,636.9 1837.7,640.6 1845.5,650.0 C1853.3,659.4 1857.6,684.1 1860.0,690.9"/>
<path d="M1802.2,645.2 C1803.8,644.0 1811.5,636.4 1812.0,638.0 C1812.5,639.6 1803.8,651.8 1805.0,655.0 C1806.2,658.2 1816.7,656.7 1819.0,657.0"/>
<path d="M1430.8,726.2 C1427.0,730.4 1410.9,745.1 1407.7,751.2 C1404.5,757.3 1406.8,757.7 1411.6,762.8 C1416.4,767.9 1431.5,778.4 1436.6,782.0 C1441.7,785.6 1441.4,784.2 1442.4,784.7"/>
<path d="M1437.1,723.6 C1453.2,734.5 1522.2,776.4 1534.0,788.8 C1545.8,801.2 1516.1,795.1 1508.0,798.1 C1499.9,801.1 1494.5,803.3 1485.6,806.8 C1476.7,810.3 1462.2,815.4 1454.5,819.3 C1446.8,823.2 1441.9,826.9 1439.6,830.4 C1437.3,833.9 1441.1,836.9 1440.9,840.4 C1440.7,843.9 1438.8,849.7 1438.4,851.6"/>
<path d="M1380.0,855.3 C1386.2,851.9 1407.6,836.7 1417.3,834.8 C1427.0,832.9 1434.9,842.5 1438.4,844.1"/>
<path d="M1442.1,830.4 C1450.0,830.2 1481.8,826.8 1489.3,829.2 C1496.8,831.6 1488.0,839.9 1487.0,845.0 C1486.0,850.1 1483.8,857.5 1483.1,860.0"/>
<path d="M1796.6,695.4 L1896.7,758.9"/>
<path d="M1685.0,770.5 C1688.8,772.2 1699.0,780.6 1708.0,780.9 C1717.0,781.2 1722.2,784.1 1738.9,772.4 C1755.6,760.7 1796.7,721.1 1808.2,710.8"/>
<path d="M1896.7,772.4 C1890.9,780.8 1868.8,808.4 1862.1,822.5 C1855.4,836.6 1864.0,837.2 1856.3,857.1 C1848.6,877.0 1831.0,918.0 1815.9,941.8 C1800.8,965.5 1783.8,974.2 1765.8,999.6 C1747.8,1025.0 1722.8,1079.2 1708.0,1094.0 C1693.2,1108.8 1688.1,1088.5 1677.2,1088.2 C1666.3,1087.9 1653.2,1089.1 1642.6,1092.0 C1632.0,1094.9 1618.5,1103.2 1613.7,1105.5"/>
<path d="M1438.5,849.4 C1446.2,848.1 1480.9,839.1 1484.7,841.7 C1488.5,844.3 1462.6,857.1 1461.6,864.8 C1460.6,872.5 1473.1,880.2 1478.9,887.9 C1484.7,895.6 1488.0,899.5 1496.3,911.0 C1504.6,922.5 1524.5,944.4 1529.0,957.2 C1533.5,970.0 1528.0,976.4 1523.2,988.0 C1518.4,999.6 1502.3,1013.7 1500.1,1026.6 C1497.8,1039.4 1516.8,1053.9 1509.7,1065.1 C1502.7,1076.3 1476.9,1098.8 1457.8,1094.0 C1438.7,1089.2 1409.2,1043.4 1395.0,1036.2 C1380.8,1029.0 1383.4,1047.0 1372.9,1051.0 C1362.4,1055.0 1346.4,1058.0 1332.2,1060.2 C1318.0,1062.4 1297.7,1064.8 1287.9,1063.9 C1278.1,1063.0 1275.7,1056.2 1273.2,1054.7"/>
<path d="M1291.6,986.3 C1303.3,973.1 1347.9,925.1 1361.8,906.9 C1375.7,888.7 1372.9,885.3 1374.8,877.3 C1376.7,869.3 1366.5,865.7 1372.9,858.9 C1379.4,852.1 1403.0,839.2 1413.5,836.7 C1424.0,834.2 1432.0,842.9 1435.7,844.1"/>
<path d="M1321.2,862.6 C1323.0,865.7 1325.4,874.9 1332.2,881.0 C1339.0,887.1 1356.9,896.4 1361.8,899.5"/>
<path d="M1347.0,866.3 L1372.9,858.9"/>
<path d="M1284.2,1014.0 C1282.4,1016.5 1280.6,1021.4 1273.2,1028.8 C1265.8,1036.2 1245.5,1053.5 1239.9,1058.4"/>
<path d="M1299.0,1025.1 L1300.9,1058.4"/>
<path d="M1099.5,958.6 C1102.0,957.1 1108.8,950.6 1114.3,949.4 C1119.8,948.2 1127.9,949.7 1132.8,951.2 C1137.7,952.7 1140.7,953.7 1143.8,958.6 C1146.9,963.5 1150.0,977.1 1151.2,980.8"/>
<path d="M1095.8,1017.7 C1095.2,1012.8 1091.5,998.1 1092.1,988.2 C1092.7,978.4 1098.3,963.5 1099.5,958.6"/>
<path d="M1846.0,775.0 C1846.7,773.8 1844.3,769.2 1850.0,768.0 C1855.7,766.8 1873.3,767.3 1880.0,768.0 C1886.7,768.7 1889.0,769.2 1890.0,772.0 C1891.0,774.8 1892.7,782.3 1886.0,785.0 C1879.3,787.7 1856.7,789.7 1850.0,788.0 C1843.3,786.3 1846.7,777.2 1846.0,775.0"/>
</g>
<g fill="none" stroke="#b8b8bc" stroke-width="1.5" stroke-dasharray="1.5 1.3">
<path d="M529.2,177.6 C528.7,178.8 525.7,181.7 526.0,184.5 C526.3,187.3 530.0,190.9 531.2,194.6 C532.4,198.3 528.8,204.1 533.2,206.7 C537.6,209.2 550.0,207.9 557.4,209.9 C564.8,211.9 572.9,216.0 577.6,218.8 C582.3,221.6 580.3,224.1 585.7,226.9 C591.1,229.7 603.3,234.0 610.0,235.7 C616.7,237.4 622.3,234.4 626.0,237.0 C629.7,239.6 628.6,246.6 632.0,251.0 C635.4,255.4 640.1,261.8 646.2,263.2 C652.3,264.6 666.4,261.9 668.4,259.2 C670.4,256.5 658.6,250.7 658.3,247.0 C658.0,243.3 655.6,239.3 666.4,237.0 C677.2,234.7 704.1,231.6 722.9,232.9 C741.7,234.2 767.6,243.7 779.4,245.0 C791.2,246.3 789.5,240.3 793.5,241.0 C797.5,241.7 792.5,247.4 803.6,249.0 C814.7,250.6 849.3,249.6 860.1,250.3 C870.9,251.0 860.1,251.6 868.2,253.1 C876.3,254.6 896.2,255.6 908.6,259.2 C921.0,262.8 938.2,270.5 942.9,274.5 C947.6,278.5 936.1,280.2 936.8,283.4 C937.5,286.6 942.5,289.8 946.9,293.5 C951.3,297.2 959.3,305.3 963.0,305.6 C966.7,305.9 962.0,297.9 969.1,295.5 C976.2,293.1 997.9,292.5 1005.4,291.5 C1012.9,290.5 1010.6,288.1 1014.2,289.3 C1017.9,290.5 1023.6,298.0 1027.3,298.6 C1031.0,299.2 1032.9,293.3 1036.6,293.0 C1040.3,292.7 1045.2,293.4 1049.6,296.8 C1053.9,300.2 1059.0,310.6 1062.7,313.5 C1066.4,316.4 1068.3,312.9 1072.0,314.5 C1075.7,316.1 1081.3,319.2 1085.0,322.8 C1088.7,326.4 1087.8,333.1 1094.3,335.9 C1100.8,338.7 1118.5,336.5 1124.1,339.6 C1129.7,342.7 1125.4,350.9 1127.9,354.5 C1130.4,358.1 1135.6,361.0 1139.0,361.0 C1142.4,361.0 1145.9,357.4 1148.4,354.5 C1150.9,351.6 1151.2,346.1 1154.0,343.3 C1156.8,340.5 1162.6,337.8 1165.1,337.8 C1167.6,337.8 1169.5,337.7 1168.9,343.3 C1168.3,348.9 1163.9,363.5 1161.4,371.3 C1158.9,379.1 1156.5,384.3 1154.0,389.9 C1151.5,395.5 1144.7,400.0 1146.5,404.8 C1148.3,409.6 1160.1,416.0 1165.1,418.8 C1170.1,421.6 1171.3,424.6 1176.3,421.6 C1181.3,418.7 1191.8,407.9 1194.9,401.1 C1198.0,394.3 1194.9,384.0 1194.9,380.6"/>
<path d="M470.6,360.1 C479.7,363.1 508.6,374.5 525.1,378.2 C541.6,381.9 552.7,375.9 569.5,382.3 C586.3,388.7 612.5,410.4 626.0,416.6 C639.5,422.9 634.1,411.1 650.3,419.8 C666.4,428.5 705.4,459.6 722.9,469.0 C740.4,478.4 741.8,470.9 755.2,476.3 C768.7,481.7 786.1,494.4 803.6,501.3 C821.1,508.2 845.5,513.6 860.0,517.9 C874.5,522.2 876.3,521.6 890.3,527.2 C904.3,532.8 930.2,543.4 943.8,551.7 C957.4,560.1 962.9,570.3 971.8,577.3 C980.7,584.3 991.8,589.1 997.4,593.6 C1003.0,598.1 1004.1,599.6 1005.5,604.0 C1006.9,608.4 1006.1,613.6 1005.5,620.0 C1004.9,626.4 1000.7,634.7 1001.7,642.1 C1002.7,649.5 1004.6,656.1 1011.6,664.4 C1018.6,672.7 1036.0,685.2 1043.9,691.8 C1051.8,698.4 1054.7,699.2 1058.8,704.2 C1062.9,709.2 1063.3,715.8 1068.7,721.6 C1074.1,727.4 1087.4,736.0 1091.1,738.9"/>
<path d="M997.4,336.3 C1001.7,336.9 1017.0,338.5 1023.0,339.8 C1029.0,341.1 1031.6,341.1 1033.5,344.4 C1035.4,347.7 1032.7,355.5 1034.6,359.6 C1036.5,363.7 1043.0,363.5 1045.1,368.9 C1047.2,374.3 1047.6,382.9 1047.4,392.2 C1047.2,401.5 1042.9,414.7 1043.9,424.8 C1044.9,434.9 1049.2,443.9 1053.2,452.7 C1057.2,461.5 1062.9,469.6 1068.2,477.5 C1073.5,485.4 1080.3,493.9 1085.0,499.8 C1089.7,505.7 1092.2,510.9 1096.2,512.9 C1100.2,514.9 1105.2,512.0 1109.2,512.0 C1113.2,512.0 1117.3,511.6 1120.4,512.9 C1123.5,514.2 1126.7,518.8 1127.9,520.0"/>
<path d="M1032.8,520.0 C1035.0,515.7 1040.2,501.3 1045.9,494.2 C1051.7,487.1 1063.7,480.3 1067.3,477.5"/>
<path d="M1111.1,509.2 C1114.2,505.8 1120.8,495.4 1129.7,488.7 C1138.6,482.0 1153.6,473.5 1164.2,469.1 C1174.8,464.8 1186.4,464.2 1193.1,462.6 C1199.8,461.1 1200.2,459.5 1204.2,459.8 C1208.2,460.1 1213.6,461.4 1217.3,464.4 C1221.0,467.3 1223.2,474.4 1226.6,477.5 C1230.0,480.6 1234.4,479.4 1237.8,483.1 C1241.2,486.8 1244.3,493.7 1247.1,499.8 C1249.9,505.9 1253.3,516.6 1254.6,520.0"/>
<path d="M1164.2,470.0 C1164.0,463.8 1161.6,441.5 1163.3,432.8 C1165.0,424.1 1171.3,424.7 1174.4,417.9 C1177.5,411.1 1180.2,399.2 1181.9,391.8 C1183.6,384.4 1182.8,378.2 1184.7,373.2 C1186.6,368.2 1189.5,365.1 1193.1,362.0 C1196.7,358.9 1202.7,355.4 1206.1,354.5 C1209.5,353.6 1209.2,355.5 1213.6,356.4 C1217.9,357.3 1225.4,360.6 1232.2,360.1 C1239.0,359.6 1250.7,356.4 1254.6,353.6 C1258.5,350.8 1257.1,346.2 1255.5,343.3 C1253.9,340.4 1247.4,339.0 1245.2,335.9 C1243.0,332.8 1242.2,327.5 1242.4,324.7 C1242.6,321.9 1247.0,321.0 1246.2,319.1 C1245.4,317.2 1240.5,315.4 1237.8,313.5 C1235.1,311.6 1228.4,312.2 1230.3,307.9 C1232.2,303.6 1245.9,290.9 1249.0,287.5"/>
<path d="M1209.8,375.0 L1245.2,379.7"/>
<path d="M1222.9,373.2 L1228.5,365.7"/>
<path d="M1213.6,380.6 C1216.7,381.5 1225.7,382.5 1232.2,386.2 C1238.7,389.9 1248.7,399.0 1252.7,403.0 C1256.7,407.0 1257.0,407.0 1256.4,410.4 C1255.8,413.8 1249.9,420.4 1249.0,423.5 C1248.1,426.6 1247.4,426.8 1250.8,429.0 C1254.2,431.2 1265.5,436.5 1269.5,436.5 C1273.5,436.5 1273.5,433.4 1275.0,429.0 C1276.5,424.6 1278.5,415.0 1278.8,410.4 C1279.1,405.8 1272.9,404.5 1276.9,401.1 C1280.9,397.7 1298.3,394.2 1303.0,389.9 C1307.7,385.5 1303.7,378.4 1304.9,375.0 C1306.1,371.6 1306.2,369.7 1310.4,369.4 C1314.6,369.1 1326.7,372.6 1330.0,373.2"/>
<path d="M1312.3,371.3 C1312.6,366.6 1311.7,351.7 1314.2,343.3 C1316.7,334.9 1325.0,324.7 1327.2,321.0"/>
<path d="M1252.7,452.3 C1254.2,457.1 1259.5,473.9 1262.0,481.2 C1264.5,488.5 1266.7,493.6 1267.6,496.1"/>
<path d="M1310.4,382.5 C1311.7,386.5 1315.4,402.1 1317.9,406.7 C1320.4,411.3 1325.9,406.0 1325.3,410.4 C1324.7,414.8 1316.7,424.7 1314.2,432.8 C1311.7,440.9 1309.8,453.3 1310.4,458.9 C1311.0,464.5 1314.6,465.4 1317.9,466.3 C1321.2,467.2 1328.0,464.4 1330.0,464.0"/>
<path d="M1306.7,444.0 C1306.7,446.5 1305.8,455.5 1306.7,458.9 C1307.6,462.3 1311.4,463.5 1312.3,464.4"/>
<path d="M998.5,594.7 C1001.8,594.3 1009.2,593.2 1018.3,592.4 C1027.4,591.6 1046.2,590.9 1053.2,590.1 C1060.2,589.3 1055.8,588.9 1060.0,587.8 C1064.2,586.7 1073.9,584.4 1078.7,583.7 C1083.5,583.0 1086.9,583.7 1088.6,583.7"/>
<path d="M1018.3,592.4 C1020.2,582.3 1027.7,543.9 1030.0,531.9 C1032.3,519.9 1029.6,525.6 1032.3,520.2 C1035.0,514.8 1042.8,505.1 1046.3,499.3 C1049.8,493.5 1050.9,488.4 1053.2,485.3 C1055.5,482.2 1058.9,481.5 1060.0,480.7"/>
<path d="M1031.1,531.9 C1031.5,535.0 1030.2,541.2 1033.5,550.5 C1036.8,559.8 1046.5,580.4 1050.9,587.8 C1055.3,595.2 1051.2,589.4 1060.0,594.7 C1068.8,600.0 1093.2,613.9 1103.5,619.7 C1113.8,625.5 1119.0,628.0 1122.1,629.7"/>
<path d="M1050.9,587.8 L1060.0,573.8"/>
<path d="M1006.7,536.5 L1025.3,541.2"/>
<path d="M880.0,770.0 C886.2,768.1 904.5,768.1 917.3,758.8 C930.1,749.5 947.5,722.2 957.0,714.1 C966.5,706.0 963.6,710.8 974.4,710.4 C985.2,710.0 1010.8,713.5 1021.6,711.6 C1032.4,709.7 1033.6,702.9 1039.0,699.2 C1044.4,695.5 1048.0,689.9 1053.8,689.3 C1059.6,688.7 1066.7,693.4 1073.7,695.5 C1080.7,697.6 1092.3,700.7 1096.0,701.7"/>
<path d="M1180.0,629.7 C1174.7,633.4 1159.3,641.6 1148.2,652.0 C1137.1,662.4 1123.3,679.0 1113.4,691.8 C1103.5,704.6 1097.7,714.1 1088.6,729.0 C1079.5,743.9 1068.7,760.9 1058.8,781.2 C1048.9,801.5 1040.6,830.9 1029.0,850.7 C1017.4,870.5 1010.8,875.0 989.3,899.9 C967.8,924.8 918.5,979.6 900.0,1000.0 C881.5,1020.4 890.9,1009.4 878.4,1022.5 C865.9,1035.6 843.3,1063.7 824.7,1078.4 C806.1,1093.1 776.3,1105.2 766.6,1110.6"/>
<path d="M878.4,1022.5 C879.9,1023.6 885.8,1021.4 887.3,1029.2 C888.8,1037.0 884.7,1058.7 887.3,1069.5 C889.9,1080.3 900.4,1089.9 903.0,1094.0"/>
<path d="M1006.7,851.9 C1012.5,845.3 1034.4,821.5 1041.4,812.2 C1048.4,802.9 1047.2,802.0 1048.9,796.0 C1050.6,790.0 1049.6,782.4 1051.4,776.2 C1053.2,770.0 1054.2,768.3 1060.0,758.8 C1065.8,749.3 1078.5,729.4 1086.0,719.0 C1093.5,708.6 1101.6,700.4 1104.7,696.7"/>
<path d="M1073.7,823.4 L1086.1,797.3"/>
<path d="M1041.4,812.2 C1046.8,814.3 1065.4,819.0 1073.7,824.6 C1082.0,830.2 1088.0,833.2 1091.1,845.7 C1094.2,858.2 1092.1,886.0 1092.3,899.9 C1092.5,913.8 1094.0,919.3 1092.1,929.1 C1090.2,938.9 1085.0,949.4 1081.0,958.6 C1077.0,967.8 1070.5,975.9 1068.1,984.5 C1065.6,993.1 1064.1,1004.1 1066.3,1010.3 C1068.5,1016.4 1077.3,1020.5 1081.0,1021.4 C1084.7,1022.3 1087.2,1016.8 1088.4,1015.9"/>
<path d="M1086.1,873.0 C1088.2,873.0 1094.8,870.9 1098.5,873.0 C1102.2,875.1 1106.2,881.0 1108.5,885.5 C1110.8,890.0 1111.2,897.6 1112.2,899.9 C1113.2,902.2 1112.1,899.0 1114.3,899.5 C1116.5,900.0 1119.2,902.9 1125.4,903.2 C1131.6,903.5 1146.3,898.9 1151.2,901.4 C1156.1,903.9 1157.4,911.5 1154.9,918.0 C1152.5,924.5 1137.7,934.0 1136.5,940.1 C1135.3,946.2 1145.7,949.4 1147.5,954.9 C1149.3,960.4 1145.7,969.1 1147.5,973.4 C1149.3,977.7 1150.6,979.9 1158.6,980.8 C1166.6,981.7 1180.2,978.0 1195.6,978.9 C1211.0,979.8 1238.7,983.5 1251.0,986.3 C1263.3,989.1 1264.0,991.0 1269.5,995.6 C1275.0,1000.2 1281.1,1014.0 1284.2,1014.0 C1287.3,1014.0 1289.1,1003.0 1287.9,995.6 C1286.7,988.2 1280.5,972.8 1276.8,969.7 C1273.1,966.6 1267.6,972.9 1265.8,977.1 C1264.0,981.3 1265.8,992.0 1265.8,995.0"/>
<path d="M1042.7,701.7 C1042.1,707.1 1038.7,727.2 1038.9,734.0 C1039.1,740.8 1043.1,741.2 1043.9,742.7"/>
<path d="M1225.0,668.0 C1227.6,670.5 1233.7,677.2 1240.4,683.2 C1247.2,689.2 1257.6,700.0 1265.5,704.2 C1273.4,708.4 1280.2,704.6 1287.9,708.3 C1295.6,712.0 1307.7,723.5 1311.7,726.5"/>
<path d="M1047.6,704.2 L1053.8,721.6"/>
<path d="M450.5,772.1 C457.0,773.6 474.7,776.2 489.4,781.1 C504.1,786.0 510.3,794.9 538.6,801.2 C566.9,807.5 630.2,817.1 659.3,819.0 C688.4,820.9 676.2,820.6 713.0,812.4 C749.8,804.2 852.2,777.1 880.0,770.0"/>
<path d="M1131.3,660.0 C1138.8,654.9 1163.1,637.0 1176.3,629.3 C1189.5,621.6 1198.1,619.7 1210.5,613.7 C1222.9,607.8 1236.3,599.0 1250.8,593.6 C1265.3,588.2 1279.2,584.7 1297.4,581.1 C1315.6,577.5 1346.4,572.5 1360.0,571.8 C1373.6,571.1 1370.3,575.5 1379.2,576.7 C1388.1,578.0 1388.0,573.1 1413.5,579.3 C1439.0,585.5 1505.9,606.2 1532.3,613.7 C1558.7,621.2 1544.0,616.3 1571.9,624.2 C1599.9,632.1 1662.3,649.3 1700.0,661.2 C1737.7,673.1 1768.9,690.1 1798.0,695.4 C1827.1,700.6 1859.2,691.2 1874.6,692.7 C1890.0,694.2 1887.8,702.6 1890.5,704.6"/>
<path d="M1318.5,570.1 C1327.3,570.0 1361.2,568.7 1371.3,569.6 C1381.4,570.5 1378.3,572.2 1379.2,575.4 C1380.1,578.6 1380.6,584.6 1376.6,588.6 C1372.6,592.6 1359.2,595.2 1355.4,599.1 C1351.7,603.0 1350.1,601.7 1354.1,612.3 C1358.1,622.9 1366.2,644.5 1379.2,662.5 C1392.2,680.5 1422.3,709.8 1432.0,720.0 C1441.7,730.2 1436.2,723.0 1437.1,723.6"/>
<path d="M1449.2,585.9 C1452.5,576.2 1465.7,543.3 1469.0,527.9 C1472.3,512.5 1470.3,502.8 1469.0,493.5 C1467.7,484.2 1465.8,479.2 1461.0,472.4 C1456.2,465.6 1447.5,458.1 1440.0,452.6 C1432.5,447.1 1425.5,440.5 1416.2,439.4 C1407.0,438.3 1400.3,443.6 1384.5,446.0 C1368.7,448.4 1331.7,452.6 1321.1,453.9"/>
<path d="M1383.2,447.3 C1382.5,449.7 1378.8,457.8 1379.2,461.8 C1379.6,465.8 1384.7,469.6 1385.8,471.1"/>
<path d="M1471.6,526.5 C1474.2,522.1 1481.3,504.5 1487.5,500.1 C1493.7,495.7 1501.1,497.2 1508.6,500.1 C1516.1,503.0 1528.8,510.5 1532.3,517.3 C1535.8,524.1 1526.8,532.9 1529.7,541.0 C1532.6,549.1 1549.1,554.0 1549.5,566.1 C1549.9,578.2 1535.2,605.8 1532.3,613.7"/>
<path d="M1495.4,497.5 C1495.8,495.4 1493.2,486.6 1498.0,485.1 C1502.8,483.6 1520.0,487.8 1524.4,488.3"/>
<path d="M1618.2,475.0 C1617.3,484.2 1612.7,520.8 1612.9,530.5 C1613.1,540.2 1618.8,529.6 1619.5,533.1 C1620.2,536.6 1618.3,546.8 1616.8,551.6 C1615.2,556.5 1610.4,558.0 1610.2,562.2 C1610.0,566.4 1612.4,572.5 1615.5,576.7 C1618.6,580.9 1626.5,585.5 1628.7,587.3"/>
<path d="M1610.2,578.0 C1606.9,579.3 1595.5,578.6 1590.4,585.9 C1585.4,593.2 1583.0,615.2 1579.9,621.6 C1576.8,628.0 1573.2,623.8 1571.9,624.2"/>
<path d="M1571.9,625.5 C1571.5,627.5 1563.1,629.5 1569.3,637.4 C1575.5,645.3 1597.0,667.4 1608.9,673.1 C1620.8,678.8 1633.3,670.8 1640.6,671.7 C1647.9,672.6 1650.5,677.2 1652.5,678.3"/>
<path d="M1639.3,527.9 C1640.4,533.6 1640.4,554.3 1645.9,562.2 C1651.4,570.1 1663.0,569.2 1672.2,575.4 C1681.4,581.6 1692.3,593.8 1701.1,599.4 C1709.9,605.0 1718.8,606.3 1725.2,609.1 C1731.6,611.9 1732.4,612.7 1739.6,616.3 C1746.8,619.9 1759.3,624.7 1768.5,630.7 C1777.7,636.7 1786.6,648.0 1795.0,652.4 C1803.4,656.8 1815.0,656.4 1819.0,657.2"/>
<path d="M1321.1,453.9 C1319.3,452.1 1311.5,450.2 1310.6,443.4 C1309.7,436.6 1313.6,418.9 1315.8,413.0 C1318.0,407.1 1324.2,411.4 1323.8,407.7 C1323.4,404.0 1315.2,395.2 1313.2,390.6 C1311.2,386.0 1312.1,381.8 1311.9,380.0"/>
<path d="M1331.7,467.1 C1336.5,470.6 1356.5,479.1 1360.7,488.3 C1364.9,497.6 1361.2,516.0 1356.8,522.6 C1352.4,529.2 1338.9,523.5 1334.3,527.9 C1329.7,532.3 1332.1,542.4 1329.0,549.0 C1325.9,555.6 1318.0,564.4 1315.8,567.5"/>
<path d="M1389.8,380.0 C1390.5,381.8 1394.2,388.2 1393.7,390.6 C1393.2,393.0 1387.3,392.8 1387.1,394.5 C1386.9,396.2 1389.8,401.3 1392.4,401.1 C1395.1,400.9 1400.4,396.7 1403.0,393.2 C1405.6,389.7 1407.3,382.2 1408.2,380.0"/>
<path d="M1535.8,178.7 C1542.2,180.1 1567.6,183.5 1574.4,186.9 C1581.2,190.3 1570.0,193.9 1576.4,199.0 C1582.8,204.1 1605.1,212.6 1612.9,217.3 C1620.7,222.1 1621.7,224.6 1623.1,227.5 C1624.5,230.4 1614.7,232.4 1621.1,234.8 C1627.5,237.2 1652.2,238.2 1661.7,241.7 C1671.2,245.2 1670.1,252.5 1677.9,255.9 C1685.7,259.3 1703.0,259.3 1708.4,262.0 C1713.8,264.7 1711.4,265.7 1710.4,272.1 C1709.4,278.5 1707.0,295.2 1702.3,300.6 C1697.6,306.0 1684.7,302.2 1682.0,304.6 C1679.3,307.0 1677.2,310.7 1686.0,314.8 C1694.8,318.9 1725.3,325.6 1734.8,329.0 C1744.3,332.4 1751.7,332.4 1742.9,335.1 C1734.1,337.8 1703.0,340.8 1682.0,345.2 C1661.0,349.6 1633.9,359.5 1617.0,361.5 C1600.1,363.5 1586.6,358.1 1580.5,357.4"/>
<path d="M1369.3,310.7 C1381.5,310.0 1422.1,306.9 1442.4,306.6 C1462.7,306.3 1477.6,305.3 1491.1,308.7 C1504.6,312.1 1511.4,323.9 1523.6,327.0 C1535.8,330.1 1553.4,325.0 1564.2,327.0 C1575.0,329.0 1580.5,334.0 1588.6,339.1 C1596.7,344.2 1604.9,354.3 1613.0,357.4 C1621.1,360.4 1625.8,359.8 1637.3,357.4 C1648.8,355.0 1674.5,345.6 1682.0,343.2"/>
<path d="M1357.1,320.9 C1357.1,325.6 1355.1,343.2 1357.1,349.3 C1359.1,355.4 1363.2,351.3 1369.3,357.4 C1375.4,363.5 1390.3,379.0 1393.7,385.8 C1397.1,392.6 1387.6,400.0 1389.6,398.0 C1391.6,396.0 1392.9,379.1 1405.8,373.7 C1418.7,368.3 1452.6,365.5 1466.8,365.5 C1481.0,365.5 1482.0,373.7 1491.1,373.7 C1500.2,373.7 1516.2,369.9 1521.6,365.5 C1527.0,361.1 1513.1,348.7 1523.6,347.3 C1534.1,345.9 1574.3,355.7 1584.5,357.4"/>
<path d="M1332.7,320.9 L1327.2,321.0"/>
<path d="M1694.2,485.3 C1695.5,480.9 1696.9,464.8 1702.3,459.0 C1707.7,453.2 1722.5,452.2 1726.6,450.8"/>
<path d="M1619.0,475.2 L1615.0,519.8"/>
<path d="M1701.1,486.3 C1699.9,483.5 1693.5,473.4 1693.9,469.4 C1694.3,465.4 1698.3,465.8 1703.5,462.2 C1708.7,458.6 1715.2,449.2 1725.2,447.8 C1735.2,446.4 1750.9,453.4 1763.7,453.8 C1776.5,454.2 1787.8,445.6 1802.2,450.2 C1816.7,454.8 1837.6,474.3 1850.4,481.5 C1863.2,488.7 1871.0,488.7 1879.2,493.5 C1887.4,498.3 1896.5,502.0 1899.7,510.4 C1902.9,518.8 1898.3,533.7 1898.5,544.1 C1898.7,554.5 1902.2,564.2 1901.0,573.0 C1899.8,581.8 1899.3,584.6 1891.3,597.0 C1883.3,609.4 1863.6,637.2 1852.8,647.6 C1842.0,658.0 1831.3,653.2 1826.3,659.6 C1821.3,666.0 1823.3,681.7 1822.7,686.1"/>
<path d="M1851.6,450.2 L1898.5,443.0"/>
<path d="M1787.8,429.7 C1788.2,431.9 1789.8,438.8 1790.2,443.0 C1790.6,447.2 1790.0,453.0 1790.0,455.0"/>
<path d="M1821.5,481.5 C1825.9,483.1 1842.4,491.1 1848.0,491.1 C1853.6,491.1 1851.4,484.5 1855.2,481.5 C1859.0,478.5 1863.6,475.9 1870.8,473.1 C1878.0,470.3 1893.9,466.0 1898.5,464.6"/>
<path d="M1821.5,495.9 C1823.9,500.7 1832.7,517.2 1835.9,524.8 C1839.1,532.4 1837.1,536.9 1840.7,541.7 C1844.3,546.5 1854.0,549.7 1857.6,553.7 C1861.2,557.7 1862.8,559.7 1862.4,565.7 C1862.0,571.7 1859.6,581.0 1855.2,589.8 C1850.8,598.6 1841.5,612.3 1835.9,618.7 C1830.3,625.1 1823.8,624.8 1821.5,628.3 C1819.2,631.8 1821.9,638.0 1822.0,640.0"/>
<path d="M1820.3,544.1 L1811.8,652.4"/>
<path d="M1819.0,556.1 L1850.4,560.9"/>
<path d="M1819.0,565.7 L1896.1,579.0"/>
<path d="M1813.0,634.3 C1818.4,636.9 1837.7,640.6 1845.5,650.0 C1853.3,659.4 1857.6,684.1 1860.0,690.9"/>
<path d="M1802.2,645.2 C1803.8,644.0 1811.5,636.4 1812.0,638.0 C1812.5,639.6 1803.8,651.8 1805.0,655.0 C1806.2,658.2 1816.7,656.7 1819.0,657.0"/>
<path d="M1430.8,726.2 C1427.0,730.4 1410.9,745.1 1407.7,751.2 C1404.5,757.3 1406.8,757.7 1411.6,762.8 C1416.4,767.9 1431.5,778.4 1436.6,782.0 C1441.7,785.6 1441.4,784.2 1442.4,784.7"/>
<path d="M1437.1,723.6 C1453.2,734.5 1522.2,776.4 1534.0,788.8 C1545.8,801.2 1516.1,795.1 1508.0,798.1 C1499.9,801.1 1494.5,803.3 1485.6,806.8 C1476.7,810.3 1462.2,815.4 1454.5,819.3 C1446.8,823.2 1441.9,826.9 1439.6,830.4 C1437.3,833.9 1441.1,836.9 1440.9,840.4 C1440.7,843.9 1438.8,849.7 1438.4,851.6"/>
<path d="M1380.0,855.3 C1386.2,851.9 1407.6,836.7 1417.3,834.8 C1427.0,832.9 1434.9,842.5 1438.4,844.1"/>
<path d="M1442.1,830.4 C1450.0,830.2 1481.8,826.8 1489.3,829.2 C1496.8,831.6 1488.0,839.9 1487.0,845.0 C1486.0,850.1 1483.8,857.5 1483.1,860.0"/>
<path d="M1796.6,695.4 L1896.7,758.9"/>
<path d="M1685.0,770.5 C1688.8,772.2 1699.0,780.6 1708.0,780.9 C1717.0,781.2 1722.2,784.1 1738.9,772.4 C1755.6,760.7 1796.7,721.1 1808.2,710.8"/>
<path d="M1896.7,772.4 C1890.9,780.8 1868.8,808.4 1862.1,822.5 C1855.4,836.6 1864.0,837.2 1856.3,857.1 C1848.6,877.0 1831.0,918.0 1815.9,941.8 C1800.8,965.5 1783.8,974.2 1765.8,999.6 C1747.8,1025.0 1722.8,1079.2 1708.0,1094.0 C1693.2,1108.8 1688.1,1088.5 1677.2,1088.2 C1666.3,1087.9 1653.2,1089.1 1642.6,1092.0 C1632.0,1094.9 1618.5,1103.2 1613.7,1105.5"/>
<path d="M1438.5,849.4 C1446.2,848.1 1480.9,839.1 1484.7,841.7 C1488.5,844.3 1462.6,857.1 1461.6,864.8 C1460.6,872.5 1473.1,880.2 1478.9,887.9 C1484.7,895.6 1488.0,899.5 1496.3,911.0 C1504.6,922.5 1524.5,944.4 1529.0,957.2 C1533.5,970.0 1528.0,976.4 1523.2,988.0 C1518.4,999.6 1502.3,1013.7 1500.1,1026.6 C1497.8,1039.4 1516.8,1053.9 1509.7,1065.1 C1502.7,1076.3 1476.9,1098.8 1457.8,1094.0 C1438.7,1089.2 1409.2,1043.4 1395.0,1036.2 C1380.8,1029.0 1383.4,1047.0 1372.9,1051.0 C1362.4,1055.0 1346.4,1058.0 1332.2,1060.2 C1318.0,1062.4 1297.7,1064.8 1287.9,1063.9 C1278.1,1063.0 1275.7,1056.2 1273.2,1054.7"/>
<path d="M1291.6,986.3 C1303.3,973.1 1347.9,925.1 1361.8,906.9 C1375.7,888.7 1372.9,885.3 1374.8,877.3 C1376.7,869.3 1366.5,865.7 1372.9,858.9 C1379.4,852.1 1403.0,839.2 1413.5,836.7 C1424.0,834.2 1432.0,842.9 1435.7,844.1"/>
<path d="M1321.2,862.6 C1323.0,865.7 1325.4,874.9 1332.2,881.0 C1339.0,887.1 1356.9,896.4 1361.8,899.5"/>
<path d="M1347.0,866.3 L1372.9,858.9"/>
<path d="M1284.2,1014.0 C1282.4,1016.5 1280.6,1021.4 1273.2,1028.8 C1265.8,1036.2 1245.5,1053.5 1239.9,1058.4"/>
<path d="M1299.0,1025.1 L1300.9,1058.4"/>
<path d="M1099.5,958.6 C1102.0,957.1 1108.8,950.6 1114.3,949.4 C1119.8,948.2 1127.9,949.7 1132.8,951.2 C1137.7,952.7 1140.7,953.7 1143.8,958.6 C1146.9,963.5 1150.0,977.1 1151.2,980.8"/>
<path d="M1095.8,1017.7 C1095.2,1012.8 1091.5,998.1 1092.1,988.2 C1092.7,978.4 1098.3,963.5 1099.5,958.6"/>
<path d="M1846.0,775.0 C1846.7,773.8 1844.3,769.2 1850.0,768.0 C1855.7,766.8 1873.3,767.3 1880.0,768.0 C1886.7,768.7 1889.0,769.2 1890.0,772.0 C1891.0,774.8 1892.7,782.3 1886.0,785.0 C1879.3,787.7 1856.7,789.7 1850.0,788.0 C1843.3,786.3 1846.7,777.2 1846.0,775.0"/>
</g>
<g fill="url(#wp)" stroke="#1f2f60" stroke-width="1">
<path d="M1784.9,476.3 C1786.9,475.2 1797.7,478.5 1803.4,480.3 C1809.1,482.1 1817.7,484.3 1819.2,486.9 C1820.7,489.5 1816.6,494.6 1812.6,496.1 C1808.6,497.6 1798.9,497.6 1795.4,496.1 C1791.9,494.6 1793.2,490.2 1791.5,486.9 C1789.8,483.6 1782.9,477.4 1784.9,476.3Z"/>
<path d="M1728.2,593.3 C1730.8,592.8 1733.5,599.4 1734.7,603.0 C1735.9,606.6 1738.1,614.4 1735.5,614.9 C1732.9,615.4 1720.1,609.3 1718.9,605.7 C1717.7,602.1 1725.6,593.8 1728.2,593.3Z"/>
<path d="M1718.9,559.5 C1720.2,558.8 1729.1,566.5 1729.5,568.7 C1729.9,570.9 1723.3,574.2 1721.5,572.7 C1719.7,571.2 1717.6,560.2 1718.9,559.5Z"/>
<path d="M1713.6,543.6 C1713.4,542.5 1720.0,538.2 1721.5,538.4 C1723.0,538.6 1724.2,544.1 1722.9,545.0 C1721.6,545.9 1713.8,544.7 1713.6,543.6Z"/>
<path d="M1796.8,655.8 C1798.6,655.1 1817.2,658.5 1819.2,659.8 C1821.2,661.1 1812.3,664.4 1808.6,663.7 C1804.9,663.0 1795.0,656.4 1796.8,655.8Z"/>
<path d="M1857.5,671.6 C1858.3,671.0 1862.9,672.5 1866.0,673.0 C1869.1,673.5 1874.6,673.4 1876.0,674.3 C1877.4,675.2 1877.0,677.8 1874.6,678.2 C1872.2,678.6 1864.2,678.0 1861.4,676.9 C1858.6,675.8 1856.7,672.2 1857.5,671.6Z"/>
<path d="M1556.6,410.4 C1558.1,412.1 1563.8,426.6 1564.5,430.1 C1565.2,433.6 1562.1,433.2 1560.6,431.5 C1559.1,429.8 1556.0,423.1 1555.3,419.6 C1554.6,416.1 1555.1,408.6 1556.6,410.4Z"/>
<path d="M1433.3,549.0 C1434.8,549.0 1441.5,564.4 1441.3,567.5 C1441.1,570.6 1433.3,570.6 1432.0,567.5 C1430.7,564.4 1431.8,549.0 1433.3,549.0Z"/>
<path d="M1588.3,581.9 C1587.2,580.6 1603.7,570.7 1608.1,570.0 C1612.5,569.3 1618.0,575.9 1614.7,577.9 C1611.4,579.9 1589.4,583.2 1588.3,581.9Z"/>
<path d="M1418.8,451.3 C1420.2,451.5 1428.6,456.0 1428.8,456.6 C1429.0,457.2 1421.8,456.1 1420.1,455.2 C1418.4,454.3 1417.3,451.1 1418.8,451.3Z"/>
<path d="M1326.0,470.0 C1327.2,468.5 1332.5,467.8 1334.0,469.0 C1335.5,470.2 1336.2,475.5 1335.0,477.0 C1333.8,478.5 1328.5,479.2 1327.0,478.0 C1325.5,476.8 1324.8,471.5 1326.0,470.0Z"/>
<path d="M1822.0,706.0 C1822.8,705.7 1827.8,708.2 1828.0,709.0 C1828.2,709.8 1824.0,711.5 1823.0,711.0 C1822.0,710.5 1821.2,706.3 1822.0,706.0Z"/>
<path d="M1855.0,715.0 C1855.5,714.7 1858.8,718.0 1859.0,719.0 C1859.2,720.0 1856.7,721.7 1856.0,721.0 C1855.3,720.3 1854.5,715.3 1855.0,715.0Z"/>
<path d="M1882.0,727.0 C1882.5,726.5 1885.8,729.0 1886.0,730.0 C1886.2,731.0 1883.7,733.5 1883.0,733.0 C1882.3,732.5 1881.5,727.5 1882.0,727.0Z"/>
<path d="M1814.0,737.0 C1814.5,736.5 1819.5,739.8 1820.0,741.0 C1820.5,742.2 1818.0,744.7 1817.0,744.0 C1816.0,743.3 1813.5,737.5 1814.0,737.0Z"/>
</g>
<circle cx="1760" cy="434.5" r="7.0" fill="#fff"/><circle cx="1760" cy="434.5" r="4.5" fill="url(#wp)" stroke="#1f2f60" stroke-width="1"/>
<circle cx="1870.8" cy="472.6" r="5.0" fill="#fff"/><circle cx="1870.8" cy="472.6" r="2.5" fill="url(#wp)" stroke="#1f2f60" stroke-width="1"/>
<circle cx="1419.6" cy="436.2" r="5.0" fill="#fff"/><circle cx="1419.6" cy="436.2" r="2.5" fill="url(#wp)" stroke="#1f2f60" stroke-width="1"/>
<circle cx="1183" cy="556.5" r="5.3" fill="#438544" stroke="#fff" stroke-width="0.8"/>
<circle cx="1208" cy="655" r="5.3" fill="#438544" stroke="#fff" stroke-width="0.8"/>
<circle cx="1437" cy="723.5" r="5.3" fill="#438544" stroke="#fff" stroke-width="0.8"/>
<circle cx="1444.5" cy="847.5" r="5.3" fill="#438544" stroke="#fff" stroke-width="0.8"/>
<circle cx="1291.5" cy="1015.5" r="5.3" fill="#438544" stroke="#fff" stroke-width="0.8"/>
<circle cx="1877" cy="751.5" r="5.3" fill="#438544" stroke="#fff" stroke-width="0.8"/>
<g font-family="Liberation Sans" font-size="13px" fill="#fff" stroke="#555" stroke-width="2.4" paint-order="stroke" stroke-linejoin="round">
<text x="1187" y="551.0">Swellendam</text>
<text x="1212" y="649.5">Railton</text>
<text x="1441" y="718.0">Bontebok National Park Entrance Gate</text>
<text x="1448.5" y="842.0">Bontebok National Park Reception &amp; Shop</text>
<text x="1295.5" y="1010.0">Lang Elsies Kraal Rest Camp</text>
<text x="1881" y="746.0">Buffeljagsrivier</text>
</g>
</svg></div>
  <div id="status" class="a">
<div class="a st" style="left:955px;color:#1a1ae6;text-decoration:underline">There is a new plugin available</div>
<div class="a" style="left:1143px;top:6px;width:20px;height:20px;border:1px solid #9c9c9c;background:linear-gradient(#fafafa,#e2e2e2)"><svg width="20" height="20" style="position:absolute;left:0;top:0"><circle cx="9.5" cy="8" r="4.5" fill="none" stroke="#222" stroke-width="1.6"/><circle cx="10.5" cy="12.5" r="3.5" fill="none" stroke="#333" stroke-width="1.6"/><path d="M6,4l8,10" stroke="#222" stroke-width="1.2"/></svg></div>
<div class="a st" style="left:1172px">Coordinate:</div>
<div class="a" style="left:1249px;top:6px;width:300px;height:20px;background:#fff;border:1px solid #8e8e8e;border-top-color:#777;font-size:13px;text-align:center;padding-top:2px;color:#111">20.4369,-34.0285</div>
<div class="a st" style="left:1558px">Scale</div>
<div class="a" style="left:1604px;top:10px;width:94px;height:15px;background:#fff;border:1px solid #999;border-radius:2px 4px 4px 2px;font-size:13px;padding-left:2px;line-height:15px;color:#111">1:23396<div class="a" style="left:78px;top:0;width:14px;height:13px;border-left:1px solid #bbb"><svg width="14" height="13" style="position:absolute;left:0;top:0"><path d="M3.5,5.5h6l-3,4z" fill="#444"/></svg></div></div>
<div class="a" style="left:1704px;top:7px;width:20px;height:20px;border:1px solid #9c9c9c;background:linear-gradient(#fafafa,#e2e2e2)"><svg width="20" height="20" style="position:absolute;left:0;top:0"><path d="M3,17 l10,-10 l3,-4 l-1,5 l-10,10z" fill="#777" stroke="#444" stroke-width="0.6"/><circle cx="6.5" cy="6" r="3.6" fill="none" stroke="#e03030" stroke-width="1.3"/><path d="M4,3.5l5,5" stroke="#e03030" stroke-width="1.3"/></svg></div>
<div class="a" style="left:1731px;top:10px;width:13px;height:13px;border:1px solid #2d3540;border-radius:2px;background:linear-gradient(#f4f6f9,#aab6c2)"><svg width="16" height="16" style="position:absolute;left:-1px;top:-4px"><path d="M3.5,9.5 l3,3.4 l6.5,-10.4" fill="none" stroke="#1b2633" stroke-width="2.1" stroke-linecap="round" stroke-linejoin="round"/></svg></div>
<div class="a st" style="left:1748px">Render</div>
<div class="a st" style="left:1796px;color:#444">EPSG:4326</div>
<div class="a" style="left:1874px;top:7px;width:20px;height:19px;border:1px solid #9c9c9c;background:linear-gradient(#fafafa,#e2e2e2)"><svg width="20" height="19" style="position:absolute;left:0;top:0"><circle cx="9.5" cy="9" r="6" fill="none" stroke="#888" stroke-width="1.5"/><path d="M9.5,2v14M2.5,9h14" stroke="#888" stroke-width="1.2"/><circle cx="9.5" cy="9" r="2.5" fill="none" stroke="#888" stroke-width="1"/></svg></div>
<svg class="a" style="left:1906px;top:20px" width="13" height="12"><path d="M12,2 L2,12 M12,6 L6,12 M12,10 L10,12" stroke="#b0b0b0" stroke-width="1"/></svg>
</div>
  <div id="tabs">
    <div class="a tab" style="left:130px;width:60px;background:linear-gradient(#9a9a9a,#808080);color:#fff;border:1px solid #6f6f6f;border-radius:4px 0 0 4px">Layers</div>
    <div class="a tab" style="left:190px;width:71px;background:linear-gradient(#ffffff,#f0f0f0);color:#111;border:1px solid #9a9a9a;border-left:none;border-radius:0 4px 4px 0;padding-left:4px">Browser</div>
  </div>
</div>
<svg class="a" style="left:0;top:0;position:absolute" width="2034" height="600"><defs><linearGradient id="pressed" x1="0" y1="0" x2="0" y2="1"><stop offset="0" stop-color="#c2c2c2"/><stop offset="1" stop-color="#b3b3b3"/></linearGradient></defs><rect x="64.8" y="64.0" width="2" height="2" fill="#b9b9b9"/><rect x="65.8" y="65.0" width="1.5" height="1.5" fill="#fbfbfb"/><rect x="67.8" y="67.0" width="2" height="2" fill="#b9b9b9"/><rect x="68.8" y="68.0" width="1.5" height="1.5" fill="#fbfbfb"/><rect x="64.8" y="70.0" width="2" height="2" fill="#b9b9b9"/><rect x="65.8" y="71.0" width="1.5" height="1.5" fill="#fbfbfb"/><rect x="67.8" y="73.0" width="2" height="2" fill="#b9b9b9"/><rect x="68.8" y="74.0" width="1.5" height="1.5" fill="#fbfbfb"/><rect x="64.8" y="76.0" width="2" height="2" fill="#b9b9b9"/><rect x="65.8" y="77.0" width="1.5" height="1.5" fill="#fbfbfb"/><rect x="67.8" y="79.0" width="2" height="2" fill="#b9b9b9"/><rect x="68.8" y="80.0" width="1.5" height="1.5" fill="#fbfbfb"/><rect x="64.8" y="82.0" width="2" height="2" fill="#b9b9b9"/><rect x="65.8" y="83.0" width="1.5" height="1.5" fill="#fbfbfb"/><rect x="67.8" y="85.0" width="2" height="2" fill="#b9b9b9"/><rect x="68.8" y="86.0" width="1.5" height="1.5" fill="#fbfbfb"/><path d="M77.5,64.5 h11 l5.5,5.5 v15.3 h-16.5z" fill="#fff" stroke="#555" stroke-width="1"/><path d="M88.5,64.5 v5.5 h5.5" fill="#eee" stroke="#555" stroke-width="1"/><path d="M113,66 h7 l1.5,2 h10.5 v3 h-19z" fill="#f3c94a" stroke="#caa23a" stroke-width="0.8"/><path d="M115.5,71.5 h19.5 l-2.5,12.3 h-19.5z" fill="#fcd94f" stroke="#caa23a" stroke-width="0.8"/><path d="M113,68 v15.8 h0.5 l2,-12.3" fill="#f0c443" stroke="#caa23a" stroke-width="0.8"/><g transform="translate(152,63)" opacity="1"><rect x="0.5" y="0.5" width="19.5" height="21" rx="2" fill="#6b98d3" stroke="#4670a6" stroke-width="1"/><rect x="3.2" y="1.5" width="14" height="8.5" fill="#f1f1f1"/><path d="M5,3.5h10.5M5,5.7h10.5M5,7.9h10.5" stroke="#777" stroke-width="0.9"/><rect x="3.6" y="13.5" width="13" height="7" fill="#eaeaea"/><rect x="5.3" y="15" width="2.2" height="4.2" fill="#335b8c"/></g><g transform="translate(190,63)" opacity="1"><rect x="0.5" y="0.5" width="19.5" height="21" rx="2" fill="#6b98d3" stroke="#4670a6" stroke-width="1"/><rect x="3.2" y="1.5" width="14" height="8.5" fill="#f1f1f1"/><path d="M5,3.5h10.5M5,5.7h10.5M5,7.9h10.5" stroke="#777" stroke-width="0.9"/><rect x="3.6" y="13.5" width="13" height="7" fill="#eaeaea"/><rect x="5.3" y="15" width="2.2" height="4.2" fill="#335b8c"/></g><rect x="202" y="77" width="10" height="10" rx="1.8" fill="#4c9a4c" stroke="#3a7d3a" stroke-width="0.6"/><path d="M204.5,84.5 l5,-5" stroke="#fff" stroke-width="1.6" stroke-linecap="round"/><path d="M226,64.3 h16 l5.5,5 v10.2 h-21.5z" fill="#fff" stroke="#666" stroke-width="1"/><path d="M242,64.3v5h5.5" fill="none" stroke="#666" stroke-width="0.8"/><rect x="240" y="77" width="10" height="9.5" rx="1.5" fill="#d4a72b"/><path d="M245,78.5v6.5M241.9,80l6.2,3.5M241.9,83.5l6.2,-3.5" stroke="#fff" stroke-width="1.1"/><path d="M264.5,64.3 h16 l5.5,5 v10.2 h-21.5z" fill="#fff" stroke="#666" stroke-width="1"/><path d="M280.5,64.3v5h5.5" fill="none" stroke="#666" stroke-width="0.8"/><line x1="276" y1="75" x2="286" y2="85.5" stroke="#555" stroke-width="3.4" stroke-linecap="round"/><line x1="277" y1="76" x2="286" y2="85.5" stroke="#e6cf7a" stroke-width="2.2" stroke-linecap="round"/><circle cx="274" cy="72" r="3.6" fill="none" stroke="#555" stroke-width="1.8"/><rect x="272" y="67" width="3" height="4" fill="#fff"/><rect x="301.8" y="64.0" width="2" height="2" fill="#b9b9b9"/><rect x="302.8" y="65.0" width="1.5" height="1.5" fill="#fbfbfb"/><rect x="304.8" y="67.0" width="2" height="2" fill="#b9b9b9"/><rect x="305.8" y="68.0" width="1.5" height="1.5" fill="#fbfbfb"/><rect x="301.8" y="70.0" width="2" height="2" fill="#b9b9b9"/><rect x="302.8" y="71.0" width="1.5" height="1.5" fill="#fbfbfb"/><rect x="304.8" y="73.0" width="2" height="2" fill="#b9b9b9"/><rect x="305.8" y="74.0" width="1.5" height="1.5" fill="#fbfbfb"/><rect x="301.8" y="76.0" width="2" height="2" fill="#b9b9b9"/><rect x="302.8" y="77.0" width="1.5" height="1.5" fill="#fbfbfb"/><rect x="304.8" y="79.0" width="2" height="2" fill="#b9b9b9"/><rect x="305.8" y="80.0" width="1.5" height="1.5" fill="#fbfbfb"/><rect x="301.8" y="82.0" width="2" height="2" fill="#b9b9b9"/><rect x="302.8" y="83.0" width="1.5" height="1.5" fill="#fbfbfb"/><rect x="304.8" y="85.0" width="2" height="2" fill="#b9b9b9"/><rect x="305.8" y="86.0" width="1.5" height="1.5" fill="#fbfbfb"/><path d="M318.5,85.5 l-3,-7 l-2.2,-4.6 c-0.6,-1.4 1.2,-2.4 2.2,-1.2 l2.2,2.6 v-10.5 c0,-1.8 2.6,-1.8 2.6,0 v7 v-8.6 c0,-1.8 2.6,-1.8 2.6,0 v8.4 v-7.4 c0,-1.8 2.6,-1.8 2.6,0 v7.6 v-5.6 c0,-1.8 2.6,-1.8 2.6,0 v10.5 c0,3 -1,5 -2.5,7.7z" fill="#fff" stroke="#111" stroke-width="1.1" stroke-linejoin="round"/><rect x="349.5" y="63.5" width="16" height="11.5" fill="#f6df3c" stroke="#222" stroke-width="0.9" stroke-dasharray="1.5 1.2"/><path d="M360.5,64.5 l4.5,4.5 h-3 v4 h4 v-3 l4.5,4.5 l-4.5,4.5 v-3 h-4 v4 h3 l-4.5,4.5 l-4.5,-4.5 h3 v-4 h-4 v3 l-4.5,-4.5 l4.5,-4.5 v3 h4 v-4 h-3z" fill="#5f92cf" stroke="#3d6ea8" stroke-width="0.7"/><g opacity="1"><line x1="395.724" y1="78.276" x2="388.835" y2="85.58" stroke="#222" stroke-width="3.2" stroke-linecap="round"/><line x1="393.815" y1="80.185" x2="388.835" y2="85.58" stroke="#e8c22f" stroke-width="2.2" stroke-linecap="round"/><circle cx="401.7" cy="72.3" r="8.3" fill="#e9e9e9" stroke="#777" stroke-width="1.1"/><circle cx="400.7" cy="70.8" r="5.8100000000000005" fill="#fff" opacity="0.55"/></g><path d="M401.7,67v10.6M396.4,72.3h10.6" stroke="#4a7fc1" stroke-width="2.2"/><rect x="420.6" y="57" width="33" height="35.5" fill="url(#pressed)"/><line x1="453.5" y1="57" x2="453.5" y2="92.5" stroke="#a5a5a5" stroke-width="1"/><line x1="420.6" y1="57" x2="420.6" y2="92.5" stroke="#c4c4c4" stroke-width="1"/><g opacity="1"><line x1="433.524" y1="78.276" x2="426.635" y2="85.58" stroke="#222" stroke-width="3.2" stroke-linecap="round"/><line x1="431.615" y1="80.185" x2="426.635" y2="85.58" stroke="#e8c22f" stroke-width="2.2" stroke-linecap="round"/><circle cx="439.5" cy="72.3" r="8.3" fill="#e9e9e9" stroke="#777" stroke-width="1.1"/><circle cx="438.5" cy="70.8" r="5.8100000000000005" fill="#fff" opacity="0.55"/></g><path d="M434.5,72.3h10" stroke="#4a7fc1" stroke-width="2.2"/><g opacity="0.55"><line x1="472.04" y1="78.16000000000001" x2="465.40000000000003" y2="85.2" stroke="#222" stroke-width="3.2" stroke-linecap="round"/><line x1="470.2" y1="80.0" x2="465.40000000000003" y2="85.2" stroke="#e8c22f" stroke-width="2.2" stroke-linecap="round"/><circle cx="477.8" cy="72.4" r="8" fill="#e9e9e9" stroke="#777" stroke-width="1.1"/><circle cx="476.8" cy="70.9" r="5.6" fill="#fff" opacity="0.55"/></g><text x="477.8" y="76.5" font-family="Liberation Sans" font-weight="bold" font-size="9.5" fill="#888" text-anchor="middle" opacity="0.9">1:1</text><path d="M504.5,63 h7 l-2.5,2.5 l3,3 l-3.5,3.5 l-3,-3 l-1,1z M524.7,63 h-7 l2.5,2.5 l-3,3 l3.5,3.5 l3,-3 l1,1z M524.7,83 h-7 l2.5,-2.5 l-3,-3 l3.5,-3.5 l3,3 l1,-1z" fill="#5f92cf" stroke="#3d6ea8" stroke-width="0.6"/><g opacity="1"><line x1="507.98400000000004" y1="78.016" x2="501.51000000000005" y2="84.88000000000001" stroke="#222" stroke-width="3.2" stroke-linecap="round"/><line x1="506.19" y1="79.81" x2="501.51000000000005" y2="84.88000000000001" stroke="#e8c22f" stroke-width="2.2" stroke-linecap="round"/><circle cx="513.6" cy="72.4" r="7.8" fill="#e9e9e9" stroke="#777" stroke-width="1.1"/><circle cx="512.6" cy="70.9" r="5.46" fill="#fff" opacity="0.55"/></g><rect x="539.7" y="64.2" width="9.5" height="13.6" fill="#f6df3c" stroke="#222" stroke-width="0.9" stroke-dasharray="1.5 1.2"/><g opacity="1"><line x1="548.58" y1="77.42" x2="541.5250000000001" y2="84.9" stroke="#222" stroke-width="3.2" stroke-linecap="round"/><line x1="546.625" y1="79.375" x2="541.5250000000001" y2="84.9" stroke="#e8c22f" stroke-width="2.2" stroke-linecap="round"/><circle cx="554.7" cy="71.3" r="8.5" fill="#ecebd8" stroke="#777" stroke-width="1.1"/><circle cx="553.7" cy="69.8" r="5.949999999999999" fill="#fff" opacity="0.55"/></g><rect x="580.7" y="67.4" width="16.3" height="14.4" fill="#d8cfe0" stroke="#8f8496" stroke-width="1"/><g opacity="1"><line x1="585.68" y1="77.42" x2="578.625" y2="84.9" stroke="#222" stroke-width="3.2" stroke-linecap="round"/><line x1="583.7249999999999" y1="79.375" x2="578.625" y2="84.9" stroke="#e8c22f" stroke-width="2.2" stroke-linecap="round"/><circle cx="591.8" cy="71.3" r="8.5" fill="#e9e9e9" stroke="#777" stroke-width="1.1"/><circle cx="590.8" cy="69.8" r="5.949999999999999" fill="#fff" opacity="0.55"/></g><rect x="587.5" y="67" width="8" height="8" fill="none" stroke="#bbb" stroke-width="0.8"/><g opacity="1"><line x1="623.624" y1="77.976" x2="616.735" y2="85.28" stroke="#222" stroke-width="3.2" stroke-linecap="round"/><line x1="621.715" y1="79.885" x2="616.735" y2="85.28" stroke="#e8c22f" stroke-width="2.2" stroke-linecap="round"/><circle cx="629.6" cy="72" r="8.3" fill="#e9e9e9" stroke="#777" stroke-width="1.1"/><circle cx="628.6" cy="70.5" r="5.8100000000000005" fill="#fff" opacity="0.55"/></g><rect x="628.3" y="75.9" width="10.4" height="10.4" fill="#4f86c9" stroke="#3a6ba6" stroke-width="0.6"/><path d="M635.5,78 l-4,3.2 l4,3.2" fill="none" stroke="#fff" stroke-width="1.6"/><g opacity="0.6"><line x1="661.424" y1="77.976" x2="654.535" y2="85.28" stroke="#222" stroke-width="3.2" stroke-linecap="round"/><line x1="659.515" y1="79.885" x2="654.535" y2="85.28" stroke="#e8c22f" stroke-width="2.2" stroke-linecap="round"/><circle cx="667.4" cy="72" r="8.3" fill="#e9e9e9" stroke="#777" stroke-width="1.1"/><circle cx="666.4" cy="70.5" r="5.8100000000000005" fill="#fff" opacity="0.55"/></g><g opacity="0.55"><rect x="666" y="75.9" width="10.4" height="10.4" fill="#4f86c9"/><path d="M669,78 l4,3.2 l-4,3.2" fill="none" stroke="#fff" stroke-width="1.6"/></g><path d="M694.5,73 a9,8.5 0 0 1 16,-5 l2.5,-2.5 v8 h-8 l2.8,-2.8 a5.5,5 0 0 0 -9.5,2.3z" fill="#3f86d8" stroke="#2d6ab3" stroke-width="0.6"/><path d="M712,76.5 a9,8.5 0 0 1 -16,5 l-2.5,2.5 v-8 h8 l-2.8,2.8 a5.5,5 0 0 0 9.5,-2.3z" fill="#3f86d8" stroke="#2d6ab3" stroke-width="0.6"/><rect x="729.2" y="64.0" width="2" height="2" fill="#b9b9b9"/><rect x="730.2" y="65.0" width="1.5" height="1.5" fill="#fbfbfb"/><rect x="732.2" y="67.0" width="2" height="2" fill="#b9b9b9"/><rect x="733.2" y="68.0" width="1.5" height="1.5" fill="#fbfbfb"/><rect x="729.2" y="70.0" width="2" height="2" fill="#b9b9b9"/><rect x="730.2" y="71.0" width="1.5" height="1.5" fill="#fbfbfb"/><rect x="732.2" y="73.0" width="2" height="2" fill="#b9b9b9"/><rect x="733.2" y="74.0" width="1.5" height="1.5" fill="#fbfbfb"/><rect x="729.2" y="76.0" width="2" height="2" fill="#b9b9b9"/><rect x="730.2" y="77.0" width="1.5" height="1.5" fill="#fbfbfb"/><rect x="732.2" y="79.0" width="2" height="2" fill="#b9b9b9"/><rect x="733.2" y="80.0" width="1.5" height="1.5" fill="#fbfbfb"/><rect x="729.2" y="82.0" width="2" height="2" fill="#b9b9b9"/><rect x="730.2" y="83.0" width="1.5" height="1.5" fill="#fbfbfb"/><rect x="732.2" y="85.0" width="2" height="2" fill="#b9b9b9"/><rect x="733.2" y="86.0" width="1.5" height="1.5" fill="#fbfbfb"/><circle cx="746.5" cy="71.7" r="8.3" fill="#5d93d0" stroke="#4a7bb8" stroke-width="0.7"/><text x="746" y="77" font-family="Liberation Serif" font-style="italic" font-weight="bold" font-size="13" fill="#fff" text-anchor="middle">i</text><path transform="translate(749.5,73.2) scale(1)" d="M0,0 L0,12 L3,9.2 L5.2,14 L7.2,13 L5,8.4 L9,8.4 Z" fill="#fff" stroke="#111" stroke-width="0.9" stroke-linejoin="round" opacity="1"/><g opacity="0.75"><circle cx="791.8" cy="73.2" r="8.5" fill="none" stroke="#c9c9c9" stroke-width="2.6" stroke-dasharray="2.6 1.6"/><circle cx="791.8" cy="73.2" r="5.6" fill="#92b3da" stroke="#7a9cc4" stroke-width="0.8"/><path d="M790,70.5 v5.5 l4.5,-2.7z" fill="#fff"/></g><path transform="translate(796,75.5) scale(0.95)" d="M0,0 L0,12 L3,9.2 L5.2,14 L7.2,13 L5,8.4 L9,8.4 Z" fill="#fafafa" stroke="#aaa" stroke-width="0.9" stroke-linejoin="round" opacity="1"/><path d="M808.4000000000001,77.39999999999999 h7.6 l-3.8,6.4z" fill="#555"/><rect x="832.1" y="63.4" width="13.3" height="12.8" fill="#f6df3c" stroke="#888" stroke-width="0.8"/><rect x="848.3" y="63.4" width="7.4" height="12.8" fill="#eee" stroke="#888" stroke-width="0.8"/><rect x="832.1" y="79.1" width="13.3" height="7.4" fill="#eee" stroke="#888" stroke-width="0.8"/><path transform="translate(839.5,69.8) scale(1.05)" d="M0,0 L0,12 L3,9.2 L5.2,14 L7.2,13 L5,8.4 L9,8.4 Z" fill="#fff" stroke="#111" stroke-width="0.9" stroke-linejoin="round" opacity="1"/><path d="M858.2,77.39999999999999 h7.6 l-3.8,6.4z" fill="#555"/><rect x="879.3" y="65.8" width="14.3" height="14.8" fill="#f6df3c" stroke="#c9a800" stroke-width="0.9" stroke-dasharray="1.5 1.1"/><rect x="889.1" y="76.2" width="10.9" height="10.3" rx="1.5" fill="#d9262b"/><circle cx="894.5" cy="81.3" r="3.2" fill="none" stroke="#fff" stroke-width="1.2"/><path d="M892.3,83.5 l4.4,-4.4" stroke="#fff" stroke-width="1.2"/><text x="915.5" y="79" font-family="Liberation Serif" font-size="25" fill="#5a2d7a" textLength="12" lengthAdjust="spacingAndGlyphs">ε</text><rect x="925" y="74.2" width="12.9" height="12.3" fill="#f6df3c" stroke="#c9a800" stroke-width="0.8" stroke-dasharray="1.4 1"/><rect x="954.3" y="65.6" width="19.4" height="19.4" fill="#fff" stroke="#3e6080" stroke-width="1.3"/><rect x="955" y="66.3" width="18" height="4.2" fill="#c8e2f5"/><path d="M956,68.3h2.5M960,68.3h12M956,73.5h2.5M960,73.5h12M956,76.5h2.5M960,76.5h12M956,79.5h2.5M960,79.5h12M956,82.5h2.5M960,82.5h12" stroke="#3e6080" stroke-width="0.9"/><path d="M954.3,71.2h19.4" stroke="#3e6080" stroke-width="0.8"/><path d="M991.5,63.5v22.5M1013.3,63.5v22.5M991,86h22.8M991.5,66.7h21.8M991.5,73h21.8M991.5,80.2h21.8" stroke="#888" stroke-width="0.9" fill="none"/><rect x="999.4" y="65.1" width="3.2" height="3.2" transform="rotate(45 1001 66.7)" fill="#fff" stroke="#e27a7a" stroke-width="0.9"/><rect x="1005.4" y="65.1" width="3.2" height="3.2" transform="rotate(45 1007 66.7)" fill="#fff" stroke="#e27a7a" stroke-width="0.9"/><rect x="993.9" y="71.4" width="3.2" height="3.2" transform="rotate(45 995.5 73)" fill="#fff" stroke="#8fc48f" stroke-width="0.9"/><rect x="999.9" y="71.4" width="3.2" height="3.2" transform="rotate(45 1001.5 73)" fill="#fff" stroke="#8fc48f" stroke-width="0.9"/><rect x="994.4" y="78.6" width="3.2" height="3.2" transform="rotate(45 996 80.2)" fill="#fff" stroke="#8fb2d6" stroke-width="0.9"/><rect x="1005.4" y="78.6" width="3.2" height="3.2" transform="rotate(45 1007 80.2)" fill="#fff" stroke="#8fb2d6" stroke-width="0.9"/><path d="M1037.5,70.5h17.5M1037.5,68.5v4M1055,68.5v4" stroke="#2c4e6e" stroke-width="1.3"/><rect x="1035.5" y="75.4" width="21" height="7.5" fill="#e1e3d9" stroke="#444" stroke-width="1"/><path d="M1038,75.5v2.5M1040.5,75.5v2.5M1043,75.5v2.5M1046,75.5v4M1049,75.5v2.5M1051.5,75.5v2.5M1054,75.5v2.5" stroke="#444" stroke-width="0.7"/><path d="M1060.2,77.39999999999999 h7.6 l-3.8,6.4z" fill="#555"/><path d="M1082,65.5 h16 a2.5,2.5 0 0 1 2.5,2.5 v9.5 a2.5,2.5 0 0 1 -2.5,2.5 h-11 l-4.5,4 v-4 h-0.5 a2.5,2.5 0 0 1 -2.5,-2.5 v-9.5 a2.5,2.5 0 0 1 2.5,-2.5z" fill="#f6e68a" stroke="#d2b32a" stroke-width="1"/><path d="M1083,68h4" stroke="#fff" stroke-width="1.2" opacity="0.8"/><rect x="1119.5" y="68.3" width="16" height="11.2" fill="#ededed" stroke="#333" stroke-width="0.8" stroke-dasharray="1 1"/><path d="M1128,70 v-3.5 l1.5,-1.3 h1.5 v1.5 h3 v3.3z" fill="#f2cc2f" stroke="#c79d14" stroke-width="0.6"/><rect x="1129" y="76" width="10.5" height="10.5" rx="1.8" fill="#d4a72b"/><path d="M1134.2,77.5v7.5M1131,79.3l6.4,3.9M1131,83.2l6.4,-3.9" stroke="#fff" stroke-width="1.1"/><rect x="1157.4" y="68.3" width="16.3" height="11.2" fill="#ededed" stroke="#333" stroke-width="0.8" stroke-dasharray="1 1"/><path d="M1166,70 v-3.5 l1.5,-1.3 h1.5 v1.5 h3 v3.3z" fill="#f2cc2f" stroke="#c79d14" stroke-width="0.6"/><path d="M1203.5,65.5 h18 v17 h-14 l-7,3 l3,-3 v-17z" fill="#dde8f0" stroke="#777" stroke-width="0.8"/><text x="1213" y="79" font-family="Liberation Serif" font-size="12.5" fill="#333" text-anchor="middle">T</text><path d="M1224.2,77.39999999999999 h7.6 l-3.8,6.4z" fill="#555"/><rect x="1242.0" y="64.0" width="2" height="2" fill="#b9b9b9"/><rect x="1243.0" y="65.0" width="1.5" height="1.5" fill="#fbfbfb"/><rect x="1245.0" y="67.0" width="2" height="2" fill="#b9b9b9"/><rect x="1246.0" y="68.0" width="1.5" height="1.5" fill="#fbfbfb"/><rect x="1242.0" y="70.0" width="2" height="2" fill="#b9b9b9"/><rect x="1243.0" y="71.0" width="1.5" height="1.5" fill="#fbfbfb"/><rect x="1245.0" y="73.0" width="2" height="2" fill="#b9b9b9"/><rect x="1246.0" y="74.0" width="1.5" height="1.5" fill="#fbfbfb"/><rect x="1242.0" y="76.0" width="2" height="2" fill="#b9b9b9"/><rect x="1243.0" y="77.0" width="1.5" height="1.5" fill="#fbfbfb"/><rect x="1245.0" y="79.0" width="2" height="2" fill="#b9b9b9"/><rect x="1246.0" y="80.0" width="1.5" height="1.5" fill="#fbfbfb"/><rect x="1242.0" y="82.0" width="2" height="2" fill="#b9b9b9"/><rect x="1243.0" y="83.0" width="1.5" height="1.5" fill="#fbfbfb"/><rect x="1245.0" y="85.0" width="2" height="2" fill="#b9b9b9"/><rect x="1246.0" y="86.0" width="1.5" height="1.5" fill="#fbfbfb"/><rect x="1253.3" y="64.5" width="19.5" height="20" fill="#6497d0" stroke="#24303e" stroke-width="1"/><rect x="1253.3" y="64.5" width="5" height="20" fill="#2a3b52"/><text x="1266" y="79.5" font-family="Liberation Sans" font-size="12" fill="#fff" text-anchor="middle">?</text><path transform="translate(1290.5,64) scale(1.35)" d="M0,0 L0,12 L3,9.2 L5.2,14 L7.2,13 L5,8.4 L9,8.4 Z" fill="#fff" stroke="#222" stroke-width="0.9" stroke-linejoin="round" opacity="1"/><text x="1307.5" y="84.5" font-family="Liberation Serif" font-weight="bold" font-size="23" fill="#111" text-anchor="middle">?</text><rect x="64.8" y="99.5" width="2" height="2" fill="#b9b9b9"/><rect x="65.8" y="100.5" width="1.5" height="1.5" fill="#fbfbfb"/><rect x="67.8" y="102.5" width="2" height="2" fill="#b9b9b9"/><rect x="68.8" y="103.5" width="1.5" height="1.5" fill="#fbfbfb"/><rect x="64.8" y="105.5" width="2" height="2" fill="#b9b9b9"/><rect x="65.8" y="106.5" width="1.5" height="1.5" fill="#fbfbfb"/><rect x="67.8" y="108.5" width="2" height="2" fill="#b9b9b9"/><rect x="68.8" y="109.5" width="1.5" height="1.5" fill="#fbfbfb"/><rect x="64.8" y="111.5" width="2" height="2" fill="#b9b9b9"/><rect x="65.8" y="112.5" width="1.5" height="1.5" fill="#fbfbfb"/><rect x="67.8" y="114.5" width="2" height="2" fill="#b9b9b9"/><rect x="68.8" y="115.5" width="1.5" height="1.5" fill="#fbfbfb"/><rect x="64.8" y="117.5" width="2" height="2" fill="#b9b9b9"/><rect x="65.8" y="118.5" width="1.5" height="1.5" fill="#fbfbfb"/><rect x="67.8" y="120.5" width="2" height="2" fill="#b9b9b9"/><rect x="68.8" y="121.5" width="1.5" height="1.5" fill="#fbfbfb"/><g opacity="0.55"><path d="M78,121 l1,-6 l11,-15 l4,3 l-11,15z" fill="#d99a6c" stroke="#888" stroke-width="0.8"/><path d="M83,122 l1,-6 l11,-15 l4,3 l-11,15z" fill="#e9a06a" stroke="#888" stroke-width="0.8"/><path d="M78,121 l1,-6 l4,3z M83,122 l1,-6 l4,3z" fill="#bbb"/></g><path d="M92.8,116.8 h7.6 l-3.8,6.4z" fill="#666"/><path d="M116,122.5 l1.5,-7 l10.5,-15.5 l4,2.7 l-10.5,15.5z" fill="#f1d535" stroke="#6e6420" stroke-width="0.9"/><path d="M116,122.5 l1.5,-7 l4,2.7z" fill="#eee" stroke="#555" stroke-width="0.7"/><path d="M116,122.5 l0.6,-2.5 l1.8,1.2z" fill="#222"/><g transform="translate(151,99.8)" opacity="0.45"><rect x="0.5" y="0.5" width="19.5" height="21" rx="2" fill="#6b98d3" stroke="#4670a6" stroke-width="1"/><rect x="3.2" y="1.5" width="14" height="8.5" fill="#f1f1f1"/><path d="M5,3.5h10.5M5,5.7h10.5M5,7.9h10.5" stroke="#777" stroke-width="0.9"/><rect x="3.6" y="13.5" width="13" height="7" fill="#eaeaea"/><rect x="5.3" y="15" width="2.2" height="4.2" fill="#335b8c"/></g><g opacity="0.7"><path d="M163,122.5 l1.3,-5 l7.5,-11 l3,2 l-7.5,11z" fill="#e9a06a" stroke="#999" stroke-width="0.7"/></g><g opacity="0.85"><circle cx="196.7" cy="103.8" r="2.6" fill="#b9dcbc" stroke="#777" stroke-width="0.8"/><circle cx="207.5" cy="103.8" r="2.6" fill="#b9dcbc" stroke="#777" stroke-width="0.8"/><circle cx="190.8" cy="113.6" r="2.6" fill="#b9dcbc" stroke="#777" stroke-width="0.8"/></g><g opacity="0.75"><rect x="201.1" y="112.2" width="10.8" height="10.3" rx="1.8" fill="#d4a72b"/><path d="M206.5,113.6v7.5M203.3,115.5l6.4,3.8M203.3,119.3l6.4,-3.8" stroke="#fff" stroke-width="1.1"/></g><path d="M228,105 c0,-6 6,-5.5 10,-4.5 c4,1 6,-1 9,0.5 c3,2 1.5,9 -1.5,10 c-3,1 -5,-1 -9,0 c-5,1.5 -8.5,0 -8.5,-6z" fill="#c5e3c8" stroke="#888" stroke-width="0.9"/><rect x="239" y="112.2" width="10.8" height="10.3" fill="#6d98cf" opacity="0.85"/><path d="M240.8,117.4h5M244,114.5l3,2.9l-3,2.9" fill="none" stroke="#fff" stroke-width="1.5"/><g opacity="0.8"><path d="M267,119.5 L273.7,105.3 H286.5" fill="none" stroke="#555" stroke-width="0.8"/><circle cx="273.7" cy="105.3" r="2.4" fill="#b9dcbc" stroke="#777" stroke-width="0.7"/><line x1="276.5" y1="111" x2="286" y2="121" stroke="#b0874a" stroke-width="2.4"/><line x1="285.5" y1="110" x2="277" y2="121" stroke="#d7c343" stroke-width="1.8"/></g><g opacity="0.75"><rect x="305.1" y="101.8" width="14.8" height="14.8" fill="#f1e38e" stroke="#c9a800" stroke-width="0.9" stroke-dasharray="1.5 1.1"/><rect x="316" y="113.2" width="9.8" height="9.3" rx="1.5" fill="#e05a5e"/><path d="M318.2,115.3l5.4,5.2M323.6,115.3l-5.4,5.2" stroke="#fff" stroke-width="1.5"/></g><g opacity="0.8"><path d="M340.5,104 L356,112.5 M340,110.5 L356,111.5" stroke="#888" stroke-width="1" fill="none"/><ellipse cx="359.5" cy="108" rx="3.6" ry="2.4" transform="rotate(-30 359.5 108)" fill="none" stroke="#d23a3a" stroke-width="1.6"/><ellipse cx="359.5" cy="115.8" rx="3.6" ry="2.4" transform="rotate(30 359.5 115.8)" fill="none" stroke="#d23a3a" stroke-width="1.6"/></g><g opacity="0.55"><path d="M386,102.5h8l3.5,3.5v12h-11.5z" fill="#f5f5f5" stroke="#888" stroke-width="0.9"/><path d="M381.5,104.5h8l3.5,3.5v11.5h-11.5z" fill="#f5f5f5" stroke="#888" stroke-width="0.9"/><path d="M383.5,111h7M383.5,113h7M383.5,115h7M383.5,117h7" stroke="#999" stroke-width="0.6"/></g><g opacity="0.6"><rect x="420.5" y="101" width="15" height="19.3" fill="#f1dfc2" stroke="#d19b52" stroke-width="1"/><rect x="425" y="99.8" width="6" height="3" fill="#f5f5f5" stroke="#999" stroke-width="0.7"/><path d="M422.8,104.5h8.5l2.5,2.5v11h-11z" fill="#fafafa" stroke="#888" stroke-width="0.8"/><path d="M424.5,110h7.5M424.5,112.3h7.5M424.5,114.6h7.5" stroke="#999" stroke-width="0.6"/></g><rect x="453.9" y="99.0" width="2" height="2" fill="#b9b9b9"/><rect x="454.9" y="100.0" width="1.5" height="1.5" fill="#fbfbfb"/><rect x="456.9" y="102.0" width="2" height="2" fill="#b9b9b9"/><rect x="457.9" y="103.0" width="1.5" height="1.5" fill="#fbfbfb"/><rect x="453.9" y="105.0" width="2" height="2" fill="#b9b9b9"/><rect x="454.9" y="106.0" width="1.5" height="1.5" fill="#fbfbfb"/><rect x="456.9" y="108.0" width="2" height="2" fill="#b9b9b9"/><rect x="457.9" y="109.0" width="1.5" height="1.5" fill="#fbfbfb"/><rect x="453.9" y="111.0" width="2" height="2" fill="#b9b9b9"/><rect x="454.9" y="112.0" width="1.5" height="1.5" fill="#fbfbfb"/><rect x="456.9" y="114.0" width="2" height="2" fill="#b9b9b9"/><rect x="457.9" y="115.0" width="1.5" height="1.5" fill="#fbfbfb"/><rect x="453.9" y="117.0" width="2" height="2" fill="#b9b9b9"/><rect x="454.9" y="118.0" width="1.5" height="1.5" fill="#fbfbfb"/><rect x="456.9" y="120.0" width="2" height="2" fill="#b9b9b9"/><rect x="457.9" y="121.0" width="1.5" height="1.5" fill="#fbfbfb"/><g opacity="1"><path d="M467.5,102.9 h16.3 v10.7 h-16.3 l-4.5,-5.35z" fill="#f5d63d" stroke="#8a7410" stroke-width="0.9"/><text x="468.3" y="111.60000000000001" font-family="Liberation Sans" font-weight="bold" font-size="9.5" fill="#222" textLength="14.5" lengthAdjust="spacingAndGlyphs">abc</text></g><rect x="501" y="102.9" width="23.7" height="17.5" fill="#d6e4f4" stroke="#6a9ee0" stroke-width="1"/><g opacity="1"><path d="M507.1,103.5 h13.8 v10.7 h-13.8 l-4.5,-5.35z" fill="#f5d63d" stroke="#8a7410" stroke-width="0.9"/><text x="507.90000000000003" y="112.2" font-family="Liberation Sans" font-weight="bold" font-size="8.8" fill="#222" textLength="10" lengthAdjust="spacingAndGlyphs">ab</text></g><path d="M519,107 v6" stroke="#fff" stroke-width="1.6"/><circle cx="518.6" cy="115.6" r="3.7" fill="#c4161c"/><circle cx="517.4" cy="114.5" r="1.2" fill="#f07a7a"/><g opacity="0.55"><path d="M543.7,103 h13.8 v10.7 h-13.8 l-4.5,-5.35z" fill="#f5d63d" stroke="#8a7410" stroke-width="0.9"/><text x="544.5" y="111.7" font-family="Liberation Sans" font-weight="bold" font-size="8.8" fill="#222" textLength="10" lengthAdjust="spacingAndGlyphs">ab</text></g><circle cx="557.5" cy="116.6" r="4" fill="#c86a6d" opacity="0.8"/><g opacity="0.5"><path d="M581.8,103 h16.3 v10.7 h-16.3 l-4.5,-5.35z" fill="#f5d63d" stroke="#8a7410" stroke-width="0.9"/><text x="582.5999999999999" y="111.7" font-family="Liberation Sans" font-weight="bold" font-size="9.5" fill="#222" textLength="14.5" lengthAdjust="spacingAndGlyphs">abc</text></g><g opacity="0.75"><path d="M585,118.1 q7.5,-6 15,0 q-7.5,6 -15,0z" fill="#fff" stroke="#777" stroke-width="0.8"/><circle cx="592.5" cy="118.1" r="2.4" fill="#5d7fa8"/></g><g opacity="0.5"><path d="M619.9,103 h16.3 v10.7 h-16.3 l-4.5,-5.35z" fill="#f5d63d" stroke="#8a7410" stroke-width="0.9"/><text x="620.6999999999999" y="111.7" font-family="Liberation Sans" font-weight="bold" font-size="9.5" fill="#222" textLength="14.5" lengthAdjust="spacingAndGlyphs">abc</text></g><g opacity="0.75"><rect x="627.6" y="112" width="11.4" height="10.7" rx="1" fill="#6d98cf"/><path d="M629.5,117.3h5.5M632.5,114.5l3,2.8l-3,2.8" fill="none" stroke="#fff" stroke-width="1.5"/></g><g opacity="0.5"><path d="M658.0,103 h16.3 v10.7 h-16.3 l-4.5,-5.35z" fill="#f5d63d" stroke="#8a7410" stroke-width="0.9"/><text x="658.8" y="111.7" font-family="Liberation Sans" font-weight="bold" font-size="9.5" fill="#222" textLength="14.5" lengthAdjust="spacingAndGlyphs">abc</text></g><g opacity="0.75"><rect x="665.7" y="112" width="11.4" height="10.7" rx="1" fill="#6d98cf"/><circle cx="671.4" cy="117.3" r="3" fill="none" stroke="#fff" stroke-width="1.3"/></g><g opacity="0.5"><path d="M696.1,103 h16.3 v10.7 h-16.3 l-4.5,-5.35z" fill="#f5d63d" stroke="#8a7410" stroke-width="0.9"/><text x="696.9" y="111.7" font-family="Liberation Sans" font-weight="bold" font-size="9.5" fill="#222" textLength="14.5" lengthAdjust="spacingAndGlyphs">abc</text></g><g opacity="0.7"><rect x="703.8" y="112" width="11.4" height="10.7" rx="1" fill="#d9c26a"/><path d="M706,121 l7,-7" stroke="#fff" stroke-width="1.5"/></g><rect x="729.2" y="99.0" width="2" height="2" fill="#b9b9b9"/><rect x="730.2" y="100.0" width="1.5" height="1.5" fill="#fbfbfb"/><rect x="732.2" y="102.0" width="2" height="2" fill="#b9b9b9"/><rect x="733.2" y="103.0" width="1.5" height="1.5" fill="#fbfbfb"/><rect x="729.2" y="105.0" width="2" height="2" fill="#b9b9b9"/><rect x="730.2" y="106.0" width="1.5" height="1.5" fill="#fbfbfb"/><rect x="732.2" y="108.0" width="2" height="2" fill="#b9b9b9"/><rect x="733.2" y="109.0" width="1.5" height="1.5" fill="#fbfbfb"/><rect x="729.2" y="111.0" width="2" height="2" fill="#b9b9b9"/><rect x="730.2" y="112.0" width="1.5" height="1.5" fill="#fbfbfb"/><rect x="732.2" y="114.0" width="2" height="2" fill="#b9b9b9"/><rect x="733.2" y="115.0" width="1.5" height="1.5" fill="#fbfbfb"/><rect x="729.2" y="117.0" width="2" height="2" fill="#b9b9b9"/><rect x="730.2" y="118.0" width="1.5" height="1.5" fill="#fbfbfb"/><rect x="732.2" y="120.0" width="2" height="2" fill="#b9b9b9"/><rect x="733.2" y="121.0" width="1.5" height="1.5" fill="#fbfbfb"/><rect x="742.2" y="99.0" width="2" height="2" fill="#b9b9b9"/><rect x="743.2" y="100.0" width="1.5" height="1.5" fill="#fbfbfb"/><rect x="745.2" y="102.0" width="2" height="2" fill="#b9b9b9"/><rect x="746.2" y="103.0" width="1.5" height="1.5" fill="#fbfbfb"/><rect x="742.2" y="105.0" width="2" height="2" fill="#b9b9b9"/><rect x="743.2" y="106.0" width="1.5" height="1.5" fill="#fbfbfb"/><rect x="745.2" y="108.0" width="2" height="2" fill="#b9b9b9"/><rect x="746.2" y="109.0" width="1.5" height="1.5" fill="#fbfbfb"/><rect x="742.2" y="111.0" width="2" height="2" fill="#b9b9b9"/><rect x="743.2" y="112.0" width="1.5" height="1.5" fill="#fbfbfb"/><rect x="745.2" y="114.0" width="2" height="2" fill="#b9b9b9"/><rect x="746.2" y="115.0" width="1.5" height="1.5" fill="#fbfbfb"/><rect x="742.2" y="117.0" width="2" height="2" fill="#b9b9b9"/><rect x="743.2" y="118.0" width="1.5" height="1.5" fill="#fbfbfb"/><rect x="745.2" y="120.0" width="2" height="2" fill="#b9b9b9"/><rect x="746.2" y="121.0" width="1.5" height="1.5" fill="#fbfbfb"/><g><rect x="66.0" y="134.5" width="2" height="2" fill="#b9b9b9"/><rect x="67.0" y="135.5" width="1.5" height="1.5" fill="#fbfbfb"/><rect x="69.0" y="137.5" width="2" height="2" fill="#b9b9b9"/><rect x="70.0" y="138.5" width="1.5" height="1.5" fill="#fbfbfb"/><rect x="72.0" y="134.5" width="2" height="2" fill="#b9b9b9"/><rect x="73.0" y="135.5" width="1.5" height="1.5" fill="#fbfbfb"/><rect x="75.0" y="137.5" width="2" height="2" fill="#b9b9b9"/><rect x="76.0" y="138.5" width="1.5" height="1.5" fill="#fbfbfb"/><rect x="78.0" y="134.5" width="2" height="2" fill="#b9b9b9"/><rect x="79.0" y="135.5" width="1.5" height="1.5" fill="#fbfbfb"/><rect x="81.0" y="137.5" width="2" height="2" fill="#b9b9b9"/><rect x="82.0" y="138.5" width="1.5" height="1.5" fill="#fbfbfb"/><rect x="84.0" y="134.5" width="2" height="2" fill="#b9b9b9"/><rect x="85.0" y="135.5" width="1.5" height="1.5" fill="#fbfbfb"/><rect x="87.0" y="137.5" width="2" height="2" fill="#b9b9b9"/><rect x="88.0" y="138.5" width="1.5" height="1.5" fill="#fbfbfb"/><rect x="90.0" y="134.5" width="2" height="2" fill="#b9b9b9"/><rect x="91.0" y="135.5" width="1.5" height="1.5" fill="#fbfbfb"/><rect x="93.0" y="137.5" width="2" height="2" fill="#b9b9b9"/><rect x="94.0" y="138.5" width="1.5" height="1.5" fill="#fbfbfb"/><rect x="96.0" y="134.5" width="2" height="2" fill="#b9b9b9"/><rect x="97.0" y="135.5" width="1.5" height="1.5" fill="#fbfbfb"/><path d="M71,148.5 L78,165 L85,148.5 H91" fill="none" stroke="#3a5a80" stroke-width="1.2"/><circle cx="71" cy="148.5" r="2" fill="#fff" stroke="#3a5a80" stroke-width="1.1"/><circle cx="78" cy="165" r="2" fill="#fff" stroke="#3a5a80" stroke-width="1.1"/><circle cx="85" cy="148.5" r="2" fill="#fff" stroke="#3a5a80" stroke-width="1.1"/><circle cx="91" cy="148.5" r="2" fill="#fff" stroke="#3a5a80" stroke-width="1.1"/><rect x="83.5" y="159.5" width="9.5" height="9.5" rx="1.5" fill="#4c9a4c" stroke="#3a7d3a" stroke-width="0.5"/><path d="M88.25,161.5v5.5M85.5,164.25h5.5" stroke="#fff" stroke-width="1.8"/><rect x="69.5" y="184.0" width="6.5" height="6.5" fill="#1f3a5f"/><rect x="69.5" y="190.5" width="6.5" height="6.5" fill="#6b9bd2"/><rect x="69.5" y="197.0" width="6.5" height="6.5" fill="#1f3a5f"/><rect x="76.0" y="184.0" width="6.5" height="6.5" fill="#6b9bd2"/><rect x="76.0" y="190.5" width="6.5" height="6.5" fill="#1f3a5f"/><rect x="76.0" y="197.0" width="6.5" height="6.5" fill="#6b9bd2"/><rect x="82.5" y="184.0" width="6.5" height="6.5" fill="#1f3a5f"/><rect x="82.5" y="190.5" width="6.5" height="6.5" fill="#6b9bd2"/><rect x="82.5" y="197.0" width="6.5" height="6.5" fill="#1f3a5f"/><rect x="83.5" y="198" width="9.5" height="9.5" rx="1.5" fill="#4c9a4c" stroke="#3a7d3a" stroke-width="0.5"/><path d="M88.25,200v5.5M85.5,202.75h5.5" stroke="#fff" stroke-width="1.8"/><path d="M70,228 c0,-5 5,-6 9,-5.5 c5,0.5 9,2 9,6 c0,3 -2,4 -3,4 v4 h-2.5 v-3.5 h-3 v3.5 h-2.5 v-4 c-2,0 -3,1 -3,4 c0,1.5 -2,1.5 -2,0 c0,-3 -2,-4 -2,-8.5z" fill="#5a88bf" stroke="#2d4f78" stroke-width="1"/><rect x="83.5" y="236.5" width="9.5" height="9.5" rx="1.5" fill="#4c9a4c" stroke="#3a7d3a" stroke-width="0.5"/><path d="M88.25,238.5v5.5M85.5,241.25h5.5" stroke="#fff" stroke-width="1.8"/><path transform="translate(69.5,261.5)" d="M0,22 C3,14 8,5 20,0 C19,8 15,15 6,18 C4,19 2,20 0,22z" fill="#6d9bd1" stroke="#2d4f78" stroke-width="1"/><path transform="translate(69.5,261.5)" d="M1,21 C6,14 11,8 18,2" stroke="#2d4f78" stroke-width="0.7" fill="none"/><rect x="83.5" y="275" width="9.5" height="9.5" rx="1.5" fill="#4c9a4c" stroke="#3a7d3a" stroke-width="0.5"/><path d="M88.25,277v5.5M85.5,279.75h5.5" stroke="#fff" stroke-width="1.8"/><path d="M70,317 C75,310 76,303 73,297.5 C80,299 88,301 92,303 C88,307 86,313 85,320 C80,318 75,317 70,317z" fill="#6d9bd1" stroke="#223c5e" stroke-width="1.1"/><path d="M76,299 C79,305 80,312 78,318 M81,300 C84,306 84,313 82,319" stroke="#223c5e" stroke-width="0.7" fill="none"/><rect x="83.5" y="312" width="9.5" height="9.5" rx="1.5" fill="#4c9a4c" stroke="#3a7d3a" stroke-width="0.5"/><path d="M88.25,314v5.5M85.5,316.75h5.5" stroke="#fff" stroke-width="1.8"/><circle cx="78.5" cy="345" r="9.5" fill="#a9c6e6" stroke="#4a75a8" stroke-width="1"/><path d="M69.0,345h19M78.5,335.5v19" stroke="#fff" stroke-width="0.8"/><ellipse cx="78.5" cy="345" rx="4.5" ry="9.5" fill="none" stroke="#fff" stroke-width="0.8"/><path d="M72.5,342c2,-2 4,-1 5,1c-1,3 -4,2 -5,-1zM80.5,339c2,1 4,2 4,5c-2,0 -4,-2 -4,-5zM77.5,347c2,0 3,2 2,5c-2,-1 -3,-3 -2,-5z" fill="#2d4f78"/><rect x="83.5" y="350.5" width="9.5" height="9.5" rx="1.5" fill="#4c9a4c" stroke="#3a7d3a" stroke-width="0.5"/><path d="M88.25,352.5v5.5M85.5,355.25h5.5" stroke="#fff" stroke-width="1.8"/><circle cx="78.5" cy="384" r="9.5" fill="#203a5c"/><path d="M69.0,384h19M78.5,374.5v19" stroke="#fff" stroke-width="1.3"/><ellipse cx="78.5" cy="384" rx="4.5" ry="9.5" fill="none" stroke="#fff" stroke-width="1.2"/><path d="M70.0,379.5h17M70.0,388.5h17" stroke="#fff" stroke-width="1.1"/><rect x="83.5" y="389.5" width="9.5" height="9.5" rx="1.5" fill="#4c9a4c" stroke="#3a7d3a" stroke-width="0.5"/><path d="M88.25,391.5v5.5M85.5,394.25h5.5" stroke="#fff" stroke-width="1.8"/><circle cx="78.5" cy="422" r="9.5" fill="#a9c6e6" stroke="#4a75a8" stroke-width="1"/><path d="M69.0,422h19M78.5,412.5v19" stroke="#fff" stroke-width="0.8"/><ellipse cx="78.5" cy="422" rx="4.5" ry="9.5" fill="none" stroke="#fff" stroke-width="0.8"/><path d="M72.5,419c2,-2 4,-1 5,1c-1,3 -4,2 -5,-1zM80.5,416c2,1 4,2 4,5c-2,0 -4,-2 -4,-5zM77.5,424c2,0 3,2 2,5c-2,-1 -3,-3 -2,-5z" fill="#2d4f78"/><path d="M72.5,416.5 L78.5,430 L84.5,416.5 H89" fill="none" stroke="#3a5a80" stroke-width="1.1"/><circle cx="72.5" cy="416.5" r="1.8" fill="#fff" stroke="#3a5a80"/><circle cx="84.5" cy="416.5" r="1.8" fill="#fff" stroke="#3a5a80"/><circle cx="78.5" cy="430" r="1.8" fill="#fff" stroke="#3a5a80"/><rect x="83.5" y="428" width="9.5" height="9.5" rx="1.5" fill="#4c9a4c" stroke="#3a7d3a" stroke-width="0.5"/><path d="M88.25,430v5.5M85.5,432.75h5.5" stroke="#fff" stroke-width="1.8"/><path d="M73,454 c3,-4 9,-3 9,2 c0,5 -4,9 -9,11 c3,-3 4,-5 3,-7 c-3,0 -5,-3 -3,-6z" fill="#4f7fbc" stroke="#2d4f78" stroke-width="0.8"/><rect x="83.5" y="466.5" width="9.5" height="9.5" rx="1.5" fill="#4c9a4c" stroke="#3a7d3a" stroke-width="0.5"/><path d="M88.25,468.5v5.5M85.5,471.25h5.5" stroke="#fff" stroke-width="1.8"/><path transform="translate(69.5,489)" d="M0,22 C3,14 8,5 20,0 C19,8 15,15 6,18 C4,19 2,20 0,22z" fill="#8fb2da" stroke="#2d4f78" stroke-width="1"/><path transform="translate(69.5,489)" d="M1,21 C6,14 11,8 18,2" stroke="#2d4f78" stroke-width="0.7" fill="none"/><rect x="76.5" y="501" width="10.5" height="10" rx="1.8" fill="#d4a72b"/><path d="M81.7,502.5v7M78.7,504.3l6,3.5M78.7,507.8l6,-3.5" stroke="#fff" stroke-width="1.1"/><path d="M95.2,501.8 h7.6 l-3.8,6.4z" fill="#555"/><rect x="69.5" y="528.5" width="19" height="18.5" fill="#f3f3f3" stroke="#888" stroke-width="0.9"/><rect x="82.5" y="540" width="10" height="9.5" rx="2" fill="#e0454a"/><path d="M84.8,544.75h5.4" stroke="#fff" stroke-width="1.8"/><rect x="66.0" y="561.5" width="2" height="2" fill="#b9b9b9"/><rect x="67.0" y="562.5" width="1.5" height="1.5" fill="#fbfbfb"/><rect x="69.0" y="564.5" width="2" height="2" fill="#b9b9b9"/><rect x="70.0" y="565.5" width="1.5" height="1.5" fill="#fbfbfb"/><rect x="72.0" y="561.5" width="2" height="2" fill="#b9b9b9"/><rect x="73.0" y="562.5" width="1.5" height="1.5" fill="#fbfbfb"/><rect x="75.0" y="564.5" width="2" height="2" fill="#b9b9b9"/><rect x="76.0" y="565.5" width="1.5" height="1.5" fill="#fbfbfb"/><rect x="78.0" y="561.5" width="2" height="2" fill="#b9b9b9"/><rect x="79.0" y="562.5" width="1.5" height="1.5" fill="#fbfbfb"/><rect x="81.0" y="564.5" width="2" height="2" fill="#b9b9b9"/><rect x="82.0" y="565.5" width="1.5" height="1.5" fill="#fbfbfb"/><rect x="84.0" y="561.5" width="2" height="2" fill="#b9b9b9"/><rect x="85.0" y="562.5" width="1.5" height="1.5" fill="#fbfbfb"/><rect x="87.0" y="564.5" width="2" height="2" fill="#b9b9b9"/><rect x="88.0" y="565.5" width="1.5" height="1.5" fill="#fbfbfb"/><rect x="90.0" y="561.5" width="2" height="2" fill="#b9b9b9"/><rect x="91.0" y="562.5" width="1.5" height="1.5" fill="#fbfbfb"/><rect x="93.0" y="564.5" width="2" height="2" fill="#b9b9b9"/><rect x="94.0" y="565.5" width="1.5" height="1.5" fill="#fbfbfb"/><rect x="96.0" y="561.5" width="2" height="2" fill="#b9b9b9"/><rect x="97.0" y="562.5" width="1.5" height="1.5" fill="#fbfbfb"/></g></svg>
</body></html>
